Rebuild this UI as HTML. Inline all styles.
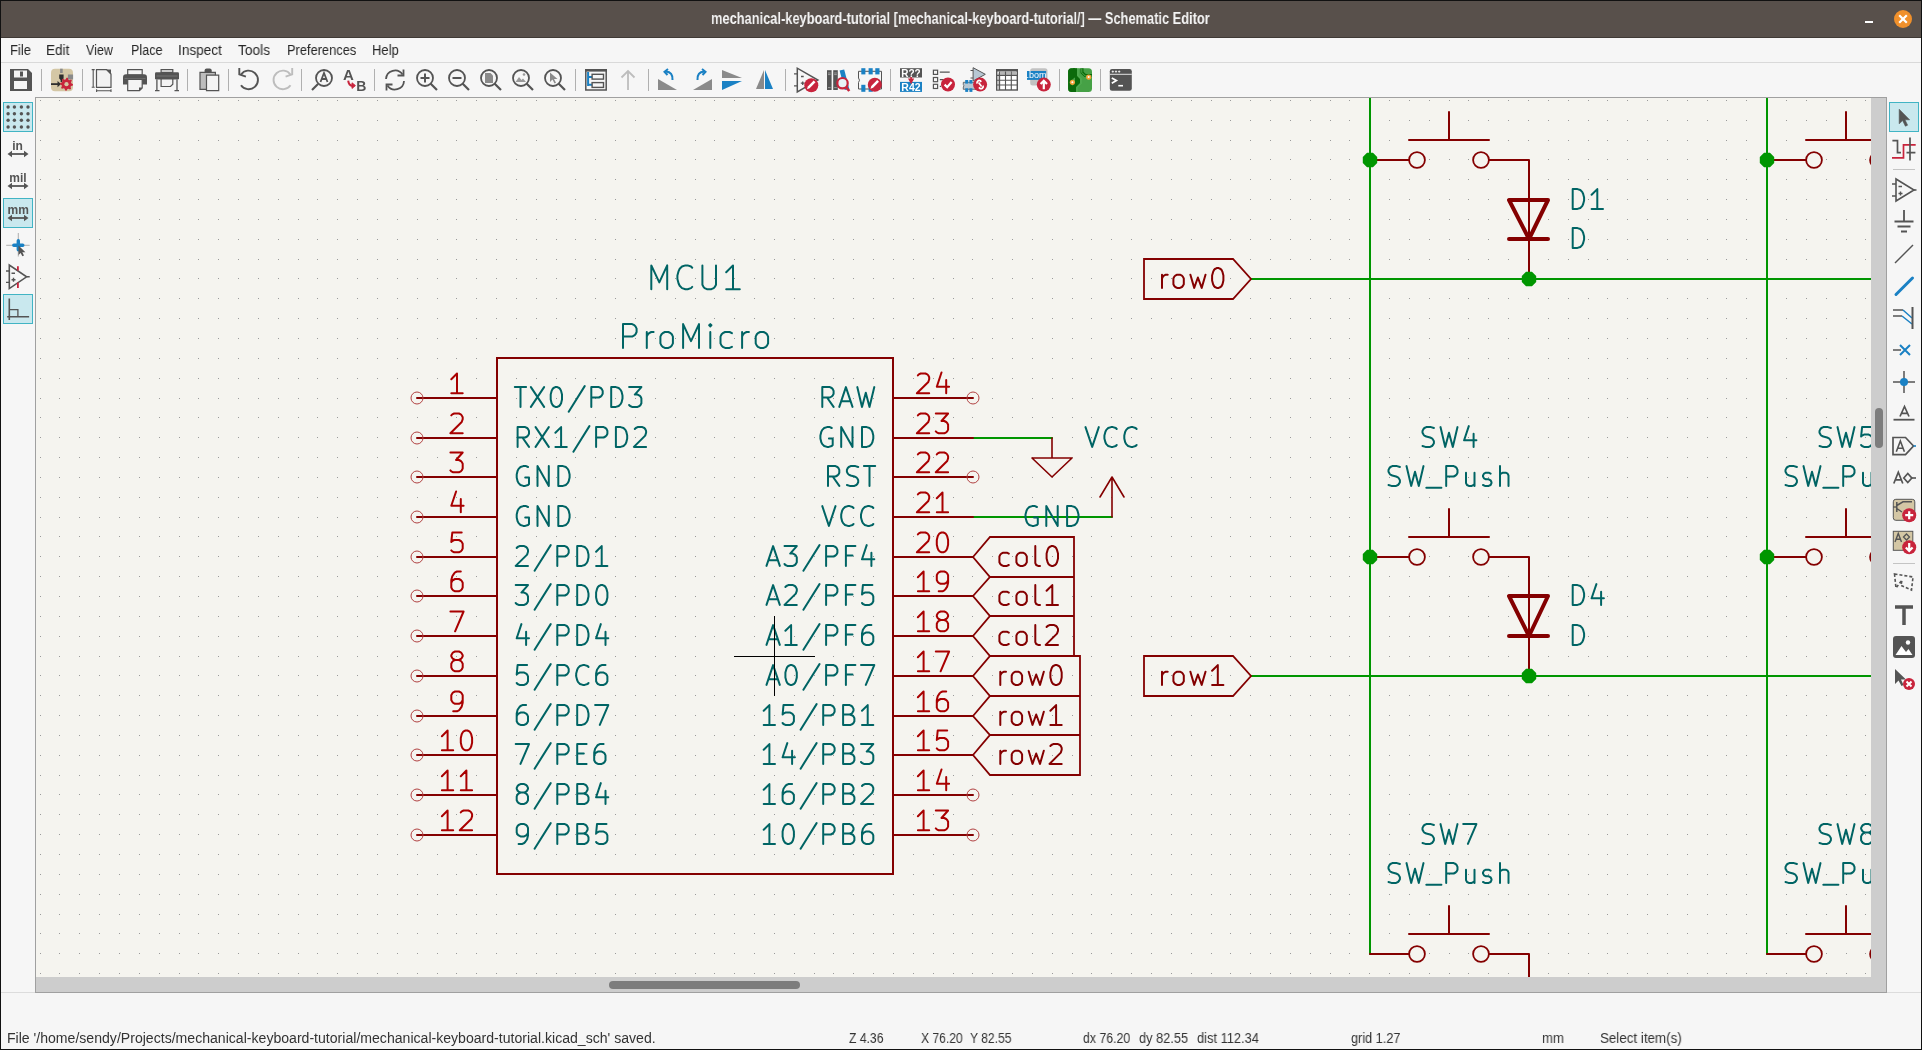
<!DOCTYPE html><html><head><meta charset="utf-8"><style>
*{margin:0;padding:0;box-sizing:border-box}
html,body{width:1922px;height:1050px;overflow:hidden;background:#f6f6f6;font-family:"Liberation Sans",sans-serif}
.a{position:absolute}
.t{position:absolute;white-space:pre;line-height:1;will-change:transform}
svg{will-change:transform;overflow:visible}
</style></head><body><div class="a" style="left:0;top:0;width:1922px;height:1050px;background:#f6f6f6"></div><div class="a" style="left:0;top:0;width:1922px;height:38px;background:#58504b;border-top:1px solid #1a1a1a"></div><div class="a" style="left:0;top:37px;width:1922px;height:1px;background:#3f3935"></div><div class="t" id="title" style="left:711px;top:11.2px;font-size:16px;font-weight:bold;color:#f4f4f4;transform:scaleX(0.8025);transform-origin:0 0">mechanical-keyboard-tutorial [mechanical-keyboard-tutorial/] — Schematic Editor</div><div class="a" style="left:1865px;top:21px;width:8px;height:2px;background:#fff"></div><div class="a" style="left:1894px;top:10px;width:18px;height:18px;border-radius:50%;background:#f0902b"></div><svg class="a" style="left:1894px;top:10px" width="18" height="18"><path d="M5.2 5.2L12.8 12.8M12.8 5.2L5.2 12.8" stroke="#fff" stroke-width="2.2"/></svg><div class="t" style="left:9.5px;top:43px;font-size:14px;color:#262626;transform:scaleX(0.93);transform-origin:0 0">File</div><div class="t" style="left:46px;top:43px;font-size:14px;color:#262626;transform:scaleX(0.97);transform-origin:0 0">Edit</div><div class="t" style="left:86px;top:43px;font-size:14px;color:#262626;transform:scaleX(0.89);transform-origin:0 0">View</div><div class="t" style="left:130.5px;top:43px;font-size:14px;color:#262626;transform:scaleX(0.9);transform-origin:0 0">Place</div><div class="t" style="left:178px;top:43px;font-size:14px;color:#262626;transform:scaleX(0.97);transform-origin:0 0">Inspect</div><div class="t" style="left:238px;top:43px;font-size:14px;color:#262626;transform:scaleX(0.98);transform-origin:0 0">Tools</div><div class="t" style="left:286.75px;top:43px;font-size:14px;color:#262626;transform:scaleX(0.917);transform-origin:0 0">Preferences</div><div class="t" style="left:371.75px;top:43px;font-size:14px;color:#262626;transform:scaleX(0.93);transform-origin:0 0">Help</div><div class="a" style="left:1px;top:62px;width:1920px;height:1px;background:#d9d9d9"></div><svg style="position:absolute;left:10px;top:69px" width="22" height="22" viewBox="0 0 22 22"><path d="M0 0H18L22 4V22H0Z" fill="#545454"/><rect x="4" y="1.5" width="13" height="7" fill="#f4f4f4"/><rect x="10" y="2.5" width="3" height="5" fill="#545454"/><rect x="4" y="12" width="13" height="8" fill="#f4f4f4"/></svg><div class="a" style="left:41px;top:69px;width:1px;height:22px;background:#b0b0b0"></div><svg style="position:absolute;left:51px;top:69px" width="22" height="22" viewBox="0 0 22 22"><rect x="0" y="-0.3" width="22" height="22.5" rx="4" fill="#d4c7a5"/><path d="M10.4 -0.3V4" stroke="#8a8a8a" stroke-width="2.6"/><rect x="16.9" y="5.5" width="5.2" height="4.9" fill="#8a8a8a"/><path d="M8.2 5.5H12.6V9.5L10.4 11.5L8.2 9.5Z" fill="#2e2e2e"/><path d="M10.4 9V13" stroke="#2e2e2e" stroke-width="1.6"/><path d="M0 15.1H7" stroke="#2e2e2e" stroke-width="1.8"/><path d="M6.5 12L10 15.1L6.5 18.2Z" fill="#2e2e2e"/><path d="M15.50 8.70L16.77 8.82L17.38 10.67L18.22 11.13L20.10 10.60L20.90 11.59L20.03 13.32L20.31 14.24L22.00 15.20L21.88 16.47L20.03 17.08L19.57 17.92L20.10 19.80L19.11 20.60L17.38 19.73L16.46 20.01L15.50 21.70L14.23 21.58L13.62 19.73L12.78 19.27L10.90 19.80L10.10 18.81L10.97 17.08L10.69 16.16L9.00 15.20L9.12 13.93L10.97 13.32L11.43 12.48L10.90 10.60L11.89 9.80L13.62 10.67L14.54 10.39Z" fill="#c8243c"/><circle cx="15.5" cy="15.2" r="2.1" fill="#d4c7a5"/></svg><div class="a" style="left:82px;top:69px;width:1px;height:22px;background:#b0b0b0"></div><svg style="position:absolute;left:92px;top:69px" width="22" height="22" viewBox="0 0 22 22"><path d="M4.5 0.6H14.5L19 5.1V18.4H4.5Z" fill="#f2f2f2" stroke="#545454" stroke-width="1.2"/><path d="M14 0.6L19 5.6V0.6Z" fill="#545454"/><path d="M1.2 0.3V18.3M-0.3 0.6H2.7M-0.3 18.3H2.7M4.6 21.7H19M4.6 20.2V23M19 20.2V23" stroke="#545454" stroke-width="1.1"/></svg><svg style="position:absolute;left:123px;top:69px" width="24" height="22" viewBox="0 0 24 22"><path d="M4.7 0.6H19.2V6H4.7Z" fill="#f4f4f4" stroke="#545454" stroke-width="1.2"/><path d="M0 8.5Q0 5.3 3 5.3H21Q24 5.3 24 8.5V15.6H0Z" fill="#545454"/><path d="M1.5 9.5H22.5" stroke="#8a8a8a" stroke-width="0.5"/><path d="M4.7 10.4H19.2V19L16.5 21.7H4.7Z" fill="#f4f4f4" stroke="#545454" stroke-width="1.2"/><path d="M19.2 18.5L16 21.7V18.5Z" fill="#545454"/></svg><svg style="position:absolute;left:155px;top:69px" width="24" height="22" viewBox="0 0 24 22"><path d="M6.1 0.6H17.8V3.4H6.1Z" fill="#f4f4f4" stroke="#545454" stroke-width="1.2"/><rect x="0" y="3.2" width="24" height="7.2" rx="1.2" fill="#545454"/><path d="M1.5 7H22.5" stroke="#8a8a8a" stroke-width="0.6"/><path d="M6.1 10H17.8V15.2L15.5 17.5H6.1Z" fill="#f4f4f4" stroke="#545454" stroke-width="1.2"/><path d="M1.9 10.4V21.7M22 10.4V21.7M0 21.7H4.5M19.5 21.7H24" stroke="#545454" stroke-width="1.3"/></svg><div class="a" style="left:187px;top:69px;width:1px;height:22px;background:#b0b0b0"></div><svg style="position:absolute;left:197px;top:69px" width="22" height="22" viewBox="0 0 22 22"><path d="M3 3.4H18.4V20.3H3Z" fill="#bdbdbd" stroke="#545454" stroke-width="1.2"/><path d="M7.6 3.6V1.5Q7.6 -0.5 9.6 -0.5H12.7Q14.7 -0.5 14.7 1.5V3.6Z" fill="#545454"/><path d="M9.5 6.2H21.7V21.7H9.5Z" fill="#f4f4f4" stroke="#545454" stroke-width="1.2"/></svg><div class="a" style="left:228px;top:69px;width:1px;height:22px;background:#b0b0b0"></div><svg style="position:absolute;left:238px;top:69px" width="22" height="22" viewBox="0 0 22 22"><path d="M3 5.6A9.3 9.3 0 1 1 3 16.2" fill="none" stroke="#545454" stroke-width="1.9"/><path d="M1.3 -1V5.3L7.9 7.6" fill="none" stroke="#545454" stroke-width="1.9"/></svg><svg style="position:absolute;left:270px;top:69px" width="22" height="22" viewBox="0 0 22 22"><g transform="translate(23.5 0) scale(-1 1)"><path d="M3 5.6A9.3 9.3 0 1 1 3 16.2" fill="none" stroke="#bdbdbd" stroke-width="1.9"/><path d="M1.3 -1V5.3L7.9 7.6" fill="none" stroke="#bdbdbd" stroke-width="1.9"/></g></svg><div class="a" style="left:301px;top:69px;width:1px;height:22px;background:#b0b0b0"></div><svg style="position:absolute;left:311px;top:69px" width="22" height="22" viewBox="0 0 22 22"><circle cx="13" cy="9" r="8" fill="none" stroke="#545454" stroke-width="1.8"/><path d="M7 15L1 21" stroke="#545454" stroke-width="2.2"/><path d="M9.5 13L13 4L16.5 13M10.8 10H15.2" fill="none" stroke="#545454" stroke-width="1.8"/></svg><svg style="position:absolute;left:343px;top:69px" width="22" height="22" viewBox="0 0 22 22"><text x="5.4" y="11.4" font-family="Liberation Sans" font-weight="bold" font-size="15" fill="#545454" text-anchor="middle">A</text><text x="18.2" y="21.5" font-family="Liberation Sans" font-weight="bold" font-size="14" fill="#545454" text-anchor="middle">B</text><path d="M5.2 11.6Q5.6 16.5 10 17" fill="none" stroke="#c8243c" stroke-width="2"/><path d="M9 13.8L12.4 16.6L9 19.4Z" fill="#c8243c" stroke="#c8243c" stroke-width="1"/></svg><div class="a" style="left:374px;top:69px;width:1px;height:22px;background:#b0b0b0"></div><svg style="position:absolute;left:384px;top:69px" width="22" height="22" viewBox="0 0 22 22"><path d="M2 10A9 9 0 0 1 18.5 5.5" fill="none" stroke="#545454" stroke-width="1.8"/><path d="M19.5 0.5V6.5H13.5" fill="none" stroke="#545454" stroke-width="1.8"/><path d="M20 12A9 9 0 0 1 3.5 16.5" fill="none" stroke="#545454" stroke-width="1.8"/><path d="M2.5 21.5V15.5H8.5" fill="none" stroke="#545454" stroke-width="1.8"/></svg><svg style="position:absolute;left:416px;top:69px" width="22" height="22" viewBox="0 0 22 22"><circle cx="9" cy="9" r="8" fill="none" stroke="#545454" stroke-width="1.8"/><path d="M14.5 14.5L21 21" stroke="#545454" stroke-width="2.2"/><path d="M9 4.5V13.5M4.5 9H13.5" stroke="#545454" stroke-width="2"/></svg><svg style="position:absolute;left:448px;top:69px" width="22" height="22" viewBox="0 0 22 22"><circle cx="9" cy="9" r="8" fill="none" stroke="#545454" stroke-width="1.8"/><path d="M14.5 14.5L21 21" stroke="#545454" stroke-width="2.2"/><path d="M4.5 9H13.5" stroke="#545454" stroke-width="2"/></svg><svg style="position:absolute;left:480px;top:69px" width="22" height="22" viewBox="0 0 22 22"><circle cx="9" cy="9" r="8" fill="none" stroke="#545454" stroke-width="1.8"/><path d="M14.5 14.5L21 21" stroke="#545454" stroke-width="2.2"/><path d="M5 4H10.5L13 6.5V14H5Z" fill="#8a8a8a"/></svg><svg style="position:absolute;left:512px;top:69px" width="22" height="22" viewBox="0 0 22 22"><circle cx="9" cy="9" r="8" fill="none" stroke="#545454" stroke-width="1.8"/><path d="M14.5 14.5L21 21" stroke="#545454" stroke-width="2.2"/><path d="M3.5 13L7 8L9.5 11L11 9.5L14 13Z" fill="#9a9a9a"/><circle cx="12" cy="5.5" r="1.3" fill="#9a9a9a"/></svg><svg style="position:absolute;left:544px;top:69px" width="22" height="22" viewBox="0 0 22 22"><circle cx="9" cy="9" r="8" fill="none" stroke="#545454" stroke-width="1.8"/><path d="M14.5 14.5L21 21" stroke="#545454" stroke-width="2.2"/><path d="M6 3.5V13L8.5 10.5L10.5 14.5L12 13.8L10 10H13.5Z" fill="#8a8a8a"/></svg><div class="a" style="left:575px;top:69px;width:1px;height:22px;background:#b0b0b0"></div><svg style="position:absolute;left:585px;top:69px" width="22" height="22" viewBox="0 0 22 22"><rect x="0.8" y="0.8" width="20.4" height="20.2" fill="none" stroke="#545454" stroke-width="1.5"/><rect x="0" y="0" width="22" height="2.6" fill="#545454"/><path d="M3.1 3V17M3.1 8.1H7.1M3.1 15.8H7.1" fill="none" stroke="#1a81c4" stroke-width="2"/><rect x="7.1" y="5.3" width="11.4" height="4.8" fill="none" stroke="#545454" stroke-width="1.4"/><rect x="7.1" y="13.6" width="11.4" height="4.8" fill="none" stroke="#545454" stroke-width="1.4"/></svg><svg style="position:absolute;left:617px;top:69px" width="22" height="22" viewBox="0 0 22 22"><path d="M11 2V21M4.5 8.5L11 2L17.5 8.5" fill="none" stroke="#bdbdbd" stroke-width="1.8"/></svg><div class="a" style="left:648px;top:69px;width:1px;height:22px;background:#b0b0b0"></div><svg style="position:absolute;left:658px;top:69px" width="22" height="22" viewBox="0 0 22 22"><path d="M0 10V21H19Z" fill="#8a8a8a"/><path d="M14.5 11Q15 3 8 2.5" fill="none" stroke="#1a81c4" stroke-width="2"/><path d="M10 0L6.5 2.8L9.5 6" fill="none" stroke="#1a81c4" stroke-width="2"/></svg><svg style="position:absolute;left:690px;top:69px" width="22" height="22" viewBox="0 0 22 22"><path d="M22 10V21H3Z" fill="#8a8a8a"/><path d="M7.5 11Q7 3 14 2.5" fill="none" stroke="#1a81c4" stroke-width="2"/><path d="M12 0L15.5 2.8L12.5 6" fill="none" stroke="#1a81c4" stroke-width="2"/></svg><svg style="position:absolute;left:722px;top:69px" width="22" height="22" viewBox="0 0 22 22"><path d="M0 1L20 9H0Z" fill="#8a8a8a"/><path d="M0 21L20 12H0Z" fill="#1a81c4"/></svg><svg style="position:absolute;left:754px;top:69px" width="22" height="22" viewBox="0 0 22 22"><path d="M10 1L2 20H10Z" fill="#8a8a8a"/><path d="M11 1L19 20H11Z" fill="#1a81c4"/></svg><div class="a" style="left:785px;top:69px;width:1px;height:22px;background:#b0b0b0"></div><svg style="position:absolute;left:795px;top:69px" width="22" height="22" viewBox="0 0 22 22"><path d="M2.3 -0.8V22.9L22.9 11.1Z" fill="none" stroke="#545454" stroke-width="1.5"/><path d="M-1 4.9H2.3M-1 16.9H2.3M6 7.5H8.7M5.8 14.2H9.6M7.7 12.4V16" stroke="#545454" stroke-width="1.3"/><circle cx="16.3" cy="16.3" r="7" fill="#c8243c"/><g transform="translate(-0.5 0.2)"><path d="M12.5 20L13.3 17.2L19.2 11.3L21 13.1L15.1 19Z" fill="#fff"/></g></svg><svg style="position:absolute;left:827px;top:69px" width="22" height="22" viewBox="0 0 22 22"><rect x="0" y="1.2" width="4.6" height="19.8" fill="#545454"/><rect x="6.2" y="1.2" width="4.6" height="19.8" fill="#545454"/><path d="M12.6 1.5L17.2 0.4L22.3 20L17.8 21Z" fill="#1a81c4"/><path d="M1 4H3.6M7.2 4H9.8M1 5.6H3.6M7.2 5.6H9.8M1 18.6H3.6M7.2 18.6H9.8" stroke="#bbb" stroke-width="0.7"/><circle cx="15.5" cy="14.2" r="5.2" fill="#e8f1f6" stroke="#c8243c" stroke-width="2.2"/><path d="M18.8 17.8L22.3 22" stroke="#c8243c" stroke-width="2.6"/></svg><svg style="position:absolute;left:859px;top:69px" width="22" height="22" viewBox="0 0 22 22"><path d="M-0.5 2.3H22.5V20H-0.5V13.5Q1.5 11.2 -0.5 9Z" fill="none" stroke="#545454" stroke-width="1"/><g fill="#1a81c4"><rect x="2.3" y="-0.8" width="4.1" height="6.2"/><rect x="9.6" y="-0.8" width="4.1" height="6.2"/><rect x="16.3" y="-0.8" width="4.2" height="6.2"/><rect x="2.3" y="15.8" width="4.1" height="7"/><rect x="9.6" y="15.8" width="4.1" height="7"/></g><circle cx="15.8" cy="15.8" r="7" fill="#c8243c"/><g transform="translate(-1 -0.3)"><path d="M12.5 20L13.3 17.2L19.2 11.3L21 13.1L15.1 19Z" fill="#fff"/></g></svg><div class="a" style="left:890px;top:69px;width:1px;height:22px;background:#b0b0b0"></div><svg style="position:absolute;left:900px;top:69px" width="22" height="22" viewBox="0 0 22 22"><rect x="0" y="-0.8" width="22" height="9.3" fill="#545454"/><rect x="0" y="12.9" width="22" height="10" fill="#1a81c4"/><text x="11" y="7.6" font-family="Liberation Sans" font-weight="bold" font-size="10" fill="#fff" text-anchor="middle">R??</text><text x="11" y="21.8" font-family="Liberation Sans" font-weight="bold" font-size="10.5" fill="#fff" text-anchor="middle">R42</text><path d="M8 9.6H14.2L11.1 15.3Z" fill="#c8243c"/><path d="M11.1 8V11" stroke="#c8243c" stroke-width="1.6"/></svg><svg style="position:absolute;left:932px;top:69px" width="22" height="22" viewBox="0 0 22 22"><g fill="none" stroke="#545454" stroke-width="1.2"><rect x="1.4" y="1.2" width="4.2" height="4.2"/><rect x="1.4" y="8.5" width="4.2" height="4.2"/><rect x="1.4" y="15.3" width="4.2" height="4.2"/><path d="M7.8 3.1H17.7M7.8 10.6H11.5M7.8 17.4H9"/></g><circle cx="16" cy="15.5" r="7" fill="#c8243c"/><path d="M12.6 15.6L15.2 18.2L19.6 13" fill="none" stroke="#fff" stroke-width="2.2"/></svg><svg style="position:absolute;left:964px;top:69px" width="22" height="22" viewBox="0 0 22 22"><path d="M9.1 -1.3V12L21.3 5.3Z" fill="#b7c7d3" stroke="#545454" stroke-width="1"/><path d="M6.5 1.5H9.1M6.5 9H9.1" stroke="#545454" stroke-width="1"/><path d="M-0.7 13.3H12V20.3H-0.7V18Q0.5 16.8 -0.7 15.6Z" fill="#b7c7d3" stroke="#545454" stroke-width="0.8"/><g fill="#1a81c4"><rect x="1.2" y="11" width="3" height="3.6"/><rect x="5.4" y="11" width="3" height="3.6"/><rect x="1.2" y="19.3" width="3" height="3.6"/><rect x="5.4" y="19.3" width="3" height="3.6"/></g><circle cx="16.1" cy="15.6" r="7" fill="#c8243c"/><g fill="none" stroke="#fff" stroke-width="1.7"><path d="M13.2 14.6A2.2 2.2 0 0 1 16.3 11.8L17.3 12.8"/><path d="M19 16.6A2.2 2.2 0 0 1 15.9 19.4L14.9 18.4"/><path d="M14.6 13.6L17.6 17.6"/></g></svg><svg style="position:absolute;left:996px;top:69px" width="22" height="22" viewBox="0 0 22 22"><rect x="0.7" y="0.8" width="20.6" height="20.2" fill="#fff" stroke="#545454" stroke-width="1.4"/><rect x="0" y="0.1" width="22" height="2.4" fill="#545454"/><g fill="#b5b5b5"><rect x="1" y="3.5" width="1.8" height="17"/><rect x="4.3" y="3" width="4.7" height="2.8"/><rect x="9.9" y="3" width="4.7" height="2.8"/><rect x="16" y="3" width="4.6" height="2.8"/></g><path d="M3.6 2.5V21M9.5 2.5V21M15.3 2.5V21M1 6.4H21M1 11.2H21M1 16H21" stroke="#545454" stroke-width="1.1"/></svg><svg style="position:absolute;left:1028px;top:69px" width="22" height="22" viewBox="0 0 22 22"><rect x="2.2" y="-0.8" width="17.3" height="17.3" rx="2.5" fill="#c2c2c2"/><rect x="-1" y="2" width="19.1" height="8.9" fill="#1a81c4"/><text x="8.6" y="9.4" font-family="Liberation Sans" font-size="9" fill="#fff" text-anchor="middle">.bom</text><circle cx="15.8" cy="15.6" r="7" fill="#c8243c"/><path d="M15.8 20.2V12M12.6 15L15.8 11.8L19 15" fill="none" stroke="#fff" stroke-width="2.2"/></svg><div class="a" style="left:1059px;top:69px;width:1px;height:22px;background:#b0b0b0"></div><svg style="position:absolute;left:1069px;top:69px" width="22" height="22" viewBox="0 0 22 22"><defs><clipPath id="pcbc"><rect x="-0.9" y="-0.8" width="23.9" height="23.9" rx="3.5"/></clipPath></defs><g clip-path="url(#pcbc)"><rect x="-1" y="-1" width="25" height="25" fill="#46a146"/><path d="M-1 -1H6V8L3 11V24H-1Z" fill="#0b6a0b"/><path d="M8 -1V7L11 10V14L7 18V24H3V17L6 13V9L4 7V-1Z" fill="#0b6a0b"/><path d="M11.5 -1V4L15.5 8H24V5H16.8L14.5 2.7V-1Z" fill="#0b6a0b"/><path d="M9 -1V6.5L12 9.5V14.5L8 18.5V24M12.8 -1V3.5L16.3 7H24" fill="none" stroke="#5cb85c" stroke-width="0.8"/></g><circle cx="3.4" cy="13.3" r="2.6" fill="#f4a43a"/><circle cx="19.7" cy="8.1" r="2.6" fill="#f4a43a"/><circle cx="3.4" cy="13.3" r="1" fill="#fff"/><circle cx="19.7" cy="8.1" r="1" fill="#fff"/></svg><div class="a" style="left:1100px;top:69px;width:1px;height:22px;background:#b0b0b0"></div><svg style="position:absolute;left:1110px;top:69px" width="22" height="22" viewBox="0 0 22 22"><rect x="-0.2" y="0.1" width="22" height="21.6" rx="2.2" fill="#545454"/><path d="M-0.2 5.3H21.8" stroke="#f4f4f4" stroke-width="0.9"/><path d="M1.7 2.6H3.9M2.8 1.5V3.7M4.9 2.6H7.1M6 1.5V3.7M8.1 2.6H10.3M9.2 1.5V3.7" stroke="#fff" stroke-width="0.8"/><path d="M1.8 9L6.4 11.6L1.8 14.3" fill="none" stroke="#fff" stroke-width="1.7"/><path d="M8.3 16.7H13" stroke="#fff" stroke-width="1.6"/></svg><div class="a" style="left:35px;top:97px;width:1852px;height:896px;background:#cdcdcd;border:1px solid #a0a0a0"></div><div class="a" style="left:36px;top:98px;width:1835px;height:879px;background:#f5f4ef"></div><svg class="a" style="left:0;top:0" width="1922" height="1050"><defs><clipPath id="cv"><rect x="36" y="98" width="1835" height="879"/></clipPath></defs><g clip-path="url(#cv)"><path d="M40 100h1v1h-1zM59 100h1v1h-1zM79 100h1v1h-1zM99 100h1v1h-1zM119 100h1v1h-1zM139 100h1v1h-1zM159 100h1v1h-1zM179 100h1v1h-1zM198 100h1v1h-1zM218 100h1v1h-1zM238 100h1v1h-1zM258 100h1v1h-1zM278 100h1v1h-1zM298 100h1v1h-1zM317 100h1v1h-1zM337 100h1v1h-1zM357 100h1v1h-1zM377 100h1v1h-1zM397 100h1v1h-1zM417 100h1v1h-1zM437 100h1v1h-1zM456 100h1v1h-1zM476 100h1v1h-1zM496 100h1v1h-1zM516 100h1v1h-1zM536 100h1v1h-1zM556 100h1v1h-1zM575 100h1v1h-1zM595 100h1v1h-1zM615 100h1v1h-1zM635 100h1v1h-1zM655 100h1v1h-1zM675 100h1v1h-1zM695 100h1v1h-1zM714 100h1v1h-1zM734 100h1v1h-1zM754 100h1v1h-1zM774 100h1v1h-1zM794 100h1v1h-1zM814 100h1v1h-1zM833 100h1v1h-1zM853 100h1v1h-1zM873 100h1v1h-1zM893 100h1v1h-1zM913 100h1v1h-1zM933 100h1v1h-1zM953 100h1v1h-1zM972 100h1v1h-1zM992 100h1v1h-1zM1012 100h1v1h-1zM1032 100h1v1h-1zM1052 100h1v1h-1zM1072 100h1v1h-1zM1091 100h1v1h-1zM1111 100h1v1h-1zM1131 100h1v1h-1zM1151 100h1v1h-1zM1171 100h1v1h-1zM1191 100h1v1h-1zM1211 100h1v1h-1zM1230 100h1v1h-1zM1250 100h1v1h-1zM1270 100h1v1h-1zM1290 100h1v1h-1zM1310 100h1v1h-1zM1330 100h1v1h-1zM1349 100h1v1h-1zM1369 100h1v1h-1zM1389 100h1v1h-1zM1409 100h1v1h-1zM1429 100h1v1h-1zM1449 100h1v1h-1zM1468 100h1v1h-1zM1488 100h1v1h-1zM1508 100h1v1h-1zM1528 100h1v1h-1zM1548 100h1v1h-1zM1568 100h1v1h-1zM1588 100h1v1h-1zM1607 100h1v1h-1zM1627 100h1v1h-1zM1647 100h1v1h-1zM1667 100h1v1h-1zM1687 100h1v1h-1zM1707 100h1v1h-1zM1726 100h1v1h-1zM1746 100h1v1h-1zM1766 100h1v1h-1zM1786 100h1v1h-1zM1806 100h1v1h-1zM1826 100h1v1h-1zM1846 100h1v1h-1zM1865 100h1v1h-1zM40 120h1v1h-1zM59 120h1v1h-1zM79 120h1v1h-1zM99 120h1v1h-1zM119 120h1v1h-1zM139 120h1v1h-1zM159 120h1v1h-1zM179 120h1v1h-1zM198 120h1v1h-1zM218 120h1v1h-1zM238 120h1v1h-1zM258 120h1v1h-1zM278 120h1v1h-1zM298 120h1v1h-1zM317 120h1v1h-1zM337 120h1v1h-1zM357 120h1v1h-1zM377 120h1v1h-1zM397 120h1v1h-1zM417 120h1v1h-1zM437 120h1v1h-1zM456 120h1v1h-1zM476 120h1v1h-1zM496 120h1v1h-1zM516 120h1v1h-1zM536 120h1v1h-1zM556 120h1v1h-1zM575 120h1v1h-1zM595 120h1v1h-1zM615 120h1v1h-1zM635 120h1v1h-1zM655 120h1v1h-1zM675 120h1v1h-1zM695 120h1v1h-1zM714 120h1v1h-1zM734 120h1v1h-1zM754 120h1v1h-1zM774 120h1v1h-1zM794 120h1v1h-1zM814 120h1v1h-1zM833 120h1v1h-1zM853 120h1v1h-1zM873 120h1v1h-1zM893 120h1v1h-1zM913 120h1v1h-1zM933 120h1v1h-1zM953 120h1v1h-1zM972 120h1v1h-1zM992 120h1v1h-1zM1012 120h1v1h-1zM1032 120h1v1h-1zM1052 120h1v1h-1zM1072 120h1v1h-1zM1091 120h1v1h-1zM1111 120h1v1h-1zM1131 120h1v1h-1zM1151 120h1v1h-1zM1171 120h1v1h-1zM1191 120h1v1h-1zM1211 120h1v1h-1zM1230 120h1v1h-1zM1250 120h1v1h-1zM1270 120h1v1h-1zM1290 120h1v1h-1zM1310 120h1v1h-1zM1330 120h1v1h-1zM1349 120h1v1h-1zM1369 120h1v1h-1zM1389 120h1v1h-1zM1409 120h1v1h-1zM1429 120h1v1h-1zM1449 120h1v1h-1zM1468 120h1v1h-1zM1488 120h1v1h-1zM1508 120h1v1h-1zM1528 120h1v1h-1zM1548 120h1v1h-1zM1568 120h1v1h-1zM1588 120h1v1h-1zM1607 120h1v1h-1zM1627 120h1v1h-1zM1647 120h1v1h-1zM1667 120h1v1h-1zM1687 120h1v1h-1zM1707 120h1v1h-1zM1726 120h1v1h-1zM1746 120h1v1h-1zM1766 120h1v1h-1zM1786 120h1v1h-1zM1806 120h1v1h-1zM1826 120h1v1h-1zM1846 120h1v1h-1zM1865 120h1v1h-1zM40 140h1v1h-1zM59 140h1v1h-1zM79 140h1v1h-1zM99 140h1v1h-1zM119 140h1v1h-1zM139 140h1v1h-1zM159 140h1v1h-1zM179 140h1v1h-1zM198 140h1v1h-1zM218 140h1v1h-1zM238 140h1v1h-1zM258 140h1v1h-1zM278 140h1v1h-1zM298 140h1v1h-1zM317 140h1v1h-1zM337 140h1v1h-1zM357 140h1v1h-1zM377 140h1v1h-1zM397 140h1v1h-1zM417 140h1v1h-1zM437 140h1v1h-1zM456 140h1v1h-1zM476 140h1v1h-1zM496 140h1v1h-1zM516 140h1v1h-1zM536 140h1v1h-1zM556 140h1v1h-1zM575 140h1v1h-1zM595 140h1v1h-1zM615 140h1v1h-1zM635 140h1v1h-1zM655 140h1v1h-1zM675 140h1v1h-1zM695 140h1v1h-1zM714 140h1v1h-1zM734 140h1v1h-1zM754 140h1v1h-1zM774 140h1v1h-1zM794 140h1v1h-1zM814 140h1v1h-1zM833 140h1v1h-1zM853 140h1v1h-1zM873 140h1v1h-1zM893 140h1v1h-1zM913 140h1v1h-1zM933 140h1v1h-1zM953 140h1v1h-1zM972 140h1v1h-1zM992 140h1v1h-1zM1012 140h1v1h-1zM1032 140h1v1h-1zM1052 140h1v1h-1zM1072 140h1v1h-1zM1091 140h1v1h-1zM1111 140h1v1h-1zM1131 140h1v1h-1zM1151 140h1v1h-1zM1171 140h1v1h-1zM1191 140h1v1h-1zM1211 140h1v1h-1zM1230 140h1v1h-1zM1250 140h1v1h-1zM1270 140h1v1h-1zM1290 140h1v1h-1zM1310 140h1v1h-1zM1330 140h1v1h-1zM1349 140h1v1h-1zM1369 140h1v1h-1zM1389 140h1v1h-1zM1409 140h1v1h-1zM1429 140h1v1h-1zM1449 140h1v1h-1zM1468 140h1v1h-1zM1488 140h1v1h-1zM1508 140h1v1h-1zM1528 140h1v1h-1zM1548 140h1v1h-1zM1568 140h1v1h-1zM1588 140h1v1h-1zM1607 140h1v1h-1zM1627 140h1v1h-1zM1647 140h1v1h-1zM1667 140h1v1h-1zM1687 140h1v1h-1zM1707 140h1v1h-1zM1726 140h1v1h-1zM1746 140h1v1h-1zM1766 140h1v1h-1zM1786 140h1v1h-1zM1806 140h1v1h-1zM1826 140h1v1h-1zM1846 140h1v1h-1zM1865 140h1v1h-1zM40 159h1v1h-1zM59 159h1v1h-1zM79 159h1v1h-1zM99 159h1v1h-1zM119 159h1v1h-1zM139 159h1v1h-1zM159 159h1v1h-1zM179 159h1v1h-1zM198 159h1v1h-1zM218 159h1v1h-1zM238 159h1v1h-1zM258 159h1v1h-1zM278 159h1v1h-1zM298 159h1v1h-1zM317 159h1v1h-1zM337 159h1v1h-1zM357 159h1v1h-1zM377 159h1v1h-1zM397 159h1v1h-1zM417 159h1v1h-1zM437 159h1v1h-1zM456 159h1v1h-1zM476 159h1v1h-1zM496 159h1v1h-1zM516 159h1v1h-1zM536 159h1v1h-1zM556 159h1v1h-1zM575 159h1v1h-1zM595 159h1v1h-1zM615 159h1v1h-1zM635 159h1v1h-1zM655 159h1v1h-1zM675 159h1v1h-1zM695 159h1v1h-1zM714 159h1v1h-1zM734 159h1v1h-1zM754 159h1v1h-1zM774 159h1v1h-1zM794 159h1v1h-1zM814 159h1v1h-1zM833 159h1v1h-1zM853 159h1v1h-1zM873 159h1v1h-1zM893 159h1v1h-1zM913 159h1v1h-1zM933 159h1v1h-1zM953 159h1v1h-1zM972 159h1v1h-1zM992 159h1v1h-1zM1012 159h1v1h-1zM1032 159h1v1h-1zM1052 159h1v1h-1zM1072 159h1v1h-1zM1091 159h1v1h-1zM1111 159h1v1h-1zM1131 159h1v1h-1zM1151 159h1v1h-1zM1171 159h1v1h-1zM1191 159h1v1h-1zM1211 159h1v1h-1zM1230 159h1v1h-1zM1250 159h1v1h-1zM1270 159h1v1h-1zM1290 159h1v1h-1zM1310 159h1v1h-1zM1330 159h1v1h-1zM1349 159h1v1h-1zM1369 159h1v1h-1zM1389 159h1v1h-1zM1409 159h1v1h-1zM1429 159h1v1h-1zM1449 159h1v1h-1zM1468 159h1v1h-1zM1488 159h1v1h-1zM1508 159h1v1h-1zM1528 159h1v1h-1zM1548 159h1v1h-1zM1568 159h1v1h-1zM1588 159h1v1h-1zM1607 159h1v1h-1zM1627 159h1v1h-1zM1647 159h1v1h-1zM1667 159h1v1h-1zM1687 159h1v1h-1zM1707 159h1v1h-1zM1726 159h1v1h-1zM1746 159h1v1h-1zM1766 159h1v1h-1zM1786 159h1v1h-1zM1806 159h1v1h-1zM1826 159h1v1h-1zM1846 159h1v1h-1zM1865 159h1v1h-1zM40 179h1v1h-1zM59 179h1v1h-1zM79 179h1v1h-1zM99 179h1v1h-1zM119 179h1v1h-1zM139 179h1v1h-1zM159 179h1v1h-1zM179 179h1v1h-1zM198 179h1v1h-1zM218 179h1v1h-1zM238 179h1v1h-1zM258 179h1v1h-1zM278 179h1v1h-1zM298 179h1v1h-1zM317 179h1v1h-1zM337 179h1v1h-1zM357 179h1v1h-1zM377 179h1v1h-1zM397 179h1v1h-1zM417 179h1v1h-1zM437 179h1v1h-1zM456 179h1v1h-1zM476 179h1v1h-1zM496 179h1v1h-1zM516 179h1v1h-1zM536 179h1v1h-1zM556 179h1v1h-1zM575 179h1v1h-1zM595 179h1v1h-1zM615 179h1v1h-1zM635 179h1v1h-1zM655 179h1v1h-1zM675 179h1v1h-1zM695 179h1v1h-1zM714 179h1v1h-1zM734 179h1v1h-1zM754 179h1v1h-1zM774 179h1v1h-1zM794 179h1v1h-1zM814 179h1v1h-1zM833 179h1v1h-1zM853 179h1v1h-1zM873 179h1v1h-1zM893 179h1v1h-1zM913 179h1v1h-1zM933 179h1v1h-1zM953 179h1v1h-1zM972 179h1v1h-1zM992 179h1v1h-1zM1012 179h1v1h-1zM1032 179h1v1h-1zM1052 179h1v1h-1zM1072 179h1v1h-1zM1091 179h1v1h-1zM1111 179h1v1h-1zM1131 179h1v1h-1zM1151 179h1v1h-1zM1171 179h1v1h-1zM1191 179h1v1h-1zM1211 179h1v1h-1zM1230 179h1v1h-1zM1250 179h1v1h-1zM1270 179h1v1h-1zM1290 179h1v1h-1zM1310 179h1v1h-1zM1330 179h1v1h-1zM1349 179h1v1h-1zM1369 179h1v1h-1zM1389 179h1v1h-1zM1409 179h1v1h-1zM1429 179h1v1h-1zM1449 179h1v1h-1zM1468 179h1v1h-1zM1488 179h1v1h-1zM1508 179h1v1h-1zM1528 179h1v1h-1zM1548 179h1v1h-1zM1568 179h1v1h-1zM1588 179h1v1h-1zM1607 179h1v1h-1zM1627 179h1v1h-1zM1647 179h1v1h-1zM1667 179h1v1h-1zM1687 179h1v1h-1zM1707 179h1v1h-1zM1726 179h1v1h-1zM1746 179h1v1h-1zM1766 179h1v1h-1zM1786 179h1v1h-1zM1806 179h1v1h-1zM1826 179h1v1h-1zM1846 179h1v1h-1zM1865 179h1v1h-1zM40 199h1v1h-1zM59 199h1v1h-1zM79 199h1v1h-1zM99 199h1v1h-1zM119 199h1v1h-1zM139 199h1v1h-1zM159 199h1v1h-1zM179 199h1v1h-1zM198 199h1v1h-1zM218 199h1v1h-1zM238 199h1v1h-1zM258 199h1v1h-1zM278 199h1v1h-1zM298 199h1v1h-1zM317 199h1v1h-1zM337 199h1v1h-1zM357 199h1v1h-1zM377 199h1v1h-1zM397 199h1v1h-1zM417 199h1v1h-1zM437 199h1v1h-1zM456 199h1v1h-1zM476 199h1v1h-1zM496 199h1v1h-1zM516 199h1v1h-1zM536 199h1v1h-1zM556 199h1v1h-1zM575 199h1v1h-1zM595 199h1v1h-1zM615 199h1v1h-1zM635 199h1v1h-1zM655 199h1v1h-1zM675 199h1v1h-1zM695 199h1v1h-1zM714 199h1v1h-1zM734 199h1v1h-1zM754 199h1v1h-1zM774 199h1v1h-1zM794 199h1v1h-1zM814 199h1v1h-1zM833 199h1v1h-1zM853 199h1v1h-1zM873 199h1v1h-1zM893 199h1v1h-1zM913 199h1v1h-1zM933 199h1v1h-1zM953 199h1v1h-1zM972 199h1v1h-1zM992 199h1v1h-1zM1012 199h1v1h-1zM1032 199h1v1h-1zM1052 199h1v1h-1zM1072 199h1v1h-1zM1091 199h1v1h-1zM1111 199h1v1h-1zM1131 199h1v1h-1zM1151 199h1v1h-1zM1171 199h1v1h-1zM1191 199h1v1h-1zM1211 199h1v1h-1zM1230 199h1v1h-1zM1250 199h1v1h-1zM1270 199h1v1h-1zM1290 199h1v1h-1zM1310 199h1v1h-1zM1330 199h1v1h-1zM1349 199h1v1h-1zM1369 199h1v1h-1zM1389 199h1v1h-1zM1409 199h1v1h-1zM1429 199h1v1h-1zM1449 199h1v1h-1zM1468 199h1v1h-1zM1488 199h1v1h-1zM1508 199h1v1h-1zM1528 199h1v1h-1zM1548 199h1v1h-1zM1568 199h1v1h-1zM1588 199h1v1h-1zM1607 199h1v1h-1zM1627 199h1v1h-1zM1647 199h1v1h-1zM1667 199h1v1h-1zM1687 199h1v1h-1zM1707 199h1v1h-1zM1726 199h1v1h-1zM1746 199h1v1h-1zM1766 199h1v1h-1zM1786 199h1v1h-1zM1806 199h1v1h-1zM1826 199h1v1h-1zM1846 199h1v1h-1zM1865 199h1v1h-1zM40 219h1v1h-1zM59 219h1v1h-1zM79 219h1v1h-1zM99 219h1v1h-1zM119 219h1v1h-1zM139 219h1v1h-1zM159 219h1v1h-1zM179 219h1v1h-1zM198 219h1v1h-1zM218 219h1v1h-1zM238 219h1v1h-1zM258 219h1v1h-1zM278 219h1v1h-1zM298 219h1v1h-1zM317 219h1v1h-1zM337 219h1v1h-1zM357 219h1v1h-1zM377 219h1v1h-1zM397 219h1v1h-1zM417 219h1v1h-1zM437 219h1v1h-1zM456 219h1v1h-1zM476 219h1v1h-1zM496 219h1v1h-1zM516 219h1v1h-1zM536 219h1v1h-1zM556 219h1v1h-1zM575 219h1v1h-1zM595 219h1v1h-1zM615 219h1v1h-1zM635 219h1v1h-1zM655 219h1v1h-1zM675 219h1v1h-1zM695 219h1v1h-1zM714 219h1v1h-1zM734 219h1v1h-1zM754 219h1v1h-1zM774 219h1v1h-1zM794 219h1v1h-1zM814 219h1v1h-1zM833 219h1v1h-1zM853 219h1v1h-1zM873 219h1v1h-1zM893 219h1v1h-1zM913 219h1v1h-1zM933 219h1v1h-1zM953 219h1v1h-1zM972 219h1v1h-1zM992 219h1v1h-1zM1012 219h1v1h-1zM1032 219h1v1h-1zM1052 219h1v1h-1zM1072 219h1v1h-1zM1091 219h1v1h-1zM1111 219h1v1h-1zM1131 219h1v1h-1zM1151 219h1v1h-1zM1171 219h1v1h-1zM1191 219h1v1h-1zM1211 219h1v1h-1zM1230 219h1v1h-1zM1250 219h1v1h-1zM1270 219h1v1h-1zM1290 219h1v1h-1zM1310 219h1v1h-1zM1330 219h1v1h-1zM1349 219h1v1h-1zM1369 219h1v1h-1zM1389 219h1v1h-1zM1409 219h1v1h-1zM1429 219h1v1h-1zM1449 219h1v1h-1zM1468 219h1v1h-1zM1488 219h1v1h-1zM1508 219h1v1h-1zM1528 219h1v1h-1zM1548 219h1v1h-1zM1568 219h1v1h-1zM1588 219h1v1h-1zM1607 219h1v1h-1zM1627 219h1v1h-1zM1647 219h1v1h-1zM1667 219h1v1h-1zM1687 219h1v1h-1zM1707 219h1v1h-1zM1726 219h1v1h-1zM1746 219h1v1h-1zM1766 219h1v1h-1zM1786 219h1v1h-1zM1806 219h1v1h-1zM1826 219h1v1h-1zM1846 219h1v1h-1zM1865 219h1v1h-1zM40 239h1v1h-1zM59 239h1v1h-1zM79 239h1v1h-1zM99 239h1v1h-1zM119 239h1v1h-1zM139 239h1v1h-1zM159 239h1v1h-1zM179 239h1v1h-1zM198 239h1v1h-1zM218 239h1v1h-1zM238 239h1v1h-1zM258 239h1v1h-1zM278 239h1v1h-1zM298 239h1v1h-1zM317 239h1v1h-1zM337 239h1v1h-1zM357 239h1v1h-1zM377 239h1v1h-1zM397 239h1v1h-1zM417 239h1v1h-1zM437 239h1v1h-1zM456 239h1v1h-1zM476 239h1v1h-1zM496 239h1v1h-1zM516 239h1v1h-1zM536 239h1v1h-1zM556 239h1v1h-1zM575 239h1v1h-1zM595 239h1v1h-1zM615 239h1v1h-1zM635 239h1v1h-1zM655 239h1v1h-1zM675 239h1v1h-1zM695 239h1v1h-1zM714 239h1v1h-1zM734 239h1v1h-1zM754 239h1v1h-1zM774 239h1v1h-1zM794 239h1v1h-1zM814 239h1v1h-1zM833 239h1v1h-1zM853 239h1v1h-1zM873 239h1v1h-1zM893 239h1v1h-1zM913 239h1v1h-1zM933 239h1v1h-1zM953 239h1v1h-1zM972 239h1v1h-1zM992 239h1v1h-1zM1012 239h1v1h-1zM1032 239h1v1h-1zM1052 239h1v1h-1zM1072 239h1v1h-1zM1091 239h1v1h-1zM1111 239h1v1h-1zM1131 239h1v1h-1zM1151 239h1v1h-1zM1171 239h1v1h-1zM1191 239h1v1h-1zM1211 239h1v1h-1zM1230 239h1v1h-1zM1250 239h1v1h-1zM1270 239h1v1h-1zM1290 239h1v1h-1zM1310 239h1v1h-1zM1330 239h1v1h-1zM1349 239h1v1h-1zM1369 239h1v1h-1zM1389 239h1v1h-1zM1409 239h1v1h-1zM1429 239h1v1h-1zM1449 239h1v1h-1zM1468 239h1v1h-1zM1488 239h1v1h-1zM1508 239h1v1h-1zM1528 239h1v1h-1zM1548 239h1v1h-1zM1568 239h1v1h-1zM1588 239h1v1h-1zM1607 239h1v1h-1zM1627 239h1v1h-1zM1647 239h1v1h-1zM1667 239h1v1h-1zM1687 239h1v1h-1zM1707 239h1v1h-1zM1726 239h1v1h-1zM1746 239h1v1h-1zM1766 239h1v1h-1zM1786 239h1v1h-1zM1806 239h1v1h-1zM1826 239h1v1h-1zM1846 239h1v1h-1zM1865 239h1v1h-1zM40 259h1v1h-1zM59 259h1v1h-1zM79 259h1v1h-1zM99 259h1v1h-1zM119 259h1v1h-1zM139 259h1v1h-1zM159 259h1v1h-1zM179 259h1v1h-1zM198 259h1v1h-1zM218 259h1v1h-1zM238 259h1v1h-1zM258 259h1v1h-1zM278 259h1v1h-1zM298 259h1v1h-1zM317 259h1v1h-1zM337 259h1v1h-1zM357 259h1v1h-1zM377 259h1v1h-1zM397 259h1v1h-1zM417 259h1v1h-1zM437 259h1v1h-1zM456 259h1v1h-1zM476 259h1v1h-1zM496 259h1v1h-1zM516 259h1v1h-1zM536 259h1v1h-1zM556 259h1v1h-1zM575 259h1v1h-1zM595 259h1v1h-1zM615 259h1v1h-1zM635 259h1v1h-1zM655 259h1v1h-1zM675 259h1v1h-1zM695 259h1v1h-1zM714 259h1v1h-1zM734 259h1v1h-1zM754 259h1v1h-1zM774 259h1v1h-1zM794 259h1v1h-1zM814 259h1v1h-1zM833 259h1v1h-1zM853 259h1v1h-1zM873 259h1v1h-1zM893 259h1v1h-1zM913 259h1v1h-1zM933 259h1v1h-1zM953 259h1v1h-1zM972 259h1v1h-1zM992 259h1v1h-1zM1012 259h1v1h-1zM1032 259h1v1h-1zM1052 259h1v1h-1zM1072 259h1v1h-1zM1091 259h1v1h-1zM1111 259h1v1h-1zM1131 259h1v1h-1zM1151 259h1v1h-1zM1171 259h1v1h-1zM1191 259h1v1h-1zM1211 259h1v1h-1zM1230 259h1v1h-1zM1250 259h1v1h-1zM1270 259h1v1h-1zM1290 259h1v1h-1zM1310 259h1v1h-1zM1330 259h1v1h-1zM1349 259h1v1h-1zM1369 259h1v1h-1zM1389 259h1v1h-1zM1409 259h1v1h-1zM1429 259h1v1h-1zM1449 259h1v1h-1zM1468 259h1v1h-1zM1488 259h1v1h-1zM1508 259h1v1h-1zM1528 259h1v1h-1zM1548 259h1v1h-1zM1568 259h1v1h-1zM1588 259h1v1h-1zM1607 259h1v1h-1zM1627 259h1v1h-1zM1647 259h1v1h-1zM1667 259h1v1h-1zM1687 259h1v1h-1zM1707 259h1v1h-1zM1726 259h1v1h-1zM1746 259h1v1h-1zM1766 259h1v1h-1zM1786 259h1v1h-1zM1806 259h1v1h-1zM1826 259h1v1h-1zM1846 259h1v1h-1zM1865 259h1v1h-1zM40 278h1v1h-1zM59 278h1v1h-1zM79 278h1v1h-1zM99 278h1v1h-1zM119 278h1v1h-1zM139 278h1v1h-1zM159 278h1v1h-1zM179 278h1v1h-1zM198 278h1v1h-1zM218 278h1v1h-1zM238 278h1v1h-1zM258 278h1v1h-1zM278 278h1v1h-1zM298 278h1v1h-1zM317 278h1v1h-1zM337 278h1v1h-1zM357 278h1v1h-1zM377 278h1v1h-1zM397 278h1v1h-1zM417 278h1v1h-1zM437 278h1v1h-1zM456 278h1v1h-1zM476 278h1v1h-1zM496 278h1v1h-1zM516 278h1v1h-1zM536 278h1v1h-1zM556 278h1v1h-1zM575 278h1v1h-1zM595 278h1v1h-1zM615 278h1v1h-1zM635 278h1v1h-1zM655 278h1v1h-1zM675 278h1v1h-1zM695 278h1v1h-1zM714 278h1v1h-1zM734 278h1v1h-1zM754 278h1v1h-1zM774 278h1v1h-1zM794 278h1v1h-1zM814 278h1v1h-1zM833 278h1v1h-1zM853 278h1v1h-1zM873 278h1v1h-1zM893 278h1v1h-1zM913 278h1v1h-1zM933 278h1v1h-1zM953 278h1v1h-1zM972 278h1v1h-1zM992 278h1v1h-1zM1012 278h1v1h-1zM1032 278h1v1h-1zM1052 278h1v1h-1zM1072 278h1v1h-1zM1091 278h1v1h-1zM1111 278h1v1h-1zM1131 278h1v1h-1zM1151 278h1v1h-1zM1171 278h1v1h-1zM1191 278h1v1h-1zM1211 278h1v1h-1zM1230 278h1v1h-1zM1250 278h1v1h-1zM1270 278h1v1h-1zM1290 278h1v1h-1zM1310 278h1v1h-1zM1330 278h1v1h-1zM1349 278h1v1h-1zM1369 278h1v1h-1zM1389 278h1v1h-1zM1409 278h1v1h-1zM1429 278h1v1h-1zM1449 278h1v1h-1zM1468 278h1v1h-1zM1488 278h1v1h-1zM1508 278h1v1h-1zM1528 278h1v1h-1zM1548 278h1v1h-1zM1568 278h1v1h-1zM1588 278h1v1h-1zM1607 278h1v1h-1zM1627 278h1v1h-1zM1647 278h1v1h-1zM1667 278h1v1h-1zM1687 278h1v1h-1zM1707 278h1v1h-1zM1726 278h1v1h-1zM1746 278h1v1h-1zM1766 278h1v1h-1zM1786 278h1v1h-1zM1806 278h1v1h-1zM1826 278h1v1h-1zM1846 278h1v1h-1zM1865 278h1v1h-1zM40 298h1v1h-1zM59 298h1v1h-1zM79 298h1v1h-1zM99 298h1v1h-1zM119 298h1v1h-1zM139 298h1v1h-1zM159 298h1v1h-1zM179 298h1v1h-1zM198 298h1v1h-1zM218 298h1v1h-1zM238 298h1v1h-1zM258 298h1v1h-1zM278 298h1v1h-1zM298 298h1v1h-1zM317 298h1v1h-1zM337 298h1v1h-1zM357 298h1v1h-1zM377 298h1v1h-1zM397 298h1v1h-1zM417 298h1v1h-1zM437 298h1v1h-1zM456 298h1v1h-1zM476 298h1v1h-1zM496 298h1v1h-1zM516 298h1v1h-1zM536 298h1v1h-1zM556 298h1v1h-1zM575 298h1v1h-1zM595 298h1v1h-1zM615 298h1v1h-1zM635 298h1v1h-1zM655 298h1v1h-1zM675 298h1v1h-1zM695 298h1v1h-1zM714 298h1v1h-1zM734 298h1v1h-1zM754 298h1v1h-1zM774 298h1v1h-1zM794 298h1v1h-1zM814 298h1v1h-1zM833 298h1v1h-1zM853 298h1v1h-1zM873 298h1v1h-1zM893 298h1v1h-1zM913 298h1v1h-1zM933 298h1v1h-1zM953 298h1v1h-1zM972 298h1v1h-1zM992 298h1v1h-1zM1012 298h1v1h-1zM1032 298h1v1h-1zM1052 298h1v1h-1zM1072 298h1v1h-1zM1091 298h1v1h-1zM1111 298h1v1h-1zM1131 298h1v1h-1zM1151 298h1v1h-1zM1171 298h1v1h-1zM1191 298h1v1h-1zM1211 298h1v1h-1zM1230 298h1v1h-1zM1250 298h1v1h-1zM1270 298h1v1h-1zM1290 298h1v1h-1zM1310 298h1v1h-1zM1330 298h1v1h-1zM1349 298h1v1h-1zM1369 298h1v1h-1zM1389 298h1v1h-1zM1409 298h1v1h-1zM1429 298h1v1h-1zM1449 298h1v1h-1zM1468 298h1v1h-1zM1488 298h1v1h-1zM1508 298h1v1h-1zM1528 298h1v1h-1zM1548 298h1v1h-1zM1568 298h1v1h-1zM1588 298h1v1h-1zM1607 298h1v1h-1zM1627 298h1v1h-1zM1647 298h1v1h-1zM1667 298h1v1h-1zM1687 298h1v1h-1zM1707 298h1v1h-1zM1726 298h1v1h-1zM1746 298h1v1h-1zM1766 298h1v1h-1zM1786 298h1v1h-1zM1806 298h1v1h-1zM1826 298h1v1h-1zM1846 298h1v1h-1zM1865 298h1v1h-1zM40 318h1v1h-1zM59 318h1v1h-1zM79 318h1v1h-1zM99 318h1v1h-1zM119 318h1v1h-1zM139 318h1v1h-1zM159 318h1v1h-1zM179 318h1v1h-1zM198 318h1v1h-1zM218 318h1v1h-1zM238 318h1v1h-1zM258 318h1v1h-1zM278 318h1v1h-1zM298 318h1v1h-1zM317 318h1v1h-1zM337 318h1v1h-1zM357 318h1v1h-1zM377 318h1v1h-1zM397 318h1v1h-1zM417 318h1v1h-1zM437 318h1v1h-1zM456 318h1v1h-1zM476 318h1v1h-1zM496 318h1v1h-1zM516 318h1v1h-1zM536 318h1v1h-1zM556 318h1v1h-1zM575 318h1v1h-1zM595 318h1v1h-1zM615 318h1v1h-1zM635 318h1v1h-1zM655 318h1v1h-1zM675 318h1v1h-1zM695 318h1v1h-1zM714 318h1v1h-1zM734 318h1v1h-1zM754 318h1v1h-1zM774 318h1v1h-1zM794 318h1v1h-1zM814 318h1v1h-1zM833 318h1v1h-1zM853 318h1v1h-1zM873 318h1v1h-1zM893 318h1v1h-1zM913 318h1v1h-1zM933 318h1v1h-1zM953 318h1v1h-1zM972 318h1v1h-1zM992 318h1v1h-1zM1012 318h1v1h-1zM1032 318h1v1h-1zM1052 318h1v1h-1zM1072 318h1v1h-1zM1091 318h1v1h-1zM1111 318h1v1h-1zM1131 318h1v1h-1zM1151 318h1v1h-1zM1171 318h1v1h-1zM1191 318h1v1h-1zM1211 318h1v1h-1zM1230 318h1v1h-1zM1250 318h1v1h-1zM1270 318h1v1h-1zM1290 318h1v1h-1zM1310 318h1v1h-1zM1330 318h1v1h-1zM1349 318h1v1h-1zM1369 318h1v1h-1zM1389 318h1v1h-1zM1409 318h1v1h-1zM1429 318h1v1h-1zM1449 318h1v1h-1zM1468 318h1v1h-1zM1488 318h1v1h-1zM1508 318h1v1h-1zM1528 318h1v1h-1zM1548 318h1v1h-1zM1568 318h1v1h-1zM1588 318h1v1h-1zM1607 318h1v1h-1zM1627 318h1v1h-1zM1647 318h1v1h-1zM1667 318h1v1h-1zM1687 318h1v1h-1zM1707 318h1v1h-1zM1726 318h1v1h-1zM1746 318h1v1h-1zM1766 318h1v1h-1zM1786 318h1v1h-1zM1806 318h1v1h-1zM1826 318h1v1h-1zM1846 318h1v1h-1zM1865 318h1v1h-1zM40 338h1v1h-1zM59 338h1v1h-1zM79 338h1v1h-1zM99 338h1v1h-1zM119 338h1v1h-1zM139 338h1v1h-1zM159 338h1v1h-1zM179 338h1v1h-1zM198 338h1v1h-1zM218 338h1v1h-1zM238 338h1v1h-1zM258 338h1v1h-1zM278 338h1v1h-1zM298 338h1v1h-1zM317 338h1v1h-1zM337 338h1v1h-1zM357 338h1v1h-1zM377 338h1v1h-1zM397 338h1v1h-1zM417 338h1v1h-1zM437 338h1v1h-1zM456 338h1v1h-1zM476 338h1v1h-1zM496 338h1v1h-1zM516 338h1v1h-1zM536 338h1v1h-1zM556 338h1v1h-1zM575 338h1v1h-1zM595 338h1v1h-1zM615 338h1v1h-1zM635 338h1v1h-1zM655 338h1v1h-1zM675 338h1v1h-1zM695 338h1v1h-1zM714 338h1v1h-1zM734 338h1v1h-1zM754 338h1v1h-1zM774 338h1v1h-1zM794 338h1v1h-1zM814 338h1v1h-1zM833 338h1v1h-1zM853 338h1v1h-1zM873 338h1v1h-1zM893 338h1v1h-1zM913 338h1v1h-1zM933 338h1v1h-1zM953 338h1v1h-1zM972 338h1v1h-1zM992 338h1v1h-1zM1012 338h1v1h-1zM1032 338h1v1h-1zM1052 338h1v1h-1zM1072 338h1v1h-1zM1091 338h1v1h-1zM1111 338h1v1h-1zM1131 338h1v1h-1zM1151 338h1v1h-1zM1171 338h1v1h-1zM1191 338h1v1h-1zM1211 338h1v1h-1zM1230 338h1v1h-1zM1250 338h1v1h-1zM1270 338h1v1h-1zM1290 338h1v1h-1zM1310 338h1v1h-1zM1330 338h1v1h-1zM1349 338h1v1h-1zM1369 338h1v1h-1zM1389 338h1v1h-1zM1409 338h1v1h-1zM1429 338h1v1h-1zM1449 338h1v1h-1zM1468 338h1v1h-1zM1488 338h1v1h-1zM1508 338h1v1h-1zM1528 338h1v1h-1zM1548 338h1v1h-1zM1568 338h1v1h-1zM1588 338h1v1h-1zM1607 338h1v1h-1zM1627 338h1v1h-1zM1647 338h1v1h-1zM1667 338h1v1h-1zM1687 338h1v1h-1zM1707 338h1v1h-1zM1726 338h1v1h-1zM1746 338h1v1h-1zM1766 338h1v1h-1zM1786 338h1v1h-1zM1806 338h1v1h-1zM1826 338h1v1h-1zM1846 338h1v1h-1zM1865 338h1v1h-1zM40 358h1v1h-1zM59 358h1v1h-1zM79 358h1v1h-1zM99 358h1v1h-1zM119 358h1v1h-1zM139 358h1v1h-1zM159 358h1v1h-1zM179 358h1v1h-1zM198 358h1v1h-1zM218 358h1v1h-1zM238 358h1v1h-1zM258 358h1v1h-1zM278 358h1v1h-1zM298 358h1v1h-1zM317 358h1v1h-1zM337 358h1v1h-1zM357 358h1v1h-1zM377 358h1v1h-1zM397 358h1v1h-1zM417 358h1v1h-1zM437 358h1v1h-1zM456 358h1v1h-1zM476 358h1v1h-1zM496 358h1v1h-1zM516 358h1v1h-1zM536 358h1v1h-1zM556 358h1v1h-1zM575 358h1v1h-1zM595 358h1v1h-1zM615 358h1v1h-1zM635 358h1v1h-1zM655 358h1v1h-1zM675 358h1v1h-1zM695 358h1v1h-1zM714 358h1v1h-1zM734 358h1v1h-1zM754 358h1v1h-1zM774 358h1v1h-1zM794 358h1v1h-1zM814 358h1v1h-1zM833 358h1v1h-1zM853 358h1v1h-1zM873 358h1v1h-1zM893 358h1v1h-1zM913 358h1v1h-1zM933 358h1v1h-1zM953 358h1v1h-1zM972 358h1v1h-1zM992 358h1v1h-1zM1012 358h1v1h-1zM1032 358h1v1h-1zM1052 358h1v1h-1zM1072 358h1v1h-1zM1091 358h1v1h-1zM1111 358h1v1h-1zM1131 358h1v1h-1zM1151 358h1v1h-1zM1171 358h1v1h-1zM1191 358h1v1h-1zM1211 358h1v1h-1zM1230 358h1v1h-1zM1250 358h1v1h-1zM1270 358h1v1h-1zM1290 358h1v1h-1zM1310 358h1v1h-1zM1330 358h1v1h-1zM1349 358h1v1h-1zM1369 358h1v1h-1zM1389 358h1v1h-1zM1409 358h1v1h-1zM1429 358h1v1h-1zM1449 358h1v1h-1zM1468 358h1v1h-1zM1488 358h1v1h-1zM1508 358h1v1h-1zM1528 358h1v1h-1zM1548 358h1v1h-1zM1568 358h1v1h-1zM1588 358h1v1h-1zM1607 358h1v1h-1zM1627 358h1v1h-1zM1647 358h1v1h-1zM1667 358h1v1h-1zM1687 358h1v1h-1zM1707 358h1v1h-1zM1726 358h1v1h-1zM1746 358h1v1h-1zM1766 358h1v1h-1zM1786 358h1v1h-1zM1806 358h1v1h-1zM1826 358h1v1h-1zM1846 358h1v1h-1zM1865 358h1v1h-1zM40 378h1v1h-1zM59 378h1v1h-1zM79 378h1v1h-1zM99 378h1v1h-1zM119 378h1v1h-1zM139 378h1v1h-1zM159 378h1v1h-1zM179 378h1v1h-1zM198 378h1v1h-1zM218 378h1v1h-1zM238 378h1v1h-1zM258 378h1v1h-1zM278 378h1v1h-1zM298 378h1v1h-1zM317 378h1v1h-1zM337 378h1v1h-1zM357 378h1v1h-1zM377 378h1v1h-1zM397 378h1v1h-1zM417 378h1v1h-1zM437 378h1v1h-1zM456 378h1v1h-1zM476 378h1v1h-1zM496 378h1v1h-1zM516 378h1v1h-1zM536 378h1v1h-1zM556 378h1v1h-1zM575 378h1v1h-1zM595 378h1v1h-1zM615 378h1v1h-1zM635 378h1v1h-1zM655 378h1v1h-1zM675 378h1v1h-1zM695 378h1v1h-1zM714 378h1v1h-1zM734 378h1v1h-1zM754 378h1v1h-1zM774 378h1v1h-1zM794 378h1v1h-1zM814 378h1v1h-1zM833 378h1v1h-1zM853 378h1v1h-1zM873 378h1v1h-1zM893 378h1v1h-1zM913 378h1v1h-1zM933 378h1v1h-1zM953 378h1v1h-1zM972 378h1v1h-1zM992 378h1v1h-1zM1012 378h1v1h-1zM1032 378h1v1h-1zM1052 378h1v1h-1zM1072 378h1v1h-1zM1091 378h1v1h-1zM1111 378h1v1h-1zM1131 378h1v1h-1zM1151 378h1v1h-1zM1171 378h1v1h-1zM1191 378h1v1h-1zM1211 378h1v1h-1zM1230 378h1v1h-1zM1250 378h1v1h-1zM1270 378h1v1h-1zM1290 378h1v1h-1zM1310 378h1v1h-1zM1330 378h1v1h-1zM1349 378h1v1h-1zM1369 378h1v1h-1zM1389 378h1v1h-1zM1409 378h1v1h-1zM1429 378h1v1h-1zM1449 378h1v1h-1zM1468 378h1v1h-1zM1488 378h1v1h-1zM1508 378h1v1h-1zM1528 378h1v1h-1zM1548 378h1v1h-1zM1568 378h1v1h-1zM1588 378h1v1h-1zM1607 378h1v1h-1zM1627 378h1v1h-1zM1647 378h1v1h-1zM1667 378h1v1h-1zM1687 378h1v1h-1zM1707 378h1v1h-1zM1726 378h1v1h-1zM1746 378h1v1h-1zM1766 378h1v1h-1zM1786 378h1v1h-1zM1806 378h1v1h-1zM1826 378h1v1h-1zM1846 378h1v1h-1zM1865 378h1v1h-1zM40 398h1v1h-1zM59 398h1v1h-1zM79 398h1v1h-1zM99 398h1v1h-1zM119 398h1v1h-1zM139 398h1v1h-1zM159 398h1v1h-1zM179 398h1v1h-1zM198 398h1v1h-1zM218 398h1v1h-1zM238 398h1v1h-1zM258 398h1v1h-1zM278 398h1v1h-1zM298 398h1v1h-1zM317 398h1v1h-1zM337 398h1v1h-1zM357 398h1v1h-1zM377 398h1v1h-1zM397 398h1v1h-1zM417 398h1v1h-1zM437 398h1v1h-1zM456 398h1v1h-1zM476 398h1v1h-1zM496 398h1v1h-1zM516 398h1v1h-1zM536 398h1v1h-1zM556 398h1v1h-1zM575 398h1v1h-1zM595 398h1v1h-1zM615 398h1v1h-1zM635 398h1v1h-1zM655 398h1v1h-1zM675 398h1v1h-1zM695 398h1v1h-1zM714 398h1v1h-1zM734 398h1v1h-1zM754 398h1v1h-1zM774 398h1v1h-1zM794 398h1v1h-1zM814 398h1v1h-1zM833 398h1v1h-1zM853 398h1v1h-1zM873 398h1v1h-1zM893 398h1v1h-1zM913 398h1v1h-1zM933 398h1v1h-1zM953 398h1v1h-1zM972 398h1v1h-1zM992 398h1v1h-1zM1012 398h1v1h-1zM1032 398h1v1h-1zM1052 398h1v1h-1zM1072 398h1v1h-1zM1091 398h1v1h-1zM1111 398h1v1h-1zM1131 398h1v1h-1zM1151 398h1v1h-1zM1171 398h1v1h-1zM1191 398h1v1h-1zM1211 398h1v1h-1zM1230 398h1v1h-1zM1250 398h1v1h-1zM1270 398h1v1h-1zM1290 398h1v1h-1zM1310 398h1v1h-1zM1330 398h1v1h-1zM1349 398h1v1h-1zM1369 398h1v1h-1zM1389 398h1v1h-1zM1409 398h1v1h-1zM1429 398h1v1h-1zM1449 398h1v1h-1zM1468 398h1v1h-1zM1488 398h1v1h-1zM1508 398h1v1h-1zM1528 398h1v1h-1zM1548 398h1v1h-1zM1568 398h1v1h-1zM1588 398h1v1h-1zM1607 398h1v1h-1zM1627 398h1v1h-1zM1647 398h1v1h-1zM1667 398h1v1h-1zM1687 398h1v1h-1zM1707 398h1v1h-1zM1726 398h1v1h-1zM1746 398h1v1h-1zM1766 398h1v1h-1zM1786 398h1v1h-1zM1806 398h1v1h-1zM1826 398h1v1h-1zM1846 398h1v1h-1zM1865 398h1v1h-1zM40 417h1v1h-1zM59 417h1v1h-1zM79 417h1v1h-1zM99 417h1v1h-1zM119 417h1v1h-1zM139 417h1v1h-1zM159 417h1v1h-1zM179 417h1v1h-1zM198 417h1v1h-1zM218 417h1v1h-1zM238 417h1v1h-1zM258 417h1v1h-1zM278 417h1v1h-1zM298 417h1v1h-1zM317 417h1v1h-1zM337 417h1v1h-1zM357 417h1v1h-1zM377 417h1v1h-1zM397 417h1v1h-1zM417 417h1v1h-1zM437 417h1v1h-1zM456 417h1v1h-1zM476 417h1v1h-1zM496 417h1v1h-1zM516 417h1v1h-1zM536 417h1v1h-1zM556 417h1v1h-1zM575 417h1v1h-1zM595 417h1v1h-1zM615 417h1v1h-1zM635 417h1v1h-1zM655 417h1v1h-1zM675 417h1v1h-1zM695 417h1v1h-1zM714 417h1v1h-1zM734 417h1v1h-1zM754 417h1v1h-1zM774 417h1v1h-1zM794 417h1v1h-1zM814 417h1v1h-1zM833 417h1v1h-1zM853 417h1v1h-1zM873 417h1v1h-1zM893 417h1v1h-1zM913 417h1v1h-1zM933 417h1v1h-1zM953 417h1v1h-1zM972 417h1v1h-1zM992 417h1v1h-1zM1012 417h1v1h-1zM1032 417h1v1h-1zM1052 417h1v1h-1zM1072 417h1v1h-1zM1091 417h1v1h-1zM1111 417h1v1h-1zM1131 417h1v1h-1zM1151 417h1v1h-1zM1171 417h1v1h-1zM1191 417h1v1h-1zM1211 417h1v1h-1zM1230 417h1v1h-1zM1250 417h1v1h-1zM1270 417h1v1h-1zM1290 417h1v1h-1zM1310 417h1v1h-1zM1330 417h1v1h-1zM1349 417h1v1h-1zM1369 417h1v1h-1zM1389 417h1v1h-1zM1409 417h1v1h-1zM1429 417h1v1h-1zM1449 417h1v1h-1zM1468 417h1v1h-1zM1488 417h1v1h-1zM1508 417h1v1h-1zM1528 417h1v1h-1zM1548 417h1v1h-1zM1568 417h1v1h-1zM1588 417h1v1h-1zM1607 417h1v1h-1zM1627 417h1v1h-1zM1647 417h1v1h-1zM1667 417h1v1h-1zM1687 417h1v1h-1zM1707 417h1v1h-1zM1726 417h1v1h-1zM1746 417h1v1h-1zM1766 417h1v1h-1zM1786 417h1v1h-1zM1806 417h1v1h-1zM1826 417h1v1h-1zM1846 417h1v1h-1zM1865 417h1v1h-1zM40 437h1v1h-1zM59 437h1v1h-1zM79 437h1v1h-1zM99 437h1v1h-1zM119 437h1v1h-1zM139 437h1v1h-1zM159 437h1v1h-1zM179 437h1v1h-1zM198 437h1v1h-1zM218 437h1v1h-1zM238 437h1v1h-1zM258 437h1v1h-1zM278 437h1v1h-1zM298 437h1v1h-1zM317 437h1v1h-1zM337 437h1v1h-1zM357 437h1v1h-1zM377 437h1v1h-1zM397 437h1v1h-1zM417 437h1v1h-1zM437 437h1v1h-1zM456 437h1v1h-1zM476 437h1v1h-1zM496 437h1v1h-1zM516 437h1v1h-1zM536 437h1v1h-1zM556 437h1v1h-1zM575 437h1v1h-1zM595 437h1v1h-1zM615 437h1v1h-1zM635 437h1v1h-1zM655 437h1v1h-1zM675 437h1v1h-1zM695 437h1v1h-1zM714 437h1v1h-1zM734 437h1v1h-1zM754 437h1v1h-1zM774 437h1v1h-1zM794 437h1v1h-1zM814 437h1v1h-1zM833 437h1v1h-1zM853 437h1v1h-1zM873 437h1v1h-1zM893 437h1v1h-1zM913 437h1v1h-1zM933 437h1v1h-1zM953 437h1v1h-1zM972 437h1v1h-1zM992 437h1v1h-1zM1012 437h1v1h-1zM1032 437h1v1h-1zM1052 437h1v1h-1zM1072 437h1v1h-1zM1091 437h1v1h-1zM1111 437h1v1h-1zM1131 437h1v1h-1zM1151 437h1v1h-1zM1171 437h1v1h-1zM1191 437h1v1h-1zM1211 437h1v1h-1zM1230 437h1v1h-1zM1250 437h1v1h-1zM1270 437h1v1h-1zM1290 437h1v1h-1zM1310 437h1v1h-1zM1330 437h1v1h-1zM1349 437h1v1h-1zM1369 437h1v1h-1zM1389 437h1v1h-1zM1409 437h1v1h-1zM1429 437h1v1h-1zM1449 437h1v1h-1zM1468 437h1v1h-1zM1488 437h1v1h-1zM1508 437h1v1h-1zM1528 437h1v1h-1zM1548 437h1v1h-1zM1568 437h1v1h-1zM1588 437h1v1h-1zM1607 437h1v1h-1zM1627 437h1v1h-1zM1647 437h1v1h-1zM1667 437h1v1h-1zM1687 437h1v1h-1zM1707 437h1v1h-1zM1726 437h1v1h-1zM1746 437h1v1h-1zM1766 437h1v1h-1zM1786 437h1v1h-1zM1806 437h1v1h-1zM1826 437h1v1h-1zM1846 437h1v1h-1zM1865 437h1v1h-1zM40 457h1v1h-1zM59 457h1v1h-1zM79 457h1v1h-1zM99 457h1v1h-1zM119 457h1v1h-1zM139 457h1v1h-1zM159 457h1v1h-1zM179 457h1v1h-1zM198 457h1v1h-1zM218 457h1v1h-1zM238 457h1v1h-1zM258 457h1v1h-1zM278 457h1v1h-1zM298 457h1v1h-1zM317 457h1v1h-1zM337 457h1v1h-1zM357 457h1v1h-1zM377 457h1v1h-1zM397 457h1v1h-1zM417 457h1v1h-1zM437 457h1v1h-1zM456 457h1v1h-1zM476 457h1v1h-1zM496 457h1v1h-1zM516 457h1v1h-1zM536 457h1v1h-1zM556 457h1v1h-1zM575 457h1v1h-1zM595 457h1v1h-1zM615 457h1v1h-1zM635 457h1v1h-1zM655 457h1v1h-1zM675 457h1v1h-1zM695 457h1v1h-1zM714 457h1v1h-1zM734 457h1v1h-1zM754 457h1v1h-1zM774 457h1v1h-1zM794 457h1v1h-1zM814 457h1v1h-1zM833 457h1v1h-1zM853 457h1v1h-1zM873 457h1v1h-1zM893 457h1v1h-1zM913 457h1v1h-1zM933 457h1v1h-1zM953 457h1v1h-1zM972 457h1v1h-1zM992 457h1v1h-1zM1012 457h1v1h-1zM1032 457h1v1h-1zM1052 457h1v1h-1zM1072 457h1v1h-1zM1091 457h1v1h-1zM1111 457h1v1h-1zM1131 457h1v1h-1zM1151 457h1v1h-1zM1171 457h1v1h-1zM1191 457h1v1h-1zM1211 457h1v1h-1zM1230 457h1v1h-1zM1250 457h1v1h-1zM1270 457h1v1h-1zM1290 457h1v1h-1zM1310 457h1v1h-1zM1330 457h1v1h-1zM1349 457h1v1h-1zM1369 457h1v1h-1zM1389 457h1v1h-1zM1409 457h1v1h-1zM1429 457h1v1h-1zM1449 457h1v1h-1zM1468 457h1v1h-1zM1488 457h1v1h-1zM1508 457h1v1h-1zM1528 457h1v1h-1zM1548 457h1v1h-1zM1568 457h1v1h-1zM1588 457h1v1h-1zM1607 457h1v1h-1zM1627 457h1v1h-1zM1647 457h1v1h-1zM1667 457h1v1h-1zM1687 457h1v1h-1zM1707 457h1v1h-1zM1726 457h1v1h-1zM1746 457h1v1h-1zM1766 457h1v1h-1zM1786 457h1v1h-1zM1806 457h1v1h-1zM1826 457h1v1h-1zM1846 457h1v1h-1zM1865 457h1v1h-1zM40 477h1v1h-1zM59 477h1v1h-1zM79 477h1v1h-1zM99 477h1v1h-1zM119 477h1v1h-1zM139 477h1v1h-1zM159 477h1v1h-1zM179 477h1v1h-1zM198 477h1v1h-1zM218 477h1v1h-1zM238 477h1v1h-1zM258 477h1v1h-1zM278 477h1v1h-1zM298 477h1v1h-1zM317 477h1v1h-1zM337 477h1v1h-1zM357 477h1v1h-1zM377 477h1v1h-1zM397 477h1v1h-1zM417 477h1v1h-1zM437 477h1v1h-1zM456 477h1v1h-1zM476 477h1v1h-1zM496 477h1v1h-1zM516 477h1v1h-1zM536 477h1v1h-1zM556 477h1v1h-1zM575 477h1v1h-1zM595 477h1v1h-1zM615 477h1v1h-1zM635 477h1v1h-1zM655 477h1v1h-1zM675 477h1v1h-1zM695 477h1v1h-1zM714 477h1v1h-1zM734 477h1v1h-1zM754 477h1v1h-1zM774 477h1v1h-1zM794 477h1v1h-1zM814 477h1v1h-1zM833 477h1v1h-1zM853 477h1v1h-1zM873 477h1v1h-1zM893 477h1v1h-1zM913 477h1v1h-1zM933 477h1v1h-1zM953 477h1v1h-1zM972 477h1v1h-1zM992 477h1v1h-1zM1012 477h1v1h-1zM1032 477h1v1h-1zM1052 477h1v1h-1zM1072 477h1v1h-1zM1091 477h1v1h-1zM1111 477h1v1h-1zM1131 477h1v1h-1zM1151 477h1v1h-1zM1171 477h1v1h-1zM1191 477h1v1h-1zM1211 477h1v1h-1zM1230 477h1v1h-1zM1250 477h1v1h-1zM1270 477h1v1h-1zM1290 477h1v1h-1zM1310 477h1v1h-1zM1330 477h1v1h-1zM1349 477h1v1h-1zM1369 477h1v1h-1zM1389 477h1v1h-1zM1409 477h1v1h-1zM1429 477h1v1h-1zM1449 477h1v1h-1zM1468 477h1v1h-1zM1488 477h1v1h-1zM1508 477h1v1h-1zM1528 477h1v1h-1zM1548 477h1v1h-1zM1568 477h1v1h-1zM1588 477h1v1h-1zM1607 477h1v1h-1zM1627 477h1v1h-1zM1647 477h1v1h-1zM1667 477h1v1h-1zM1687 477h1v1h-1zM1707 477h1v1h-1zM1726 477h1v1h-1zM1746 477h1v1h-1zM1766 477h1v1h-1zM1786 477h1v1h-1zM1806 477h1v1h-1zM1826 477h1v1h-1zM1846 477h1v1h-1zM1865 477h1v1h-1zM40 497h1v1h-1zM59 497h1v1h-1zM79 497h1v1h-1zM99 497h1v1h-1zM119 497h1v1h-1zM139 497h1v1h-1zM159 497h1v1h-1zM179 497h1v1h-1zM198 497h1v1h-1zM218 497h1v1h-1zM238 497h1v1h-1zM258 497h1v1h-1zM278 497h1v1h-1zM298 497h1v1h-1zM317 497h1v1h-1zM337 497h1v1h-1zM357 497h1v1h-1zM377 497h1v1h-1zM397 497h1v1h-1zM417 497h1v1h-1zM437 497h1v1h-1zM456 497h1v1h-1zM476 497h1v1h-1zM496 497h1v1h-1zM516 497h1v1h-1zM536 497h1v1h-1zM556 497h1v1h-1zM575 497h1v1h-1zM595 497h1v1h-1zM615 497h1v1h-1zM635 497h1v1h-1zM655 497h1v1h-1zM675 497h1v1h-1zM695 497h1v1h-1zM714 497h1v1h-1zM734 497h1v1h-1zM754 497h1v1h-1zM774 497h1v1h-1zM794 497h1v1h-1zM814 497h1v1h-1zM833 497h1v1h-1zM853 497h1v1h-1zM873 497h1v1h-1zM893 497h1v1h-1zM913 497h1v1h-1zM933 497h1v1h-1zM953 497h1v1h-1zM972 497h1v1h-1zM992 497h1v1h-1zM1012 497h1v1h-1zM1032 497h1v1h-1zM1052 497h1v1h-1zM1072 497h1v1h-1zM1091 497h1v1h-1zM1111 497h1v1h-1zM1131 497h1v1h-1zM1151 497h1v1h-1zM1171 497h1v1h-1zM1191 497h1v1h-1zM1211 497h1v1h-1zM1230 497h1v1h-1zM1250 497h1v1h-1zM1270 497h1v1h-1zM1290 497h1v1h-1zM1310 497h1v1h-1zM1330 497h1v1h-1zM1349 497h1v1h-1zM1369 497h1v1h-1zM1389 497h1v1h-1zM1409 497h1v1h-1zM1429 497h1v1h-1zM1449 497h1v1h-1zM1468 497h1v1h-1zM1488 497h1v1h-1zM1508 497h1v1h-1zM1528 497h1v1h-1zM1548 497h1v1h-1zM1568 497h1v1h-1zM1588 497h1v1h-1zM1607 497h1v1h-1zM1627 497h1v1h-1zM1647 497h1v1h-1zM1667 497h1v1h-1zM1687 497h1v1h-1zM1707 497h1v1h-1zM1726 497h1v1h-1zM1746 497h1v1h-1zM1766 497h1v1h-1zM1786 497h1v1h-1zM1806 497h1v1h-1zM1826 497h1v1h-1zM1846 497h1v1h-1zM1865 497h1v1h-1zM40 517h1v1h-1zM59 517h1v1h-1zM79 517h1v1h-1zM99 517h1v1h-1zM119 517h1v1h-1zM139 517h1v1h-1zM159 517h1v1h-1zM179 517h1v1h-1zM198 517h1v1h-1zM218 517h1v1h-1zM238 517h1v1h-1zM258 517h1v1h-1zM278 517h1v1h-1zM298 517h1v1h-1zM317 517h1v1h-1zM337 517h1v1h-1zM357 517h1v1h-1zM377 517h1v1h-1zM397 517h1v1h-1zM417 517h1v1h-1zM437 517h1v1h-1zM456 517h1v1h-1zM476 517h1v1h-1zM496 517h1v1h-1zM516 517h1v1h-1zM536 517h1v1h-1zM556 517h1v1h-1zM575 517h1v1h-1zM595 517h1v1h-1zM615 517h1v1h-1zM635 517h1v1h-1zM655 517h1v1h-1zM675 517h1v1h-1zM695 517h1v1h-1zM714 517h1v1h-1zM734 517h1v1h-1zM754 517h1v1h-1zM774 517h1v1h-1zM794 517h1v1h-1zM814 517h1v1h-1zM833 517h1v1h-1zM853 517h1v1h-1zM873 517h1v1h-1zM893 517h1v1h-1zM913 517h1v1h-1zM933 517h1v1h-1zM953 517h1v1h-1zM972 517h1v1h-1zM992 517h1v1h-1zM1012 517h1v1h-1zM1032 517h1v1h-1zM1052 517h1v1h-1zM1072 517h1v1h-1zM1091 517h1v1h-1zM1111 517h1v1h-1zM1131 517h1v1h-1zM1151 517h1v1h-1zM1171 517h1v1h-1zM1191 517h1v1h-1zM1211 517h1v1h-1zM1230 517h1v1h-1zM1250 517h1v1h-1zM1270 517h1v1h-1zM1290 517h1v1h-1zM1310 517h1v1h-1zM1330 517h1v1h-1zM1349 517h1v1h-1zM1369 517h1v1h-1zM1389 517h1v1h-1zM1409 517h1v1h-1zM1429 517h1v1h-1zM1449 517h1v1h-1zM1468 517h1v1h-1zM1488 517h1v1h-1zM1508 517h1v1h-1zM1528 517h1v1h-1zM1548 517h1v1h-1zM1568 517h1v1h-1zM1588 517h1v1h-1zM1607 517h1v1h-1zM1627 517h1v1h-1zM1647 517h1v1h-1zM1667 517h1v1h-1zM1687 517h1v1h-1zM1707 517h1v1h-1zM1726 517h1v1h-1zM1746 517h1v1h-1zM1766 517h1v1h-1zM1786 517h1v1h-1zM1806 517h1v1h-1zM1826 517h1v1h-1zM1846 517h1v1h-1zM1865 517h1v1h-1zM40 536h1v1h-1zM59 536h1v1h-1zM79 536h1v1h-1zM99 536h1v1h-1zM119 536h1v1h-1zM139 536h1v1h-1zM159 536h1v1h-1zM179 536h1v1h-1zM198 536h1v1h-1zM218 536h1v1h-1zM238 536h1v1h-1zM258 536h1v1h-1zM278 536h1v1h-1zM298 536h1v1h-1zM317 536h1v1h-1zM337 536h1v1h-1zM357 536h1v1h-1zM377 536h1v1h-1zM397 536h1v1h-1zM417 536h1v1h-1zM437 536h1v1h-1zM456 536h1v1h-1zM476 536h1v1h-1zM496 536h1v1h-1zM516 536h1v1h-1zM536 536h1v1h-1zM556 536h1v1h-1zM575 536h1v1h-1zM595 536h1v1h-1zM615 536h1v1h-1zM635 536h1v1h-1zM655 536h1v1h-1zM675 536h1v1h-1zM695 536h1v1h-1zM714 536h1v1h-1zM734 536h1v1h-1zM754 536h1v1h-1zM774 536h1v1h-1zM794 536h1v1h-1zM814 536h1v1h-1zM833 536h1v1h-1zM853 536h1v1h-1zM873 536h1v1h-1zM893 536h1v1h-1zM913 536h1v1h-1zM933 536h1v1h-1zM953 536h1v1h-1zM972 536h1v1h-1zM992 536h1v1h-1zM1012 536h1v1h-1zM1032 536h1v1h-1zM1052 536h1v1h-1zM1072 536h1v1h-1zM1091 536h1v1h-1zM1111 536h1v1h-1zM1131 536h1v1h-1zM1151 536h1v1h-1zM1171 536h1v1h-1zM1191 536h1v1h-1zM1211 536h1v1h-1zM1230 536h1v1h-1zM1250 536h1v1h-1zM1270 536h1v1h-1zM1290 536h1v1h-1zM1310 536h1v1h-1zM1330 536h1v1h-1zM1349 536h1v1h-1zM1369 536h1v1h-1zM1389 536h1v1h-1zM1409 536h1v1h-1zM1429 536h1v1h-1zM1449 536h1v1h-1zM1468 536h1v1h-1zM1488 536h1v1h-1zM1508 536h1v1h-1zM1528 536h1v1h-1zM1548 536h1v1h-1zM1568 536h1v1h-1zM1588 536h1v1h-1zM1607 536h1v1h-1zM1627 536h1v1h-1zM1647 536h1v1h-1zM1667 536h1v1h-1zM1687 536h1v1h-1zM1707 536h1v1h-1zM1726 536h1v1h-1zM1746 536h1v1h-1zM1766 536h1v1h-1zM1786 536h1v1h-1zM1806 536h1v1h-1zM1826 536h1v1h-1zM1846 536h1v1h-1zM1865 536h1v1h-1zM40 556h1v1h-1zM59 556h1v1h-1zM79 556h1v1h-1zM99 556h1v1h-1zM119 556h1v1h-1zM139 556h1v1h-1zM159 556h1v1h-1zM179 556h1v1h-1zM198 556h1v1h-1zM218 556h1v1h-1zM238 556h1v1h-1zM258 556h1v1h-1zM278 556h1v1h-1zM298 556h1v1h-1zM317 556h1v1h-1zM337 556h1v1h-1zM357 556h1v1h-1zM377 556h1v1h-1zM397 556h1v1h-1zM417 556h1v1h-1zM437 556h1v1h-1zM456 556h1v1h-1zM476 556h1v1h-1zM496 556h1v1h-1zM516 556h1v1h-1zM536 556h1v1h-1zM556 556h1v1h-1zM575 556h1v1h-1zM595 556h1v1h-1zM615 556h1v1h-1zM635 556h1v1h-1zM655 556h1v1h-1zM675 556h1v1h-1zM695 556h1v1h-1zM714 556h1v1h-1zM734 556h1v1h-1zM754 556h1v1h-1zM774 556h1v1h-1zM794 556h1v1h-1zM814 556h1v1h-1zM833 556h1v1h-1zM853 556h1v1h-1zM873 556h1v1h-1zM893 556h1v1h-1zM913 556h1v1h-1zM933 556h1v1h-1zM953 556h1v1h-1zM972 556h1v1h-1zM992 556h1v1h-1zM1012 556h1v1h-1zM1032 556h1v1h-1zM1052 556h1v1h-1zM1072 556h1v1h-1zM1091 556h1v1h-1zM1111 556h1v1h-1zM1131 556h1v1h-1zM1151 556h1v1h-1zM1171 556h1v1h-1zM1191 556h1v1h-1zM1211 556h1v1h-1zM1230 556h1v1h-1zM1250 556h1v1h-1zM1270 556h1v1h-1zM1290 556h1v1h-1zM1310 556h1v1h-1zM1330 556h1v1h-1zM1349 556h1v1h-1zM1369 556h1v1h-1zM1389 556h1v1h-1zM1409 556h1v1h-1zM1429 556h1v1h-1zM1449 556h1v1h-1zM1468 556h1v1h-1zM1488 556h1v1h-1zM1508 556h1v1h-1zM1528 556h1v1h-1zM1548 556h1v1h-1zM1568 556h1v1h-1zM1588 556h1v1h-1zM1607 556h1v1h-1zM1627 556h1v1h-1zM1647 556h1v1h-1zM1667 556h1v1h-1zM1687 556h1v1h-1zM1707 556h1v1h-1zM1726 556h1v1h-1zM1746 556h1v1h-1zM1766 556h1v1h-1zM1786 556h1v1h-1zM1806 556h1v1h-1zM1826 556h1v1h-1zM1846 556h1v1h-1zM1865 556h1v1h-1zM40 576h1v1h-1zM59 576h1v1h-1zM79 576h1v1h-1zM99 576h1v1h-1zM119 576h1v1h-1zM139 576h1v1h-1zM159 576h1v1h-1zM179 576h1v1h-1zM198 576h1v1h-1zM218 576h1v1h-1zM238 576h1v1h-1zM258 576h1v1h-1zM278 576h1v1h-1zM298 576h1v1h-1zM317 576h1v1h-1zM337 576h1v1h-1zM357 576h1v1h-1zM377 576h1v1h-1zM397 576h1v1h-1zM417 576h1v1h-1zM437 576h1v1h-1zM456 576h1v1h-1zM476 576h1v1h-1zM496 576h1v1h-1zM516 576h1v1h-1zM536 576h1v1h-1zM556 576h1v1h-1zM575 576h1v1h-1zM595 576h1v1h-1zM615 576h1v1h-1zM635 576h1v1h-1zM655 576h1v1h-1zM675 576h1v1h-1zM695 576h1v1h-1zM714 576h1v1h-1zM734 576h1v1h-1zM754 576h1v1h-1zM774 576h1v1h-1zM794 576h1v1h-1zM814 576h1v1h-1zM833 576h1v1h-1zM853 576h1v1h-1zM873 576h1v1h-1zM893 576h1v1h-1zM913 576h1v1h-1zM933 576h1v1h-1zM953 576h1v1h-1zM972 576h1v1h-1zM992 576h1v1h-1zM1012 576h1v1h-1zM1032 576h1v1h-1zM1052 576h1v1h-1zM1072 576h1v1h-1zM1091 576h1v1h-1zM1111 576h1v1h-1zM1131 576h1v1h-1zM1151 576h1v1h-1zM1171 576h1v1h-1zM1191 576h1v1h-1zM1211 576h1v1h-1zM1230 576h1v1h-1zM1250 576h1v1h-1zM1270 576h1v1h-1zM1290 576h1v1h-1zM1310 576h1v1h-1zM1330 576h1v1h-1zM1349 576h1v1h-1zM1369 576h1v1h-1zM1389 576h1v1h-1zM1409 576h1v1h-1zM1429 576h1v1h-1zM1449 576h1v1h-1zM1468 576h1v1h-1zM1488 576h1v1h-1zM1508 576h1v1h-1zM1528 576h1v1h-1zM1548 576h1v1h-1zM1568 576h1v1h-1zM1588 576h1v1h-1zM1607 576h1v1h-1zM1627 576h1v1h-1zM1647 576h1v1h-1zM1667 576h1v1h-1zM1687 576h1v1h-1zM1707 576h1v1h-1zM1726 576h1v1h-1zM1746 576h1v1h-1zM1766 576h1v1h-1zM1786 576h1v1h-1zM1806 576h1v1h-1zM1826 576h1v1h-1zM1846 576h1v1h-1zM1865 576h1v1h-1zM40 596h1v1h-1zM59 596h1v1h-1zM79 596h1v1h-1zM99 596h1v1h-1zM119 596h1v1h-1zM139 596h1v1h-1zM159 596h1v1h-1zM179 596h1v1h-1zM198 596h1v1h-1zM218 596h1v1h-1zM238 596h1v1h-1zM258 596h1v1h-1zM278 596h1v1h-1zM298 596h1v1h-1zM317 596h1v1h-1zM337 596h1v1h-1zM357 596h1v1h-1zM377 596h1v1h-1zM397 596h1v1h-1zM417 596h1v1h-1zM437 596h1v1h-1zM456 596h1v1h-1zM476 596h1v1h-1zM496 596h1v1h-1zM516 596h1v1h-1zM536 596h1v1h-1zM556 596h1v1h-1zM575 596h1v1h-1zM595 596h1v1h-1zM615 596h1v1h-1zM635 596h1v1h-1zM655 596h1v1h-1zM675 596h1v1h-1zM695 596h1v1h-1zM714 596h1v1h-1zM734 596h1v1h-1zM754 596h1v1h-1zM774 596h1v1h-1zM794 596h1v1h-1zM814 596h1v1h-1zM833 596h1v1h-1zM853 596h1v1h-1zM873 596h1v1h-1zM893 596h1v1h-1zM913 596h1v1h-1zM933 596h1v1h-1zM953 596h1v1h-1zM972 596h1v1h-1zM992 596h1v1h-1zM1012 596h1v1h-1zM1032 596h1v1h-1zM1052 596h1v1h-1zM1072 596h1v1h-1zM1091 596h1v1h-1zM1111 596h1v1h-1zM1131 596h1v1h-1zM1151 596h1v1h-1zM1171 596h1v1h-1zM1191 596h1v1h-1zM1211 596h1v1h-1zM1230 596h1v1h-1zM1250 596h1v1h-1zM1270 596h1v1h-1zM1290 596h1v1h-1zM1310 596h1v1h-1zM1330 596h1v1h-1zM1349 596h1v1h-1zM1369 596h1v1h-1zM1389 596h1v1h-1zM1409 596h1v1h-1zM1429 596h1v1h-1zM1449 596h1v1h-1zM1468 596h1v1h-1zM1488 596h1v1h-1zM1508 596h1v1h-1zM1528 596h1v1h-1zM1548 596h1v1h-1zM1568 596h1v1h-1zM1588 596h1v1h-1zM1607 596h1v1h-1zM1627 596h1v1h-1zM1647 596h1v1h-1zM1667 596h1v1h-1zM1687 596h1v1h-1zM1707 596h1v1h-1zM1726 596h1v1h-1zM1746 596h1v1h-1zM1766 596h1v1h-1zM1786 596h1v1h-1zM1806 596h1v1h-1zM1826 596h1v1h-1zM1846 596h1v1h-1zM1865 596h1v1h-1zM40 616h1v1h-1zM59 616h1v1h-1zM79 616h1v1h-1zM99 616h1v1h-1zM119 616h1v1h-1zM139 616h1v1h-1zM159 616h1v1h-1zM179 616h1v1h-1zM198 616h1v1h-1zM218 616h1v1h-1zM238 616h1v1h-1zM258 616h1v1h-1zM278 616h1v1h-1zM298 616h1v1h-1zM317 616h1v1h-1zM337 616h1v1h-1zM357 616h1v1h-1zM377 616h1v1h-1zM397 616h1v1h-1zM417 616h1v1h-1zM437 616h1v1h-1zM456 616h1v1h-1zM476 616h1v1h-1zM496 616h1v1h-1zM516 616h1v1h-1zM536 616h1v1h-1zM556 616h1v1h-1zM575 616h1v1h-1zM595 616h1v1h-1zM615 616h1v1h-1zM635 616h1v1h-1zM655 616h1v1h-1zM675 616h1v1h-1zM695 616h1v1h-1zM714 616h1v1h-1zM734 616h1v1h-1zM754 616h1v1h-1zM774 616h1v1h-1zM794 616h1v1h-1zM814 616h1v1h-1zM833 616h1v1h-1zM853 616h1v1h-1zM873 616h1v1h-1zM893 616h1v1h-1zM913 616h1v1h-1zM933 616h1v1h-1zM953 616h1v1h-1zM972 616h1v1h-1zM992 616h1v1h-1zM1012 616h1v1h-1zM1032 616h1v1h-1zM1052 616h1v1h-1zM1072 616h1v1h-1zM1091 616h1v1h-1zM1111 616h1v1h-1zM1131 616h1v1h-1zM1151 616h1v1h-1zM1171 616h1v1h-1zM1191 616h1v1h-1zM1211 616h1v1h-1zM1230 616h1v1h-1zM1250 616h1v1h-1zM1270 616h1v1h-1zM1290 616h1v1h-1zM1310 616h1v1h-1zM1330 616h1v1h-1zM1349 616h1v1h-1zM1369 616h1v1h-1zM1389 616h1v1h-1zM1409 616h1v1h-1zM1429 616h1v1h-1zM1449 616h1v1h-1zM1468 616h1v1h-1zM1488 616h1v1h-1zM1508 616h1v1h-1zM1528 616h1v1h-1zM1548 616h1v1h-1zM1568 616h1v1h-1zM1588 616h1v1h-1zM1607 616h1v1h-1zM1627 616h1v1h-1zM1647 616h1v1h-1zM1667 616h1v1h-1zM1687 616h1v1h-1zM1707 616h1v1h-1zM1726 616h1v1h-1zM1746 616h1v1h-1zM1766 616h1v1h-1zM1786 616h1v1h-1zM1806 616h1v1h-1zM1826 616h1v1h-1zM1846 616h1v1h-1zM1865 616h1v1h-1zM40 636h1v1h-1zM59 636h1v1h-1zM79 636h1v1h-1zM99 636h1v1h-1zM119 636h1v1h-1zM139 636h1v1h-1zM159 636h1v1h-1zM179 636h1v1h-1zM198 636h1v1h-1zM218 636h1v1h-1zM238 636h1v1h-1zM258 636h1v1h-1zM278 636h1v1h-1zM298 636h1v1h-1zM317 636h1v1h-1zM337 636h1v1h-1zM357 636h1v1h-1zM377 636h1v1h-1zM397 636h1v1h-1zM417 636h1v1h-1zM437 636h1v1h-1zM456 636h1v1h-1zM476 636h1v1h-1zM496 636h1v1h-1zM516 636h1v1h-1zM536 636h1v1h-1zM556 636h1v1h-1zM575 636h1v1h-1zM595 636h1v1h-1zM615 636h1v1h-1zM635 636h1v1h-1zM655 636h1v1h-1zM675 636h1v1h-1zM695 636h1v1h-1zM714 636h1v1h-1zM734 636h1v1h-1zM754 636h1v1h-1zM774 636h1v1h-1zM794 636h1v1h-1zM814 636h1v1h-1zM833 636h1v1h-1zM853 636h1v1h-1zM873 636h1v1h-1zM893 636h1v1h-1zM913 636h1v1h-1zM933 636h1v1h-1zM953 636h1v1h-1zM972 636h1v1h-1zM992 636h1v1h-1zM1012 636h1v1h-1zM1032 636h1v1h-1zM1052 636h1v1h-1zM1072 636h1v1h-1zM1091 636h1v1h-1zM1111 636h1v1h-1zM1131 636h1v1h-1zM1151 636h1v1h-1zM1171 636h1v1h-1zM1191 636h1v1h-1zM1211 636h1v1h-1zM1230 636h1v1h-1zM1250 636h1v1h-1zM1270 636h1v1h-1zM1290 636h1v1h-1zM1310 636h1v1h-1zM1330 636h1v1h-1zM1349 636h1v1h-1zM1369 636h1v1h-1zM1389 636h1v1h-1zM1409 636h1v1h-1zM1429 636h1v1h-1zM1449 636h1v1h-1zM1468 636h1v1h-1zM1488 636h1v1h-1zM1508 636h1v1h-1zM1528 636h1v1h-1zM1548 636h1v1h-1zM1568 636h1v1h-1zM1588 636h1v1h-1zM1607 636h1v1h-1zM1627 636h1v1h-1zM1647 636h1v1h-1zM1667 636h1v1h-1zM1687 636h1v1h-1zM1707 636h1v1h-1zM1726 636h1v1h-1zM1746 636h1v1h-1zM1766 636h1v1h-1zM1786 636h1v1h-1zM1806 636h1v1h-1zM1826 636h1v1h-1zM1846 636h1v1h-1zM1865 636h1v1h-1zM40 656h1v1h-1zM59 656h1v1h-1zM79 656h1v1h-1zM99 656h1v1h-1zM119 656h1v1h-1zM139 656h1v1h-1zM159 656h1v1h-1zM179 656h1v1h-1zM198 656h1v1h-1zM218 656h1v1h-1zM238 656h1v1h-1zM258 656h1v1h-1zM278 656h1v1h-1zM298 656h1v1h-1zM317 656h1v1h-1zM337 656h1v1h-1zM357 656h1v1h-1zM377 656h1v1h-1zM397 656h1v1h-1zM417 656h1v1h-1zM437 656h1v1h-1zM456 656h1v1h-1zM476 656h1v1h-1zM496 656h1v1h-1zM516 656h1v1h-1zM536 656h1v1h-1zM556 656h1v1h-1zM575 656h1v1h-1zM595 656h1v1h-1zM615 656h1v1h-1zM635 656h1v1h-1zM655 656h1v1h-1zM675 656h1v1h-1zM695 656h1v1h-1zM714 656h1v1h-1zM734 656h1v1h-1zM754 656h1v1h-1zM774 656h1v1h-1zM794 656h1v1h-1zM814 656h1v1h-1zM833 656h1v1h-1zM853 656h1v1h-1zM873 656h1v1h-1zM893 656h1v1h-1zM913 656h1v1h-1zM933 656h1v1h-1zM953 656h1v1h-1zM972 656h1v1h-1zM992 656h1v1h-1zM1012 656h1v1h-1zM1032 656h1v1h-1zM1052 656h1v1h-1zM1072 656h1v1h-1zM1091 656h1v1h-1zM1111 656h1v1h-1zM1131 656h1v1h-1zM1151 656h1v1h-1zM1171 656h1v1h-1zM1191 656h1v1h-1zM1211 656h1v1h-1zM1230 656h1v1h-1zM1250 656h1v1h-1zM1270 656h1v1h-1zM1290 656h1v1h-1zM1310 656h1v1h-1zM1330 656h1v1h-1zM1349 656h1v1h-1zM1369 656h1v1h-1zM1389 656h1v1h-1zM1409 656h1v1h-1zM1429 656h1v1h-1zM1449 656h1v1h-1zM1468 656h1v1h-1zM1488 656h1v1h-1zM1508 656h1v1h-1zM1528 656h1v1h-1zM1548 656h1v1h-1zM1568 656h1v1h-1zM1588 656h1v1h-1zM1607 656h1v1h-1zM1627 656h1v1h-1zM1647 656h1v1h-1zM1667 656h1v1h-1zM1687 656h1v1h-1zM1707 656h1v1h-1zM1726 656h1v1h-1zM1746 656h1v1h-1zM1766 656h1v1h-1zM1786 656h1v1h-1zM1806 656h1v1h-1zM1826 656h1v1h-1zM1846 656h1v1h-1zM1865 656h1v1h-1zM40 675h1v1h-1zM59 675h1v1h-1zM79 675h1v1h-1zM99 675h1v1h-1zM119 675h1v1h-1zM139 675h1v1h-1zM159 675h1v1h-1zM179 675h1v1h-1zM198 675h1v1h-1zM218 675h1v1h-1zM238 675h1v1h-1zM258 675h1v1h-1zM278 675h1v1h-1zM298 675h1v1h-1zM317 675h1v1h-1zM337 675h1v1h-1zM357 675h1v1h-1zM377 675h1v1h-1zM397 675h1v1h-1zM417 675h1v1h-1zM437 675h1v1h-1zM456 675h1v1h-1zM476 675h1v1h-1zM496 675h1v1h-1zM516 675h1v1h-1zM536 675h1v1h-1zM556 675h1v1h-1zM575 675h1v1h-1zM595 675h1v1h-1zM615 675h1v1h-1zM635 675h1v1h-1zM655 675h1v1h-1zM675 675h1v1h-1zM695 675h1v1h-1zM714 675h1v1h-1zM734 675h1v1h-1zM754 675h1v1h-1zM774 675h1v1h-1zM794 675h1v1h-1zM814 675h1v1h-1zM833 675h1v1h-1zM853 675h1v1h-1zM873 675h1v1h-1zM893 675h1v1h-1zM913 675h1v1h-1zM933 675h1v1h-1zM953 675h1v1h-1zM972 675h1v1h-1zM992 675h1v1h-1zM1012 675h1v1h-1zM1032 675h1v1h-1zM1052 675h1v1h-1zM1072 675h1v1h-1zM1091 675h1v1h-1zM1111 675h1v1h-1zM1131 675h1v1h-1zM1151 675h1v1h-1zM1171 675h1v1h-1zM1191 675h1v1h-1zM1211 675h1v1h-1zM1230 675h1v1h-1zM1250 675h1v1h-1zM1270 675h1v1h-1zM1290 675h1v1h-1zM1310 675h1v1h-1zM1330 675h1v1h-1zM1349 675h1v1h-1zM1369 675h1v1h-1zM1389 675h1v1h-1zM1409 675h1v1h-1zM1429 675h1v1h-1zM1449 675h1v1h-1zM1468 675h1v1h-1zM1488 675h1v1h-1zM1508 675h1v1h-1zM1528 675h1v1h-1zM1548 675h1v1h-1zM1568 675h1v1h-1zM1588 675h1v1h-1zM1607 675h1v1h-1zM1627 675h1v1h-1zM1647 675h1v1h-1zM1667 675h1v1h-1zM1687 675h1v1h-1zM1707 675h1v1h-1zM1726 675h1v1h-1zM1746 675h1v1h-1zM1766 675h1v1h-1zM1786 675h1v1h-1zM1806 675h1v1h-1zM1826 675h1v1h-1zM1846 675h1v1h-1zM1865 675h1v1h-1zM40 695h1v1h-1zM59 695h1v1h-1zM79 695h1v1h-1zM99 695h1v1h-1zM119 695h1v1h-1zM139 695h1v1h-1zM159 695h1v1h-1zM179 695h1v1h-1zM198 695h1v1h-1zM218 695h1v1h-1zM238 695h1v1h-1zM258 695h1v1h-1zM278 695h1v1h-1zM298 695h1v1h-1zM317 695h1v1h-1zM337 695h1v1h-1zM357 695h1v1h-1zM377 695h1v1h-1zM397 695h1v1h-1zM417 695h1v1h-1zM437 695h1v1h-1zM456 695h1v1h-1zM476 695h1v1h-1zM496 695h1v1h-1zM516 695h1v1h-1zM536 695h1v1h-1zM556 695h1v1h-1zM575 695h1v1h-1zM595 695h1v1h-1zM615 695h1v1h-1zM635 695h1v1h-1zM655 695h1v1h-1zM675 695h1v1h-1zM695 695h1v1h-1zM714 695h1v1h-1zM734 695h1v1h-1zM754 695h1v1h-1zM774 695h1v1h-1zM794 695h1v1h-1zM814 695h1v1h-1zM833 695h1v1h-1zM853 695h1v1h-1zM873 695h1v1h-1zM893 695h1v1h-1zM913 695h1v1h-1zM933 695h1v1h-1zM953 695h1v1h-1zM972 695h1v1h-1zM992 695h1v1h-1zM1012 695h1v1h-1zM1032 695h1v1h-1zM1052 695h1v1h-1zM1072 695h1v1h-1zM1091 695h1v1h-1zM1111 695h1v1h-1zM1131 695h1v1h-1zM1151 695h1v1h-1zM1171 695h1v1h-1zM1191 695h1v1h-1zM1211 695h1v1h-1zM1230 695h1v1h-1zM1250 695h1v1h-1zM1270 695h1v1h-1zM1290 695h1v1h-1zM1310 695h1v1h-1zM1330 695h1v1h-1zM1349 695h1v1h-1zM1369 695h1v1h-1zM1389 695h1v1h-1zM1409 695h1v1h-1zM1429 695h1v1h-1zM1449 695h1v1h-1zM1468 695h1v1h-1zM1488 695h1v1h-1zM1508 695h1v1h-1zM1528 695h1v1h-1zM1548 695h1v1h-1zM1568 695h1v1h-1zM1588 695h1v1h-1zM1607 695h1v1h-1zM1627 695h1v1h-1zM1647 695h1v1h-1zM1667 695h1v1h-1zM1687 695h1v1h-1zM1707 695h1v1h-1zM1726 695h1v1h-1zM1746 695h1v1h-1zM1766 695h1v1h-1zM1786 695h1v1h-1zM1806 695h1v1h-1zM1826 695h1v1h-1zM1846 695h1v1h-1zM1865 695h1v1h-1zM40 715h1v1h-1zM59 715h1v1h-1zM79 715h1v1h-1zM99 715h1v1h-1zM119 715h1v1h-1zM139 715h1v1h-1zM159 715h1v1h-1zM179 715h1v1h-1zM198 715h1v1h-1zM218 715h1v1h-1zM238 715h1v1h-1zM258 715h1v1h-1zM278 715h1v1h-1zM298 715h1v1h-1zM317 715h1v1h-1zM337 715h1v1h-1zM357 715h1v1h-1zM377 715h1v1h-1zM397 715h1v1h-1zM417 715h1v1h-1zM437 715h1v1h-1zM456 715h1v1h-1zM476 715h1v1h-1zM496 715h1v1h-1zM516 715h1v1h-1zM536 715h1v1h-1zM556 715h1v1h-1zM575 715h1v1h-1zM595 715h1v1h-1zM615 715h1v1h-1zM635 715h1v1h-1zM655 715h1v1h-1zM675 715h1v1h-1zM695 715h1v1h-1zM714 715h1v1h-1zM734 715h1v1h-1zM754 715h1v1h-1zM774 715h1v1h-1zM794 715h1v1h-1zM814 715h1v1h-1zM833 715h1v1h-1zM853 715h1v1h-1zM873 715h1v1h-1zM893 715h1v1h-1zM913 715h1v1h-1zM933 715h1v1h-1zM953 715h1v1h-1zM972 715h1v1h-1zM992 715h1v1h-1zM1012 715h1v1h-1zM1032 715h1v1h-1zM1052 715h1v1h-1zM1072 715h1v1h-1zM1091 715h1v1h-1zM1111 715h1v1h-1zM1131 715h1v1h-1zM1151 715h1v1h-1zM1171 715h1v1h-1zM1191 715h1v1h-1zM1211 715h1v1h-1zM1230 715h1v1h-1zM1250 715h1v1h-1zM1270 715h1v1h-1zM1290 715h1v1h-1zM1310 715h1v1h-1zM1330 715h1v1h-1zM1349 715h1v1h-1zM1369 715h1v1h-1zM1389 715h1v1h-1zM1409 715h1v1h-1zM1429 715h1v1h-1zM1449 715h1v1h-1zM1468 715h1v1h-1zM1488 715h1v1h-1zM1508 715h1v1h-1zM1528 715h1v1h-1zM1548 715h1v1h-1zM1568 715h1v1h-1zM1588 715h1v1h-1zM1607 715h1v1h-1zM1627 715h1v1h-1zM1647 715h1v1h-1zM1667 715h1v1h-1zM1687 715h1v1h-1zM1707 715h1v1h-1zM1726 715h1v1h-1zM1746 715h1v1h-1zM1766 715h1v1h-1zM1786 715h1v1h-1zM1806 715h1v1h-1zM1826 715h1v1h-1zM1846 715h1v1h-1zM1865 715h1v1h-1zM40 735h1v1h-1zM59 735h1v1h-1zM79 735h1v1h-1zM99 735h1v1h-1zM119 735h1v1h-1zM139 735h1v1h-1zM159 735h1v1h-1zM179 735h1v1h-1zM198 735h1v1h-1zM218 735h1v1h-1zM238 735h1v1h-1zM258 735h1v1h-1zM278 735h1v1h-1zM298 735h1v1h-1zM317 735h1v1h-1zM337 735h1v1h-1zM357 735h1v1h-1zM377 735h1v1h-1zM397 735h1v1h-1zM417 735h1v1h-1zM437 735h1v1h-1zM456 735h1v1h-1zM476 735h1v1h-1zM496 735h1v1h-1zM516 735h1v1h-1zM536 735h1v1h-1zM556 735h1v1h-1zM575 735h1v1h-1zM595 735h1v1h-1zM615 735h1v1h-1zM635 735h1v1h-1zM655 735h1v1h-1zM675 735h1v1h-1zM695 735h1v1h-1zM714 735h1v1h-1zM734 735h1v1h-1zM754 735h1v1h-1zM774 735h1v1h-1zM794 735h1v1h-1zM814 735h1v1h-1zM833 735h1v1h-1zM853 735h1v1h-1zM873 735h1v1h-1zM893 735h1v1h-1zM913 735h1v1h-1zM933 735h1v1h-1zM953 735h1v1h-1zM972 735h1v1h-1zM992 735h1v1h-1zM1012 735h1v1h-1zM1032 735h1v1h-1zM1052 735h1v1h-1zM1072 735h1v1h-1zM1091 735h1v1h-1zM1111 735h1v1h-1zM1131 735h1v1h-1zM1151 735h1v1h-1zM1171 735h1v1h-1zM1191 735h1v1h-1zM1211 735h1v1h-1zM1230 735h1v1h-1zM1250 735h1v1h-1zM1270 735h1v1h-1zM1290 735h1v1h-1zM1310 735h1v1h-1zM1330 735h1v1h-1zM1349 735h1v1h-1zM1369 735h1v1h-1zM1389 735h1v1h-1zM1409 735h1v1h-1zM1429 735h1v1h-1zM1449 735h1v1h-1zM1468 735h1v1h-1zM1488 735h1v1h-1zM1508 735h1v1h-1zM1528 735h1v1h-1zM1548 735h1v1h-1zM1568 735h1v1h-1zM1588 735h1v1h-1zM1607 735h1v1h-1zM1627 735h1v1h-1zM1647 735h1v1h-1zM1667 735h1v1h-1zM1687 735h1v1h-1zM1707 735h1v1h-1zM1726 735h1v1h-1zM1746 735h1v1h-1zM1766 735h1v1h-1zM1786 735h1v1h-1zM1806 735h1v1h-1zM1826 735h1v1h-1zM1846 735h1v1h-1zM1865 735h1v1h-1zM40 755h1v1h-1zM59 755h1v1h-1zM79 755h1v1h-1zM99 755h1v1h-1zM119 755h1v1h-1zM139 755h1v1h-1zM159 755h1v1h-1zM179 755h1v1h-1zM198 755h1v1h-1zM218 755h1v1h-1zM238 755h1v1h-1zM258 755h1v1h-1zM278 755h1v1h-1zM298 755h1v1h-1zM317 755h1v1h-1zM337 755h1v1h-1zM357 755h1v1h-1zM377 755h1v1h-1zM397 755h1v1h-1zM417 755h1v1h-1zM437 755h1v1h-1zM456 755h1v1h-1zM476 755h1v1h-1zM496 755h1v1h-1zM516 755h1v1h-1zM536 755h1v1h-1zM556 755h1v1h-1zM575 755h1v1h-1zM595 755h1v1h-1zM615 755h1v1h-1zM635 755h1v1h-1zM655 755h1v1h-1zM675 755h1v1h-1zM695 755h1v1h-1zM714 755h1v1h-1zM734 755h1v1h-1zM754 755h1v1h-1zM774 755h1v1h-1zM794 755h1v1h-1zM814 755h1v1h-1zM833 755h1v1h-1zM853 755h1v1h-1zM873 755h1v1h-1zM893 755h1v1h-1zM913 755h1v1h-1zM933 755h1v1h-1zM953 755h1v1h-1zM972 755h1v1h-1zM992 755h1v1h-1zM1012 755h1v1h-1zM1032 755h1v1h-1zM1052 755h1v1h-1zM1072 755h1v1h-1zM1091 755h1v1h-1zM1111 755h1v1h-1zM1131 755h1v1h-1zM1151 755h1v1h-1zM1171 755h1v1h-1zM1191 755h1v1h-1zM1211 755h1v1h-1zM1230 755h1v1h-1zM1250 755h1v1h-1zM1270 755h1v1h-1zM1290 755h1v1h-1zM1310 755h1v1h-1zM1330 755h1v1h-1zM1349 755h1v1h-1zM1369 755h1v1h-1zM1389 755h1v1h-1zM1409 755h1v1h-1zM1429 755h1v1h-1zM1449 755h1v1h-1zM1468 755h1v1h-1zM1488 755h1v1h-1zM1508 755h1v1h-1zM1528 755h1v1h-1zM1548 755h1v1h-1zM1568 755h1v1h-1zM1588 755h1v1h-1zM1607 755h1v1h-1zM1627 755h1v1h-1zM1647 755h1v1h-1zM1667 755h1v1h-1zM1687 755h1v1h-1zM1707 755h1v1h-1zM1726 755h1v1h-1zM1746 755h1v1h-1zM1766 755h1v1h-1zM1786 755h1v1h-1zM1806 755h1v1h-1zM1826 755h1v1h-1zM1846 755h1v1h-1zM1865 755h1v1h-1zM40 775h1v1h-1zM59 775h1v1h-1zM79 775h1v1h-1zM99 775h1v1h-1zM119 775h1v1h-1zM139 775h1v1h-1zM159 775h1v1h-1zM179 775h1v1h-1zM198 775h1v1h-1zM218 775h1v1h-1zM238 775h1v1h-1zM258 775h1v1h-1zM278 775h1v1h-1zM298 775h1v1h-1zM317 775h1v1h-1zM337 775h1v1h-1zM357 775h1v1h-1zM377 775h1v1h-1zM397 775h1v1h-1zM417 775h1v1h-1zM437 775h1v1h-1zM456 775h1v1h-1zM476 775h1v1h-1zM496 775h1v1h-1zM516 775h1v1h-1zM536 775h1v1h-1zM556 775h1v1h-1zM575 775h1v1h-1zM595 775h1v1h-1zM615 775h1v1h-1zM635 775h1v1h-1zM655 775h1v1h-1zM675 775h1v1h-1zM695 775h1v1h-1zM714 775h1v1h-1zM734 775h1v1h-1zM754 775h1v1h-1zM774 775h1v1h-1zM794 775h1v1h-1zM814 775h1v1h-1zM833 775h1v1h-1zM853 775h1v1h-1zM873 775h1v1h-1zM893 775h1v1h-1zM913 775h1v1h-1zM933 775h1v1h-1zM953 775h1v1h-1zM972 775h1v1h-1zM992 775h1v1h-1zM1012 775h1v1h-1zM1032 775h1v1h-1zM1052 775h1v1h-1zM1072 775h1v1h-1zM1091 775h1v1h-1zM1111 775h1v1h-1zM1131 775h1v1h-1zM1151 775h1v1h-1zM1171 775h1v1h-1zM1191 775h1v1h-1zM1211 775h1v1h-1zM1230 775h1v1h-1zM1250 775h1v1h-1zM1270 775h1v1h-1zM1290 775h1v1h-1zM1310 775h1v1h-1zM1330 775h1v1h-1zM1349 775h1v1h-1zM1369 775h1v1h-1zM1389 775h1v1h-1zM1409 775h1v1h-1zM1429 775h1v1h-1zM1449 775h1v1h-1zM1468 775h1v1h-1zM1488 775h1v1h-1zM1508 775h1v1h-1zM1528 775h1v1h-1zM1548 775h1v1h-1zM1568 775h1v1h-1zM1588 775h1v1h-1zM1607 775h1v1h-1zM1627 775h1v1h-1zM1647 775h1v1h-1zM1667 775h1v1h-1zM1687 775h1v1h-1zM1707 775h1v1h-1zM1726 775h1v1h-1zM1746 775h1v1h-1zM1766 775h1v1h-1zM1786 775h1v1h-1zM1806 775h1v1h-1zM1826 775h1v1h-1zM1846 775h1v1h-1zM1865 775h1v1h-1zM40 794h1v1h-1zM59 794h1v1h-1zM79 794h1v1h-1zM99 794h1v1h-1zM119 794h1v1h-1zM139 794h1v1h-1zM159 794h1v1h-1zM179 794h1v1h-1zM198 794h1v1h-1zM218 794h1v1h-1zM238 794h1v1h-1zM258 794h1v1h-1zM278 794h1v1h-1zM298 794h1v1h-1zM317 794h1v1h-1zM337 794h1v1h-1zM357 794h1v1h-1zM377 794h1v1h-1zM397 794h1v1h-1zM417 794h1v1h-1zM437 794h1v1h-1zM456 794h1v1h-1zM476 794h1v1h-1zM496 794h1v1h-1zM516 794h1v1h-1zM536 794h1v1h-1zM556 794h1v1h-1zM575 794h1v1h-1zM595 794h1v1h-1zM615 794h1v1h-1zM635 794h1v1h-1zM655 794h1v1h-1zM675 794h1v1h-1zM695 794h1v1h-1zM714 794h1v1h-1zM734 794h1v1h-1zM754 794h1v1h-1zM774 794h1v1h-1zM794 794h1v1h-1zM814 794h1v1h-1zM833 794h1v1h-1zM853 794h1v1h-1zM873 794h1v1h-1zM893 794h1v1h-1zM913 794h1v1h-1zM933 794h1v1h-1zM953 794h1v1h-1zM972 794h1v1h-1zM992 794h1v1h-1zM1012 794h1v1h-1zM1032 794h1v1h-1zM1052 794h1v1h-1zM1072 794h1v1h-1zM1091 794h1v1h-1zM1111 794h1v1h-1zM1131 794h1v1h-1zM1151 794h1v1h-1zM1171 794h1v1h-1zM1191 794h1v1h-1zM1211 794h1v1h-1zM1230 794h1v1h-1zM1250 794h1v1h-1zM1270 794h1v1h-1zM1290 794h1v1h-1zM1310 794h1v1h-1zM1330 794h1v1h-1zM1349 794h1v1h-1zM1369 794h1v1h-1zM1389 794h1v1h-1zM1409 794h1v1h-1zM1429 794h1v1h-1zM1449 794h1v1h-1zM1468 794h1v1h-1zM1488 794h1v1h-1zM1508 794h1v1h-1zM1528 794h1v1h-1zM1548 794h1v1h-1zM1568 794h1v1h-1zM1588 794h1v1h-1zM1607 794h1v1h-1zM1627 794h1v1h-1zM1647 794h1v1h-1zM1667 794h1v1h-1zM1687 794h1v1h-1zM1707 794h1v1h-1zM1726 794h1v1h-1zM1746 794h1v1h-1zM1766 794h1v1h-1zM1786 794h1v1h-1zM1806 794h1v1h-1zM1826 794h1v1h-1zM1846 794h1v1h-1zM1865 794h1v1h-1zM40 814h1v1h-1zM59 814h1v1h-1zM79 814h1v1h-1zM99 814h1v1h-1zM119 814h1v1h-1zM139 814h1v1h-1zM159 814h1v1h-1zM179 814h1v1h-1zM198 814h1v1h-1zM218 814h1v1h-1zM238 814h1v1h-1zM258 814h1v1h-1zM278 814h1v1h-1zM298 814h1v1h-1zM317 814h1v1h-1zM337 814h1v1h-1zM357 814h1v1h-1zM377 814h1v1h-1zM397 814h1v1h-1zM417 814h1v1h-1zM437 814h1v1h-1zM456 814h1v1h-1zM476 814h1v1h-1zM496 814h1v1h-1zM516 814h1v1h-1zM536 814h1v1h-1zM556 814h1v1h-1zM575 814h1v1h-1zM595 814h1v1h-1zM615 814h1v1h-1zM635 814h1v1h-1zM655 814h1v1h-1zM675 814h1v1h-1zM695 814h1v1h-1zM714 814h1v1h-1zM734 814h1v1h-1zM754 814h1v1h-1zM774 814h1v1h-1zM794 814h1v1h-1zM814 814h1v1h-1zM833 814h1v1h-1zM853 814h1v1h-1zM873 814h1v1h-1zM893 814h1v1h-1zM913 814h1v1h-1zM933 814h1v1h-1zM953 814h1v1h-1zM972 814h1v1h-1zM992 814h1v1h-1zM1012 814h1v1h-1zM1032 814h1v1h-1zM1052 814h1v1h-1zM1072 814h1v1h-1zM1091 814h1v1h-1zM1111 814h1v1h-1zM1131 814h1v1h-1zM1151 814h1v1h-1zM1171 814h1v1h-1zM1191 814h1v1h-1zM1211 814h1v1h-1zM1230 814h1v1h-1zM1250 814h1v1h-1zM1270 814h1v1h-1zM1290 814h1v1h-1zM1310 814h1v1h-1zM1330 814h1v1h-1zM1349 814h1v1h-1zM1369 814h1v1h-1zM1389 814h1v1h-1zM1409 814h1v1h-1zM1429 814h1v1h-1zM1449 814h1v1h-1zM1468 814h1v1h-1zM1488 814h1v1h-1zM1508 814h1v1h-1zM1528 814h1v1h-1zM1548 814h1v1h-1zM1568 814h1v1h-1zM1588 814h1v1h-1zM1607 814h1v1h-1zM1627 814h1v1h-1zM1647 814h1v1h-1zM1667 814h1v1h-1zM1687 814h1v1h-1zM1707 814h1v1h-1zM1726 814h1v1h-1zM1746 814h1v1h-1zM1766 814h1v1h-1zM1786 814h1v1h-1zM1806 814h1v1h-1zM1826 814h1v1h-1zM1846 814h1v1h-1zM1865 814h1v1h-1zM40 834h1v1h-1zM59 834h1v1h-1zM79 834h1v1h-1zM99 834h1v1h-1zM119 834h1v1h-1zM139 834h1v1h-1zM159 834h1v1h-1zM179 834h1v1h-1zM198 834h1v1h-1zM218 834h1v1h-1zM238 834h1v1h-1zM258 834h1v1h-1zM278 834h1v1h-1zM298 834h1v1h-1zM317 834h1v1h-1zM337 834h1v1h-1zM357 834h1v1h-1zM377 834h1v1h-1zM397 834h1v1h-1zM417 834h1v1h-1zM437 834h1v1h-1zM456 834h1v1h-1zM476 834h1v1h-1zM496 834h1v1h-1zM516 834h1v1h-1zM536 834h1v1h-1zM556 834h1v1h-1zM575 834h1v1h-1zM595 834h1v1h-1zM615 834h1v1h-1zM635 834h1v1h-1zM655 834h1v1h-1zM675 834h1v1h-1zM695 834h1v1h-1zM714 834h1v1h-1zM734 834h1v1h-1zM754 834h1v1h-1zM774 834h1v1h-1zM794 834h1v1h-1zM814 834h1v1h-1zM833 834h1v1h-1zM853 834h1v1h-1zM873 834h1v1h-1zM893 834h1v1h-1zM913 834h1v1h-1zM933 834h1v1h-1zM953 834h1v1h-1zM972 834h1v1h-1zM992 834h1v1h-1zM1012 834h1v1h-1zM1032 834h1v1h-1zM1052 834h1v1h-1zM1072 834h1v1h-1zM1091 834h1v1h-1zM1111 834h1v1h-1zM1131 834h1v1h-1zM1151 834h1v1h-1zM1171 834h1v1h-1zM1191 834h1v1h-1zM1211 834h1v1h-1zM1230 834h1v1h-1zM1250 834h1v1h-1zM1270 834h1v1h-1zM1290 834h1v1h-1zM1310 834h1v1h-1zM1330 834h1v1h-1zM1349 834h1v1h-1zM1369 834h1v1h-1zM1389 834h1v1h-1zM1409 834h1v1h-1zM1429 834h1v1h-1zM1449 834h1v1h-1zM1468 834h1v1h-1zM1488 834h1v1h-1zM1508 834h1v1h-1zM1528 834h1v1h-1zM1548 834h1v1h-1zM1568 834h1v1h-1zM1588 834h1v1h-1zM1607 834h1v1h-1zM1627 834h1v1h-1zM1647 834h1v1h-1zM1667 834h1v1h-1zM1687 834h1v1h-1zM1707 834h1v1h-1zM1726 834h1v1h-1zM1746 834h1v1h-1zM1766 834h1v1h-1zM1786 834h1v1h-1zM1806 834h1v1h-1zM1826 834h1v1h-1zM1846 834h1v1h-1zM1865 834h1v1h-1zM40 854h1v1h-1zM59 854h1v1h-1zM79 854h1v1h-1zM99 854h1v1h-1zM119 854h1v1h-1zM139 854h1v1h-1zM159 854h1v1h-1zM179 854h1v1h-1zM198 854h1v1h-1zM218 854h1v1h-1zM238 854h1v1h-1zM258 854h1v1h-1zM278 854h1v1h-1zM298 854h1v1h-1zM317 854h1v1h-1zM337 854h1v1h-1zM357 854h1v1h-1zM377 854h1v1h-1zM397 854h1v1h-1zM417 854h1v1h-1zM437 854h1v1h-1zM456 854h1v1h-1zM476 854h1v1h-1zM496 854h1v1h-1zM516 854h1v1h-1zM536 854h1v1h-1zM556 854h1v1h-1zM575 854h1v1h-1zM595 854h1v1h-1zM615 854h1v1h-1zM635 854h1v1h-1zM655 854h1v1h-1zM675 854h1v1h-1zM695 854h1v1h-1zM714 854h1v1h-1zM734 854h1v1h-1zM754 854h1v1h-1zM774 854h1v1h-1zM794 854h1v1h-1zM814 854h1v1h-1zM833 854h1v1h-1zM853 854h1v1h-1zM873 854h1v1h-1zM893 854h1v1h-1zM913 854h1v1h-1zM933 854h1v1h-1zM953 854h1v1h-1zM972 854h1v1h-1zM992 854h1v1h-1zM1012 854h1v1h-1zM1032 854h1v1h-1zM1052 854h1v1h-1zM1072 854h1v1h-1zM1091 854h1v1h-1zM1111 854h1v1h-1zM1131 854h1v1h-1zM1151 854h1v1h-1zM1171 854h1v1h-1zM1191 854h1v1h-1zM1211 854h1v1h-1zM1230 854h1v1h-1zM1250 854h1v1h-1zM1270 854h1v1h-1zM1290 854h1v1h-1zM1310 854h1v1h-1zM1330 854h1v1h-1zM1349 854h1v1h-1zM1369 854h1v1h-1zM1389 854h1v1h-1zM1409 854h1v1h-1zM1429 854h1v1h-1zM1449 854h1v1h-1zM1468 854h1v1h-1zM1488 854h1v1h-1zM1508 854h1v1h-1zM1528 854h1v1h-1zM1548 854h1v1h-1zM1568 854h1v1h-1zM1588 854h1v1h-1zM1607 854h1v1h-1zM1627 854h1v1h-1zM1647 854h1v1h-1zM1667 854h1v1h-1zM1687 854h1v1h-1zM1707 854h1v1h-1zM1726 854h1v1h-1zM1746 854h1v1h-1zM1766 854h1v1h-1zM1786 854h1v1h-1zM1806 854h1v1h-1zM1826 854h1v1h-1zM1846 854h1v1h-1zM1865 854h1v1h-1zM40 874h1v1h-1zM59 874h1v1h-1zM79 874h1v1h-1zM99 874h1v1h-1zM119 874h1v1h-1zM139 874h1v1h-1zM159 874h1v1h-1zM179 874h1v1h-1zM198 874h1v1h-1zM218 874h1v1h-1zM238 874h1v1h-1zM258 874h1v1h-1zM278 874h1v1h-1zM298 874h1v1h-1zM317 874h1v1h-1zM337 874h1v1h-1zM357 874h1v1h-1zM377 874h1v1h-1zM397 874h1v1h-1zM417 874h1v1h-1zM437 874h1v1h-1zM456 874h1v1h-1zM476 874h1v1h-1zM496 874h1v1h-1zM516 874h1v1h-1zM536 874h1v1h-1zM556 874h1v1h-1zM575 874h1v1h-1zM595 874h1v1h-1zM615 874h1v1h-1zM635 874h1v1h-1zM655 874h1v1h-1zM675 874h1v1h-1zM695 874h1v1h-1zM714 874h1v1h-1zM734 874h1v1h-1zM754 874h1v1h-1zM774 874h1v1h-1zM794 874h1v1h-1zM814 874h1v1h-1zM833 874h1v1h-1zM853 874h1v1h-1zM873 874h1v1h-1zM893 874h1v1h-1zM913 874h1v1h-1zM933 874h1v1h-1zM953 874h1v1h-1zM972 874h1v1h-1zM992 874h1v1h-1zM1012 874h1v1h-1zM1032 874h1v1h-1zM1052 874h1v1h-1zM1072 874h1v1h-1zM1091 874h1v1h-1zM1111 874h1v1h-1zM1131 874h1v1h-1zM1151 874h1v1h-1zM1171 874h1v1h-1zM1191 874h1v1h-1zM1211 874h1v1h-1zM1230 874h1v1h-1zM1250 874h1v1h-1zM1270 874h1v1h-1zM1290 874h1v1h-1zM1310 874h1v1h-1zM1330 874h1v1h-1zM1349 874h1v1h-1zM1369 874h1v1h-1zM1389 874h1v1h-1zM1409 874h1v1h-1zM1429 874h1v1h-1zM1449 874h1v1h-1zM1468 874h1v1h-1zM1488 874h1v1h-1zM1508 874h1v1h-1zM1528 874h1v1h-1zM1548 874h1v1h-1zM1568 874h1v1h-1zM1588 874h1v1h-1zM1607 874h1v1h-1zM1627 874h1v1h-1zM1647 874h1v1h-1zM1667 874h1v1h-1zM1687 874h1v1h-1zM1707 874h1v1h-1zM1726 874h1v1h-1zM1746 874h1v1h-1zM1766 874h1v1h-1zM1786 874h1v1h-1zM1806 874h1v1h-1zM1826 874h1v1h-1zM1846 874h1v1h-1zM1865 874h1v1h-1zM40 894h1v1h-1zM59 894h1v1h-1zM79 894h1v1h-1zM99 894h1v1h-1zM119 894h1v1h-1zM139 894h1v1h-1zM159 894h1v1h-1zM179 894h1v1h-1zM198 894h1v1h-1zM218 894h1v1h-1zM238 894h1v1h-1zM258 894h1v1h-1zM278 894h1v1h-1zM298 894h1v1h-1zM317 894h1v1h-1zM337 894h1v1h-1zM357 894h1v1h-1zM377 894h1v1h-1zM397 894h1v1h-1zM417 894h1v1h-1zM437 894h1v1h-1zM456 894h1v1h-1zM476 894h1v1h-1zM496 894h1v1h-1zM516 894h1v1h-1zM536 894h1v1h-1zM556 894h1v1h-1zM575 894h1v1h-1zM595 894h1v1h-1zM615 894h1v1h-1zM635 894h1v1h-1zM655 894h1v1h-1zM675 894h1v1h-1zM695 894h1v1h-1zM714 894h1v1h-1zM734 894h1v1h-1zM754 894h1v1h-1zM774 894h1v1h-1zM794 894h1v1h-1zM814 894h1v1h-1zM833 894h1v1h-1zM853 894h1v1h-1zM873 894h1v1h-1zM893 894h1v1h-1zM913 894h1v1h-1zM933 894h1v1h-1zM953 894h1v1h-1zM972 894h1v1h-1zM992 894h1v1h-1zM1012 894h1v1h-1zM1032 894h1v1h-1zM1052 894h1v1h-1zM1072 894h1v1h-1zM1091 894h1v1h-1zM1111 894h1v1h-1zM1131 894h1v1h-1zM1151 894h1v1h-1zM1171 894h1v1h-1zM1191 894h1v1h-1zM1211 894h1v1h-1zM1230 894h1v1h-1zM1250 894h1v1h-1zM1270 894h1v1h-1zM1290 894h1v1h-1zM1310 894h1v1h-1zM1330 894h1v1h-1zM1349 894h1v1h-1zM1369 894h1v1h-1zM1389 894h1v1h-1zM1409 894h1v1h-1zM1429 894h1v1h-1zM1449 894h1v1h-1zM1468 894h1v1h-1zM1488 894h1v1h-1zM1508 894h1v1h-1zM1528 894h1v1h-1zM1548 894h1v1h-1zM1568 894h1v1h-1zM1588 894h1v1h-1zM1607 894h1v1h-1zM1627 894h1v1h-1zM1647 894h1v1h-1zM1667 894h1v1h-1zM1687 894h1v1h-1zM1707 894h1v1h-1zM1726 894h1v1h-1zM1746 894h1v1h-1zM1766 894h1v1h-1zM1786 894h1v1h-1zM1806 894h1v1h-1zM1826 894h1v1h-1zM1846 894h1v1h-1zM1865 894h1v1h-1zM40 914h1v1h-1zM59 914h1v1h-1zM79 914h1v1h-1zM99 914h1v1h-1zM119 914h1v1h-1zM139 914h1v1h-1zM159 914h1v1h-1zM179 914h1v1h-1zM198 914h1v1h-1zM218 914h1v1h-1zM238 914h1v1h-1zM258 914h1v1h-1zM278 914h1v1h-1zM298 914h1v1h-1zM317 914h1v1h-1zM337 914h1v1h-1zM357 914h1v1h-1zM377 914h1v1h-1zM397 914h1v1h-1zM417 914h1v1h-1zM437 914h1v1h-1zM456 914h1v1h-1zM476 914h1v1h-1zM496 914h1v1h-1zM516 914h1v1h-1zM536 914h1v1h-1zM556 914h1v1h-1zM575 914h1v1h-1zM595 914h1v1h-1zM615 914h1v1h-1zM635 914h1v1h-1zM655 914h1v1h-1zM675 914h1v1h-1zM695 914h1v1h-1zM714 914h1v1h-1zM734 914h1v1h-1zM754 914h1v1h-1zM774 914h1v1h-1zM794 914h1v1h-1zM814 914h1v1h-1zM833 914h1v1h-1zM853 914h1v1h-1zM873 914h1v1h-1zM893 914h1v1h-1zM913 914h1v1h-1zM933 914h1v1h-1zM953 914h1v1h-1zM972 914h1v1h-1zM992 914h1v1h-1zM1012 914h1v1h-1zM1032 914h1v1h-1zM1052 914h1v1h-1zM1072 914h1v1h-1zM1091 914h1v1h-1zM1111 914h1v1h-1zM1131 914h1v1h-1zM1151 914h1v1h-1zM1171 914h1v1h-1zM1191 914h1v1h-1zM1211 914h1v1h-1zM1230 914h1v1h-1zM1250 914h1v1h-1zM1270 914h1v1h-1zM1290 914h1v1h-1zM1310 914h1v1h-1zM1330 914h1v1h-1zM1349 914h1v1h-1zM1369 914h1v1h-1zM1389 914h1v1h-1zM1409 914h1v1h-1zM1429 914h1v1h-1zM1449 914h1v1h-1zM1468 914h1v1h-1zM1488 914h1v1h-1zM1508 914h1v1h-1zM1528 914h1v1h-1zM1548 914h1v1h-1zM1568 914h1v1h-1zM1588 914h1v1h-1zM1607 914h1v1h-1zM1627 914h1v1h-1zM1647 914h1v1h-1zM1667 914h1v1h-1zM1687 914h1v1h-1zM1707 914h1v1h-1zM1726 914h1v1h-1zM1746 914h1v1h-1zM1766 914h1v1h-1zM1786 914h1v1h-1zM1806 914h1v1h-1zM1826 914h1v1h-1zM1846 914h1v1h-1zM1865 914h1v1h-1zM40 933h1v1h-1zM59 933h1v1h-1zM79 933h1v1h-1zM99 933h1v1h-1zM119 933h1v1h-1zM139 933h1v1h-1zM159 933h1v1h-1zM179 933h1v1h-1zM198 933h1v1h-1zM218 933h1v1h-1zM238 933h1v1h-1zM258 933h1v1h-1zM278 933h1v1h-1zM298 933h1v1h-1zM317 933h1v1h-1zM337 933h1v1h-1zM357 933h1v1h-1zM377 933h1v1h-1zM397 933h1v1h-1zM417 933h1v1h-1zM437 933h1v1h-1zM456 933h1v1h-1zM476 933h1v1h-1zM496 933h1v1h-1zM516 933h1v1h-1zM536 933h1v1h-1zM556 933h1v1h-1zM575 933h1v1h-1zM595 933h1v1h-1zM615 933h1v1h-1zM635 933h1v1h-1zM655 933h1v1h-1zM675 933h1v1h-1zM695 933h1v1h-1zM714 933h1v1h-1zM734 933h1v1h-1zM754 933h1v1h-1zM774 933h1v1h-1zM794 933h1v1h-1zM814 933h1v1h-1zM833 933h1v1h-1zM853 933h1v1h-1zM873 933h1v1h-1zM893 933h1v1h-1zM913 933h1v1h-1zM933 933h1v1h-1zM953 933h1v1h-1zM972 933h1v1h-1zM992 933h1v1h-1zM1012 933h1v1h-1zM1032 933h1v1h-1zM1052 933h1v1h-1zM1072 933h1v1h-1zM1091 933h1v1h-1zM1111 933h1v1h-1zM1131 933h1v1h-1zM1151 933h1v1h-1zM1171 933h1v1h-1zM1191 933h1v1h-1zM1211 933h1v1h-1zM1230 933h1v1h-1zM1250 933h1v1h-1zM1270 933h1v1h-1zM1290 933h1v1h-1zM1310 933h1v1h-1zM1330 933h1v1h-1zM1349 933h1v1h-1zM1369 933h1v1h-1zM1389 933h1v1h-1zM1409 933h1v1h-1zM1429 933h1v1h-1zM1449 933h1v1h-1zM1468 933h1v1h-1zM1488 933h1v1h-1zM1508 933h1v1h-1zM1528 933h1v1h-1zM1548 933h1v1h-1zM1568 933h1v1h-1zM1588 933h1v1h-1zM1607 933h1v1h-1zM1627 933h1v1h-1zM1647 933h1v1h-1zM1667 933h1v1h-1zM1687 933h1v1h-1zM1707 933h1v1h-1zM1726 933h1v1h-1zM1746 933h1v1h-1zM1766 933h1v1h-1zM1786 933h1v1h-1zM1806 933h1v1h-1zM1826 933h1v1h-1zM1846 933h1v1h-1zM1865 933h1v1h-1zM40 953h1v1h-1zM59 953h1v1h-1zM79 953h1v1h-1zM99 953h1v1h-1zM119 953h1v1h-1zM139 953h1v1h-1zM159 953h1v1h-1zM179 953h1v1h-1zM198 953h1v1h-1zM218 953h1v1h-1zM238 953h1v1h-1zM258 953h1v1h-1zM278 953h1v1h-1zM298 953h1v1h-1zM317 953h1v1h-1zM337 953h1v1h-1zM357 953h1v1h-1zM377 953h1v1h-1zM397 953h1v1h-1zM417 953h1v1h-1zM437 953h1v1h-1zM456 953h1v1h-1zM476 953h1v1h-1zM496 953h1v1h-1zM516 953h1v1h-1zM536 953h1v1h-1zM556 953h1v1h-1zM575 953h1v1h-1zM595 953h1v1h-1zM615 953h1v1h-1zM635 953h1v1h-1zM655 953h1v1h-1zM675 953h1v1h-1zM695 953h1v1h-1zM714 953h1v1h-1zM734 953h1v1h-1zM754 953h1v1h-1zM774 953h1v1h-1zM794 953h1v1h-1zM814 953h1v1h-1zM833 953h1v1h-1zM853 953h1v1h-1zM873 953h1v1h-1zM893 953h1v1h-1zM913 953h1v1h-1zM933 953h1v1h-1zM953 953h1v1h-1zM972 953h1v1h-1zM992 953h1v1h-1zM1012 953h1v1h-1zM1032 953h1v1h-1zM1052 953h1v1h-1zM1072 953h1v1h-1zM1091 953h1v1h-1zM1111 953h1v1h-1zM1131 953h1v1h-1zM1151 953h1v1h-1zM1171 953h1v1h-1zM1191 953h1v1h-1zM1211 953h1v1h-1zM1230 953h1v1h-1zM1250 953h1v1h-1zM1270 953h1v1h-1zM1290 953h1v1h-1zM1310 953h1v1h-1zM1330 953h1v1h-1zM1349 953h1v1h-1zM1369 953h1v1h-1zM1389 953h1v1h-1zM1409 953h1v1h-1zM1429 953h1v1h-1zM1449 953h1v1h-1zM1468 953h1v1h-1zM1488 953h1v1h-1zM1508 953h1v1h-1zM1528 953h1v1h-1zM1548 953h1v1h-1zM1568 953h1v1h-1zM1588 953h1v1h-1zM1607 953h1v1h-1zM1627 953h1v1h-1zM1647 953h1v1h-1zM1667 953h1v1h-1zM1687 953h1v1h-1zM1707 953h1v1h-1zM1726 953h1v1h-1zM1746 953h1v1h-1zM1766 953h1v1h-1zM1786 953h1v1h-1zM1806 953h1v1h-1zM1826 953h1v1h-1zM1846 953h1v1h-1zM1865 953h1v1h-1zM40 973h1v1h-1zM59 973h1v1h-1zM79 973h1v1h-1zM99 973h1v1h-1zM119 973h1v1h-1zM139 973h1v1h-1zM159 973h1v1h-1zM179 973h1v1h-1zM198 973h1v1h-1zM218 973h1v1h-1zM238 973h1v1h-1zM258 973h1v1h-1zM278 973h1v1h-1zM298 973h1v1h-1zM317 973h1v1h-1zM337 973h1v1h-1zM357 973h1v1h-1zM377 973h1v1h-1zM397 973h1v1h-1zM417 973h1v1h-1zM437 973h1v1h-1zM456 973h1v1h-1zM476 973h1v1h-1zM496 973h1v1h-1zM516 973h1v1h-1zM536 973h1v1h-1zM556 973h1v1h-1zM575 973h1v1h-1zM595 973h1v1h-1zM615 973h1v1h-1zM635 973h1v1h-1zM655 973h1v1h-1zM675 973h1v1h-1zM695 973h1v1h-1zM714 973h1v1h-1zM734 973h1v1h-1zM754 973h1v1h-1zM774 973h1v1h-1zM794 973h1v1h-1zM814 973h1v1h-1zM833 973h1v1h-1zM853 973h1v1h-1zM873 973h1v1h-1zM893 973h1v1h-1zM913 973h1v1h-1zM933 973h1v1h-1zM953 973h1v1h-1zM972 973h1v1h-1zM992 973h1v1h-1zM1012 973h1v1h-1zM1032 973h1v1h-1zM1052 973h1v1h-1zM1072 973h1v1h-1zM1091 973h1v1h-1zM1111 973h1v1h-1zM1131 973h1v1h-1zM1151 973h1v1h-1zM1171 973h1v1h-1zM1191 973h1v1h-1zM1211 973h1v1h-1zM1230 973h1v1h-1zM1250 973h1v1h-1zM1270 973h1v1h-1zM1290 973h1v1h-1zM1310 973h1v1h-1zM1330 973h1v1h-1zM1349 973h1v1h-1zM1369 973h1v1h-1zM1389 973h1v1h-1zM1409 973h1v1h-1zM1429 973h1v1h-1zM1449 973h1v1h-1zM1468 973h1v1h-1zM1488 973h1v1h-1zM1508 973h1v1h-1zM1528 973h1v1h-1zM1548 973h1v1h-1zM1568 973h1v1h-1zM1588 973h1v1h-1zM1607 973h1v1h-1zM1627 973h1v1h-1zM1647 973h1v1h-1zM1667 973h1v1h-1zM1687 973h1v1h-1zM1707 973h1v1h-1zM1726 973h1v1h-1zM1746 973h1v1h-1zM1766 973h1v1h-1zM1786 973h1v1h-1zM1806 973h1v1h-1zM1826 973h1v1h-1zM1846 973h1v1h-1zM1865 973h1v1h-1z" fill="#9a9a9a"/><path d="M973.0 438.0H1052.0M973.0 517.0H1112.0M1370.0 90V954.0M1767.0 90V954.0M1251.0 279.0H1900M1251.0 676.0H1900" fill="none" stroke="#009600" stroke-width="2" stroke-linecap="round" stroke-linejoin="round"/><path d="M497.0 358.0H893.0V874.0H497.0ZM417.0 398.0L497.0 398.0M417.0 438.0L497.0 438.0M417.0 477.0L497.0 477.0M417.0 517.0L497.0 517.0M417.0 557.0L497.0 557.0M417.0 596.0L497.0 596.0M417.0 636.0L497.0 636.0M417.0 676.0L497.0 676.0M417.0 716.0L497.0 716.0M417.0 755.0L497.0 755.0M417.0 795.0L497.0 795.0M417.0 835.0L497.0 835.0M893.0 398.0L973.0 398.0M893.0 438.0L973.0 438.0M893.0 477.0L973.0 477.0M893.0 517.0L973.0 517.0M893.0 557.0L973.0 557.0M893.0 596.0L973.0 596.0M893.0 636.0L973.0 636.0M893.0 676.0L973.0 676.0M893.0 716.0L973.0 716.0M893.0 755.0L973.0 755.0M893.0 795.0L973.0 795.0M893.0 835.0L973.0 835.0M1370.0 160.0L1409.0 160.0M1489.0 160.0L1529.0 160.0M1409.0 140.0L1489.0 140.0M1449.0 140.0L1449.0 112.0M1767.0 160.0L1806.0 160.0M1886.0 160.0L1925.0 160.0M1806.0 140.0L1886.0 140.0M1846.0 140.0L1846.0 112.0M1370.0 557.0L1409.0 557.0M1489.0 557.0L1529.0 557.0M1409.0 537.0L1489.0 537.0M1449.0 537.0L1449.0 509.0M1767.0 557.0L1806.0 557.0M1886.0 557.0L1925.0 557.0M1806.0 537.0L1886.0 537.0M1846.0 537.0L1846.0 509.0M1370.0 954.0L1409.0 954.0M1489.0 954.0L1529.0 954.0M1409.0 934.0L1489.0 934.0M1449.0 934.0L1449.0 906.0M1767.0 954.0L1806.0 954.0M1886.0 954.0L1925.0 954.0M1806.0 934.0L1886.0 934.0M1846.0 934.0L1846.0 906.0M1529.0 160.0L1529.0 200.0M1529.0 239.0L1529.0 279.0M1529.0 200.0L1529.0 239.0M1529.0 557.0L1529.0 596.0M1529.0 636.0L1529.0 676.0M1529.0 596.0L1529.0 636.0M1529.0 954.0L1529.0 993.0M1529.0 1033.0L1529.0 1073.0M1529.0 993.0L1529.0 1033.0M1925.0 160.0L1925.0 200.0M1925.0 239.0L1925.0 279.0M1925.0 200.0L1925.0 239.0M1925.0 557.0L1925.0 596.0M1925.0 636.0L1925.0 676.0M1925.0 596.0L1925.0 636.0" fill="none" stroke="#840000" stroke-width="2" stroke-linecap="round"/><path d="M1509.0 200.0H1548.0L1529.0 239.0ZM1509.0 239.0H1548.0M1509.0 596.0H1548.0L1529.0 636.0ZM1509.0 636.0H1548.0M1509.0 993.0H1548.0L1529.0 1033.0ZM1509.0 1033.0H1548.0M1906.0 200.0H1945.0L1925.0 239.0ZM1906.0 239.0H1945.0M1906.0 596.0H1945.0L1925.0 636.0ZM1906.0 636.0H1945.0" fill="none" stroke="#840000" stroke-width="4" stroke-linecap="round" stroke-linejoin="round"/><path d="M1052.0 438.0V458.0H1072.0L1052.0 477.0L1032.0 458.0H1052.0M1112.0 517.0V477.0M1100.0 497.0L1112.0 477.0L1124.0 497.0" fill="none" stroke="#840000" stroke-width="1.6" stroke-linecap="round" stroke-linejoin="round"/><path d="M973.0 557.0L990.0 537.0H1074.0V577.0H990.0ZM973.0 596.0L990.0 577.0H1074.0V616.0H990.0ZM973.0 636.0L990.0 616.0H1074.0V656.0H990.0ZM973.0 676.0L990.0 656.0H1080.0V696.0H990.0ZM973.0 716.0L990.0 696.0H1080.0V735.0H990.0ZM973.0 755.0L990.0 735.0H1080.0V775.0H990.0ZM1144.0 259.0H1233.0L1251.0 279.0L1233.0 299.0H1144.0ZM1144.0 656.0H1233.0L1251.0 676.0L1233.0 696.0H1144.0Z" fill="none" stroke="#840000" stroke-width="1.8" stroke-linejoin="miter"/><g fill="none" stroke="#840000" stroke-width="1.8"><circle cx="1417.0" cy="160.0" r="7.9"/><circle cx="1481.0" cy="160.0" r="7.9"/><circle cx="1814.0" cy="160.0" r="7.9"/><circle cx="1878.0" cy="160.0" r="7.9"/><circle cx="1417.0" cy="557.0" r="7.9"/><circle cx="1481.0" cy="557.0" r="7.9"/><circle cx="1814.0" cy="557.0" r="7.9"/><circle cx="1878.0" cy="557.0" r="7.9"/><circle cx="1417.0" cy="954.0" r="7.9"/><circle cx="1481.0" cy="954.0" r="7.9"/><circle cx="1814.0" cy="954.0" r="7.9"/><circle cx="1878.0" cy="954.0" r="7.9"/></g><path d="M1367.0 152.8L1373.0 152.8L1377.2 157.0L1377.2 163.0L1373.0 167.2L1367.0 167.2L1362.8 163.0L1362.8 157.0ZM1764.0 152.8L1770.0 152.8L1774.2 157.0L1774.2 163.0L1770.0 167.2L1764.0 167.2L1759.8 163.0L1759.8 157.0ZM1367.0 549.8L1373.0 549.8L1377.2 554.0L1377.2 560.0L1373.0 564.2L1367.0 564.2L1362.8 560.0L1362.8 554.0ZM1764.0 549.8L1770.0 549.8L1774.2 554.0L1774.2 560.0L1770.0 564.2L1764.0 564.2L1759.8 560.0L1759.8 554.0ZM1526.0 271.8L1532.0 271.8L1536.2 276.0L1536.2 282.0L1532.0 286.2L1526.0 286.2L1521.8 282.0L1521.8 276.0ZM1526.0 668.8L1532.0 668.8L1536.2 673.0L1536.2 679.0L1532.0 683.2L1526.0 683.2L1521.8 679.0L1521.8 673.0Z" fill="#009600"/><g fill="none" stroke="#b04040" stroke-width="1"><circle cx="417.0" cy="398.0" r="6"/><circle cx="417.0" cy="438.0" r="6"/><circle cx="417.0" cy="477.0" r="6"/><circle cx="417.0" cy="517.0" r="6"/><circle cx="417.0" cy="557.0" r="6"/><circle cx="417.0" cy="596.0" r="6"/><circle cx="417.0" cy="636.0" r="6"/><circle cx="417.0" cy="676.0" r="6"/><circle cx="417.0" cy="716.0" r="6"/><circle cx="417.0" cy="755.0" r="6"/><circle cx="417.0" cy="795.0" r="6"/><circle cx="417.0" cy="835.0" r="6"/><circle cx="973.0" cy="398.0" r="6"/><circle cx="973.0" cy="477.0" r="6"/><circle cx="973.0" cy="795.0" r="6"/><circle cx="973.0" cy="835.0" r="6"/></g><path d="M462.7 393.3L451.3 393.3M457.0 393.3L457.0 373.5 451.3 379.2M451.3 415.4L452.3 414.4 454.2 413.5 458.9 413.5 460.8 414.4 461.7 415.4 462.7 417.3 462.7 419.2 461.7 422.0 450.4 433.3 462.7 433.3M450.4 452.5L462.7 452.5 456.1 460.0 458.9 460.0 460.8 461.0 461.7 461.9 462.7 463.8 462.7 468.6 461.7 470.4 460.8 471.4 458.9 472.3 453.2 472.3 451.3 471.4 450.4 470.4M460.8 499.1L460.8 512.3M456.1 491.5L451.3 505.7 463.6 505.7M461.7 532.5L452.3 532.5 451.3 541.9 452.3 541.0 454.2 540.0 458.9 540.0 460.8 541.0 461.7 541.9 462.7 543.8 462.7 548.6 461.7 550.4 460.8 551.4 458.9 552.3 454.2 552.3 452.3 551.4 451.3 550.4M460.8 571.5L457.0 571.5 455.1 572.4 454.2 573.4 452.3 576.2 451.3 580.0 451.3 587.6 452.3 589.4 453.2 590.4 455.1 591.3 458.9 591.3 460.8 590.4 461.7 589.4 462.7 587.6 462.7 582.8 461.7 580.9 460.8 580.0 458.9 579.0 455.1 579.0 453.2 580.0 452.3 580.9 451.3 582.8M450.4 611.5L463.6 611.5 455.1 631.3M455.1 660.0L453.2 659.0 452.3 658.1 451.3 656.2 451.3 655.3 452.3 653.4 453.2 652.4 455.1 651.5 458.9 651.5 460.8 652.4 461.7 653.4 462.7 655.3 462.7 656.2 461.7 658.1 460.8 659.0 458.9 660.0 455.1 660.0 453.2 660.9 452.3 661.9 451.3 663.8 451.3 667.6 452.3 669.4 453.2 670.4 455.1 671.3 458.9 671.3 460.8 670.4 461.7 669.4 462.7 667.6 462.7 663.8 461.7 661.9 460.8 660.9 458.9 660.0M453.2 711.3L457.0 711.3 458.9 710.4 459.8 709.4 461.7 706.6 462.7 702.8 462.7 695.3 461.7 693.4 460.8 692.4 458.9 691.5 455.1 691.5 453.2 692.4 452.3 693.4 451.3 695.3 451.3 700.0 452.3 701.9 453.2 702.8 455.1 703.8 458.9 703.8 460.8 702.8 461.7 701.9 462.7 700.0M453.2 750.3L441.9 750.3M447.6 750.3L447.6 730.5 441.9 736.2M465.5 730.5L467.4 730.5 469.3 731.4 470.2 732.4 471.2 734.3 472.1 738.0 472.1 742.8 471.2 746.6 470.2 748.4 469.3 749.4 467.4 750.3 465.5 750.3 463.6 749.4 462.7 748.4 461.7 746.6 460.8 742.8 460.8 738.0 461.7 734.3 462.7 732.4 463.6 731.4 465.5 730.5M453.2 790.3L441.9 790.3M447.6 790.3L447.6 770.5 441.9 776.2M472.1 790.3L460.8 790.3M466.4 790.3L466.4 770.5 460.8 776.2M453.2 830.3L441.9 830.3M447.6 830.3L447.6 810.5 441.9 816.2M460.8 812.4L461.7 811.4 463.6 810.5 468.3 810.5 470.2 811.4 471.2 812.4 472.1 814.3 472.1 816.2 471.2 819.0 459.8 830.3 472.1 830.3M917.9 375.4L918.8 374.4 920.7 373.5 925.4 373.5 927.3 374.4 928.3 375.4 929.2 377.3 929.2 379.2 928.3 382.0 916.9 393.3 929.2 393.3M946.2 380.1L946.2 393.3M941.5 372.5L936.8 386.7 949.1 386.7M917.9 415.4L918.8 414.4 920.7 413.5 925.4 413.5 927.3 414.4 928.3 415.4 929.2 417.3 929.2 419.2 928.3 422.0 916.9 433.3 929.2 433.3M935.8 413.5L948.1 413.5 941.5 421.0 944.3 421.0 946.2 422.0 947.2 422.9 948.1 424.8 948.1 429.6 947.2 431.4 946.2 432.4 944.3 433.3 938.7 433.3 936.8 432.4 935.8 431.4M917.9 454.4L918.8 453.4 920.7 452.5 925.4 452.5 927.3 453.4 928.3 454.4 929.2 456.3 929.2 458.2 928.3 461.0 916.9 472.3 929.2 472.3M936.8 454.4L937.7 453.4 939.6 452.5 944.3 452.5 946.2 453.4 947.2 454.4 948.1 456.3 948.1 458.2 947.2 461.0 935.8 472.3 948.1 472.3M917.9 494.4L918.8 493.4 920.7 492.5 925.4 492.5 927.3 493.4 928.3 494.4 929.2 496.3 929.2 498.2 928.3 501.0 916.9 512.3 929.2 512.3M948.1 512.3L936.8 512.3M942.5 512.3L942.5 492.5 936.8 498.2M917.9 534.4L918.8 533.4 920.7 532.5 925.4 532.5 927.3 533.4 928.3 534.4 929.2 536.3 929.2 538.2 928.3 541.0 916.9 552.3 929.2 552.3M941.5 532.5L943.4 532.5 945.3 533.4 946.2 534.4 947.2 536.3 948.1 540.0 948.1 544.8 947.2 548.6 946.2 550.4 945.3 551.4 943.4 552.3 941.5 552.3 939.6 551.4 938.7 550.4 937.7 548.6 936.8 544.8 936.8 540.0 937.7 536.3 938.7 534.4 939.6 533.4 941.5 532.5M929.2 591.3L917.9 591.3M923.6 591.3L923.6 571.5 917.9 577.2M938.7 591.3L942.5 591.3 944.3 590.4 945.3 589.4 947.2 586.6 948.1 582.8 948.1 575.3 947.2 573.4 946.2 572.4 944.3 571.5 940.6 571.5 938.7 572.4 937.7 573.4 936.8 575.3 936.8 580.0 937.7 581.9 938.7 582.8 940.6 583.8 944.3 583.8 946.2 582.8 947.2 581.9 948.1 580.0M929.2 631.3L917.9 631.3M923.6 631.3L923.6 611.5 917.9 617.2M940.6 620.0L938.7 619.0 937.7 618.1 936.8 616.2 936.8 615.3 937.7 613.4 938.7 612.4 940.6 611.5 944.3 611.5 946.2 612.4 947.2 613.4 948.1 615.3 948.1 616.2 947.2 618.1 946.2 619.0 944.3 620.0 940.6 620.0 938.7 620.9 937.7 621.9 936.8 623.8 936.8 627.6 937.7 629.4 938.7 630.4 940.6 631.3 944.3 631.3 946.2 630.4 947.2 629.4 948.1 627.6 948.1 623.8 947.2 621.9 946.2 620.9 944.3 620.0M929.2 671.3L917.9 671.3M923.6 671.3L923.6 651.5 917.9 657.2M935.8 651.5L949.1 651.5 940.6 671.3M929.2 711.3L917.9 711.3M923.6 711.3L923.6 691.5 917.9 697.2M946.2 691.5L942.5 691.5 940.6 692.4 939.6 693.4 937.7 696.2 936.8 700.0 936.8 707.6 937.7 709.4 938.7 710.4 940.6 711.3 944.3 711.3 946.2 710.4 947.2 709.4 948.1 707.6 948.1 702.8 947.2 700.9 946.2 700.0 944.3 699.0 940.6 699.0 938.7 700.0 937.7 700.9 936.8 702.8M929.2 750.3L917.9 750.3M923.6 750.3L923.6 730.5 917.9 736.2M947.2 730.5L937.7 730.5 936.8 739.9 937.7 739.0 939.6 738.0 944.3 738.0 946.2 739.0 947.2 739.9 948.1 741.8 948.1 746.6 947.2 748.4 946.2 749.4 944.3 750.3 939.6 750.3 937.7 749.4 936.8 748.4M929.2 790.3L917.9 790.3M923.6 790.3L923.6 770.5 917.9 776.2M946.2 777.1L946.2 790.3M941.5 769.5L936.8 783.7 949.1 783.7M929.2 830.3L917.9 830.3M923.6 830.3L923.6 810.5 917.9 816.2M935.8 810.5L948.1 810.5 941.5 818.0 944.3 818.0 946.2 819.0 947.2 819.9 948.1 821.8 948.1 826.6 947.2 828.4 946.2 829.4 944.3 830.3 938.7 830.3 936.8 829.4 935.8 828.4" fill="none" stroke="#a90000" stroke-width="2" stroke-linecap="round" stroke-linejoin="round"/><path d="M514.8 387.1L526.1 387.1M520.5 406.9L520.5 387.1M530.9 387.1L544.1 406.9M544.1 387.1L530.9 406.9M555.4 387.1L557.3 387.1 559.2 388.0 560.1 389.0 561.1 390.9 562.0 394.6 562.0 399.4 561.1 403.2 560.1 405.0 559.2 406.0 557.3 406.9 555.4 406.9 553.5 406.0 552.6 405.0 551.6 403.2 550.7 399.4 550.7 394.6 551.6 390.9 552.6 389.0 553.5 388.0 555.4 387.1M568.7 411.7L584.7 386.1M591.3 406.9L591.3 387.1 598.9 387.1 600.8 388.0 601.7 389.0 602.7 390.9 602.7 393.7 601.7 395.6 600.8 396.5 598.9 397.5 591.3 397.5M611.2 406.9L611.2 387.1 615.9 387.1 618.7 388.0 620.6 389.9 621.6 391.8 622.5 395.6 622.5 398.4 621.6 402.2 620.6 404.1 618.7 406.0 615.9 406.9 611.2 406.9M629.1 387.1L641.4 387.1 634.8 394.6 637.6 394.6 639.5 395.6 640.5 396.5 641.4 398.4 641.4 403.2 640.5 405.0 639.5 406.0 637.6 406.9 632.0 406.9 630.1 406.0 629.1 405.0M529.0 446.9L522.4 437.5M517.6 446.9L517.6 427.1 525.2 427.1 527.1 428.0 528.0 429.0 529.0 430.9 529.0 433.7 528.0 435.6 527.1 436.5 525.2 437.5 517.6 437.5M535.6 427.1L548.8 446.9M548.8 427.1L535.6 446.9M566.8 446.9L555.4 446.9M561.1 446.9L561.1 427.1 555.4 432.8M573.4 451.7L589.4 426.1M596.1 446.9L596.1 427.1 603.6 427.1 605.5 428.0 606.5 429.0 607.4 430.9 607.4 433.7 606.5 435.6 605.5 436.5 603.6 437.5 596.1 437.5M615.9 446.9L615.9 427.1 620.6 427.1 623.5 428.0 625.4 429.9 626.3 431.8 627.2 435.6 627.2 438.4 626.3 442.2 625.4 444.1 623.5 446.0 620.6 446.9 615.9 446.9M634.8 429.0L635.8 428.0 637.6 427.1 642.4 427.1 644.3 428.0 645.2 429.0 646.1 430.9 646.1 432.8 645.2 435.6 633.9 446.9 646.1 446.9M528.0 467.0L526.1 466.1 523.3 466.1 520.5 467.0 518.6 468.9 517.6 470.8 516.7 474.6 516.7 477.4 517.6 481.2 518.6 483.1 520.5 485.0 523.3 485.9 525.2 485.9 528.0 485.0 529.0 484.0 529.0 477.4 525.2 477.4M537.5 485.9L537.5 466.1 548.8 485.9 548.8 466.1M558.3 485.9L558.3 466.1 563.0 466.1 565.8 467.0 567.7 468.9 568.7 470.8 569.6 474.6 569.6 477.4 568.7 481.2 567.7 483.1 565.8 485.0 563.0 485.9 558.3 485.9M528.0 507.0L526.1 506.1 523.3 506.1 520.5 507.0 518.6 508.9 517.6 510.8 516.7 514.6 516.7 517.4 517.6 521.2 518.6 523.1 520.5 525.0 523.3 525.9 525.2 525.9 528.0 525.0 529.0 524.0 529.0 517.4 525.2 517.4M537.5 525.9L537.5 506.1 548.8 525.9 548.8 506.1M558.3 525.9L558.3 506.1 563.0 506.1 565.8 507.0 567.7 508.9 568.7 510.8 569.6 514.6 569.6 517.4 568.7 521.2 567.7 523.1 565.8 525.0 563.0 525.9 558.3 525.9M516.7 548.0L517.6 547.0 519.5 546.1 524.2 546.1 526.1 547.0 527.1 548.0 528.0 549.9 528.0 551.8 527.1 554.6 515.7 565.9 528.0 565.9M534.6 570.7L550.7 545.1M557.3 565.9L557.3 546.1 564.9 546.1 566.8 547.0 567.7 548.0 568.7 549.9 568.7 552.7 567.7 554.6 566.8 555.5 564.9 556.5 557.3 556.5M577.2 565.9L577.2 546.1 581.9 546.1 584.7 547.0 586.6 548.9 587.6 550.8 588.5 554.6 588.5 557.4 587.6 561.2 586.6 563.1 584.7 565.0 581.9 565.9 577.2 565.9M607.4 565.9L596.1 565.9M601.7 565.9L601.7 546.1 596.1 551.8M515.7 585.1L528.0 585.1 521.4 592.6 524.2 592.6 526.1 593.6 527.1 594.5 528.0 596.4 528.0 601.2 527.1 603.0 526.1 604.0 524.2 604.9 518.6 604.9 516.7 604.0 515.7 603.0M534.6 609.7L550.7 584.1M557.3 604.9L557.3 585.1 564.9 585.1 566.8 586.0 567.7 587.0 568.7 588.9 568.7 591.7 567.7 593.6 566.8 594.5 564.9 595.5 557.3 595.5M577.2 604.9L577.2 585.1 581.9 585.1 584.7 586.0 586.6 587.9 587.6 589.8 588.5 593.6 588.5 596.4 587.6 600.2 586.6 602.1 584.7 604.0 581.9 604.9 577.2 604.9M600.8 585.1L602.7 585.1 604.6 586.0 605.5 587.0 606.5 588.9 607.4 592.6 607.4 597.4 606.5 601.2 605.5 603.0 604.6 604.0 602.7 604.9 600.8 604.9 598.9 604.0 597.9 603.0 597.0 601.2 596.1 597.4 596.1 592.6 597.0 588.9 597.9 587.0 598.9 586.0 600.8 585.1M526.1 631.7L526.1 644.9M521.4 624.1L516.7 638.3 529.0 638.3M534.6 649.7L550.7 624.1M557.3 644.9L557.3 625.1 564.9 625.1 566.8 626.0 567.7 627.0 568.7 628.9 568.7 631.7 567.7 633.6 566.8 634.5 564.9 635.5 557.3 635.5M577.2 644.9L577.2 625.1 581.9 625.1 584.7 626.0 586.6 627.9 587.6 629.8 588.5 633.6 588.5 636.4 587.6 640.2 586.6 642.1 584.7 644.0 581.9 644.9 577.2 644.9M605.5 631.7L605.5 644.9M600.8 624.1L596.1 638.3 608.3 638.3M527.1 665.1L517.6 665.1 516.7 674.5 517.6 673.6 519.5 672.6 524.2 672.6 526.1 673.6 527.1 674.5 528.0 676.4 528.0 681.2 527.1 683.0 526.1 684.0 524.2 684.9 519.5 684.9 517.6 684.0 516.7 683.0M534.6 689.7L550.7 664.1M557.3 684.9L557.3 665.1 564.9 665.1 566.8 666.0 567.7 667.0 568.7 668.9 568.7 671.7 567.7 673.6 566.8 674.5 564.9 675.5 557.3 675.5M588.5 683.0L587.6 684.0 584.7 684.9 582.8 684.9 580.0 684.0 578.1 682.1 577.2 680.2 576.2 676.4 576.2 673.6 577.2 669.8 578.1 667.9 580.0 666.0 582.8 665.1 584.7 665.1 587.6 666.0 588.5 667.0M605.5 665.1L601.7 665.1 599.8 666.0 598.9 667.0 597.0 669.8 596.1 673.6 596.1 681.2 597.0 683.0 597.9 684.0 599.8 684.9 603.6 684.9 605.5 684.0 606.5 683.0 607.4 681.2 607.4 676.4 606.5 674.5 605.5 673.6 603.6 672.6 599.8 672.6 597.9 673.6 597.0 674.5 596.1 676.4M526.1 705.1L522.4 705.1 520.5 706.0 519.5 707.0 517.6 709.8 516.7 713.6 516.7 721.2 517.6 723.0 518.6 724.0 520.5 724.9 524.2 724.9 526.1 724.0 527.1 723.0 528.0 721.2 528.0 716.4 527.1 714.5 526.1 713.6 524.2 712.6 520.5 712.6 518.6 713.6 517.6 714.5 516.7 716.4M534.6 729.7L550.7 704.1M557.3 724.9L557.3 705.1 564.9 705.1 566.8 706.0 567.7 707.0 568.7 708.9 568.7 711.7 567.7 713.6 566.8 714.5 564.9 715.5 557.3 715.5M577.2 724.9L577.2 705.1 581.9 705.1 584.7 706.0 586.6 707.9 587.6 709.8 588.5 713.6 588.5 716.4 587.6 720.2 586.6 722.1 584.7 724.0 581.9 724.9 577.2 724.9M595.1 705.1L608.3 705.1 599.8 724.9M515.7 744.1L529.0 744.1 520.5 763.9M534.6 768.7L550.7 743.1M557.3 763.9L557.3 744.1 564.9 744.1 566.8 745.0 567.7 746.0 568.7 747.9 568.7 750.7 567.7 752.6 566.8 753.5 564.9 754.5 557.3 754.5M577.2 753.5L583.8 753.5M586.6 763.9L577.2 763.9 577.2 744.1 586.6 744.1M603.6 744.1L599.8 744.1 597.9 745.0 597.0 746.0 595.1 748.8 594.2 752.6 594.2 760.2 595.1 762.0 596.1 763.0 597.9 763.9 601.7 763.9 603.6 763.0 604.6 762.0 605.5 760.2 605.5 755.4 604.6 753.5 603.6 752.6 601.7 751.6 597.9 751.6 596.1 752.6 595.1 753.5 594.2 755.4M520.5 792.6L518.6 791.6 517.6 790.7 516.7 788.8 516.7 787.9 517.6 786.0 518.6 785.0 520.5 784.1 524.2 784.1 526.1 785.0 527.1 786.0 528.0 787.9 528.0 788.8 527.1 790.7 526.1 791.6 524.2 792.6 520.5 792.6 518.6 793.5 517.6 794.5 516.7 796.4 516.7 800.2 517.6 802.0 518.6 803.0 520.5 803.9 524.2 803.9 526.1 803.0 527.1 802.0 528.0 800.2 528.0 796.4 527.1 794.5 526.1 793.5 524.2 792.6M534.6 808.7L550.7 783.1M557.3 803.9L557.3 784.1 564.9 784.1 566.8 785.0 567.7 786.0 568.7 787.9 568.7 790.7 567.7 792.6 566.8 793.5 564.9 794.5 557.3 794.5M583.8 793.5L586.6 794.5 587.6 795.4 588.5 797.3 588.5 800.2 587.6 802.0 586.6 803.0 584.7 803.9 577.2 803.9 577.2 784.1 583.8 784.1 585.7 785.0 586.6 786.0 587.6 787.9 587.6 789.8 586.6 791.6 585.7 792.6 583.8 793.5 577.2 793.5M605.5 790.7L605.5 803.9M600.8 783.1L596.1 797.3 608.3 797.3M518.6 843.9L522.4 843.9 524.2 843.0 525.2 842.0 527.1 839.2 528.0 835.4 528.0 827.9 527.1 826.0 526.1 825.0 524.2 824.1 520.5 824.1 518.6 825.0 517.6 826.0 516.7 827.9 516.7 832.6 517.6 834.5 518.6 835.4 520.5 836.4 524.2 836.4 526.1 835.4 527.1 834.5 528.0 832.6M534.6 848.7L550.7 823.1M557.3 843.9L557.3 824.1 564.9 824.1 566.8 825.0 567.7 826.0 568.7 827.9 568.7 830.7 567.7 832.6 566.8 833.5 564.9 834.5 557.3 834.5M583.8 833.5L586.6 834.5 587.6 835.4 588.5 837.3 588.5 840.2 587.6 842.0 586.6 843.0 584.7 843.9 577.2 843.9 577.2 824.1 583.8 824.1 585.7 825.0 586.6 826.0 587.6 827.9 587.6 829.8 586.6 831.6 585.7 832.6 583.8 833.5 577.2 833.5M606.5 824.1L597.0 824.1 596.1 833.5 597.0 832.6 598.9 831.6 603.6 831.6 605.5 832.6 606.5 833.5 607.4 835.4 607.4 840.2 606.5 842.0 605.5 843.0 603.6 843.9 598.9 843.9 597.0 843.0 596.1 842.0M833.6 406.9L827.0 397.5M822.3 406.9L822.3 387.1 829.9 387.1 831.7 388.0 832.7 389.0 833.6 390.9 833.6 393.7 832.7 395.6 831.7 396.5 829.9 397.5 822.3 397.5M841.2 401.3L850.6 401.3M839.3 406.9L845.9 387.1 852.5 406.9M857.3 387.1L862.0 406.9 865.8 392.8 869.5 406.9 874.3 387.1M831.7 428.0L829.9 427.1 827.0 427.1 824.2 428.0 822.3 429.9 821.3 431.8 820.4 435.6 820.4 438.4 821.3 442.2 822.3 444.1 824.2 446.0 827.0 446.9 828.9 446.9 831.7 446.0 832.7 445.0 832.7 438.4 828.9 438.4M841.2 446.9L841.2 427.1 852.5 446.9 852.5 427.1M862.0 446.9L862.0 427.1 866.7 427.1 869.5 428.0 871.4 429.9 872.4 431.8 873.3 435.6 873.3 438.4 872.4 442.2 871.4 444.1 869.5 446.0 866.7 446.9 862.0 446.9M839.3 485.9L832.7 476.5M828.0 485.9L828.0 466.1 835.5 466.1 837.4 467.0 838.4 468.0 839.3 469.9 839.3 472.7 838.4 474.6 837.4 475.5 835.5 476.5 828.0 476.5M846.9 485.0L849.7 485.9 854.4 485.9 856.3 485.0 857.3 484.0 858.2 482.2 858.2 480.3 857.3 478.4 856.3 477.4 854.4 476.5 850.6 475.5 848.8 474.6 847.8 473.6 846.9 471.8 846.9 469.9 847.8 468.0 848.8 467.0 850.6 466.1 855.4 466.1 858.2 467.0M863.9 466.1L875.2 466.1M869.5 485.9L869.5 466.1M822.3 506.1L828.9 525.9 835.5 506.1M853.5 524.0L852.5 525.0 849.7 525.9 847.8 525.9 845.0 525.0 843.1 523.1 842.1 521.2 841.2 517.4 841.2 514.6 842.1 510.8 843.1 508.9 845.0 507.0 847.8 506.1 849.7 506.1 852.5 507.0 853.5 508.0M873.3 524.0L872.4 525.0 869.5 525.9 867.6 525.9 864.8 525.0 862.9 523.1 862.0 521.2 861.0 517.4 861.0 514.6 862.0 510.8 862.9 508.9 864.8 507.0 867.6 506.1 869.5 506.1 872.4 507.0 873.3 508.0M768.4 560.3L777.9 560.3M766.5 565.9L773.1 546.1 779.8 565.9M784.5 546.1L796.8 546.1 790.2 553.6 793.0 553.6 794.9 554.6 795.8 555.5 796.8 557.4 796.8 562.2 795.8 564.0 794.9 565.0 793.0 565.9 787.3 565.9 785.4 565.0 784.5 564.0M803.4 570.7L819.5 545.1M826.1 565.9L826.1 546.1 833.6 546.1 835.5 547.0 836.5 548.0 837.4 549.9 837.4 552.7 836.5 554.6 835.5 555.5 833.6 556.5 826.1 556.5M852.5 555.5L845.9 555.5M845.9 565.9L845.9 546.1 855.4 546.1M871.4 552.7L871.4 565.9M866.7 545.1L862.0 559.3 874.3 559.3M768.4 599.3L777.9 599.3M766.5 604.9L773.1 585.1 779.8 604.9M785.4 587.0L786.4 586.0 788.3 585.1 793.0 585.1 794.9 586.0 795.8 587.0 796.8 588.9 796.8 590.8 795.8 593.6 784.5 604.9 796.8 604.9M803.4 609.7L819.5 584.1M826.1 604.9L826.1 585.1 833.6 585.1 835.5 586.0 836.5 587.0 837.4 588.9 837.4 591.7 836.5 593.6 835.5 594.5 833.6 595.5 826.1 595.5M852.5 594.5L845.9 594.5M845.9 604.9L845.9 585.1 855.4 585.1M872.4 585.1L862.9 585.1 862.0 594.5 862.9 593.6 864.8 592.6 869.5 592.6 871.4 593.6 872.4 594.5 873.3 596.4 873.3 601.2 872.4 603.0 871.4 604.0 869.5 604.9 864.8 604.9 862.9 604.0 862.0 603.0M768.4 639.3L777.9 639.3M766.5 644.9L773.1 625.1 779.8 644.9M796.8 644.9L785.4 644.9M791.1 644.9L791.1 625.1 785.4 630.8M803.4 649.7L819.5 624.1M826.1 644.9L826.1 625.1 833.6 625.1 835.5 626.0 836.5 627.0 837.4 628.9 837.4 631.7 836.5 633.6 835.5 634.5 833.6 635.5 826.1 635.5M852.5 634.5L845.9 634.5M845.9 644.9L845.9 625.1 855.4 625.1M871.4 625.1L867.6 625.1 865.8 626.0 864.8 627.0 862.9 629.8 862.0 633.6 862.0 641.2 862.9 643.0 863.9 644.0 865.8 644.9 869.5 644.9 871.4 644.0 872.4 643.0 873.3 641.2 873.3 636.4 872.4 634.5 871.4 633.6 869.5 632.6 865.8 632.6 863.9 633.6 862.9 634.5 862.0 636.4M768.4 679.3L777.9 679.3M766.5 684.9L773.1 665.1 779.8 684.9M790.2 665.1L792.0 665.1 793.9 666.0 794.9 667.0 795.8 668.9 796.8 672.6 796.8 677.4 795.8 681.2 794.9 683.0 793.9 684.0 792.0 684.9 790.2 684.9 788.3 684.0 787.3 683.0 786.4 681.2 785.4 677.4 785.4 672.6 786.4 668.9 787.3 667.0 788.3 666.0 790.2 665.1M803.4 689.7L819.5 664.1M826.1 684.9L826.1 665.1 833.6 665.1 835.5 666.0 836.5 667.0 837.4 668.9 837.4 671.7 836.5 673.6 835.5 674.5 833.6 675.5 826.1 675.5M852.5 674.5L845.9 674.5M845.9 684.9L845.9 665.1 855.4 665.1M861.0 665.1L874.3 665.1 865.8 684.9M775.0 724.9L763.7 724.9M769.4 724.9L769.4 705.1 763.7 710.8M793.0 705.1L783.5 705.1 782.6 714.5 783.5 713.6 785.4 712.6 790.2 712.6 792.1 713.6 793.0 714.5 793.9 716.4 793.9 721.2 793.0 723.0 792.1 724.0 790.2 724.9 785.4 724.9 783.5 724.0 782.6 723.0M800.6 729.7L816.6 704.1M823.2 724.9L823.2 705.1 830.8 705.1 832.7 706.0 833.6 707.0 834.6 708.9 834.6 711.7 833.6 713.6 832.7 714.5 830.8 715.5 823.2 715.5M849.7 714.5L852.5 715.5 853.5 716.4 854.4 718.3 854.4 721.2 853.5 723.0 852.5 724.0 850.6 724.9 843.1 724.9 843.1 705.1 849.7 705.1 851.6 706.0 852.5 707.0 853.5 708.9 853.5 710.8 852.5 712.6 851.6 713.6 849.7 714.5 843.1 714.5M873.3 724.9L862.0 724.9M867.7 724.9L867.7 705.1 862.0 710.8M775.0 763.9L763.7 763.9M769.4 763.9L769.4 744.1 763.7 749.8M792.1 750.7L792.1 763.9M787.3 743.1L782.6 757.3 794.9 757.3M800.6 768.7L816.6 743.1M823.2 763.9L823.2 744.1 830.8 744.1 832.7 745.0 833.6 746.0 834.6 747.9 834.6 750.7 833.6 752.6 832.7 753.5 830.8 754.5 823.2 754.5M849.7 753.5L852.5 754.5 853.5 755.4 854.4 757.3 854.4 760.2 853.5 762.0 852.5 763.0 850.6 763.9 843.1 763.9 843.1 744.1 849.7 744.1 851.6 745.0 852.5 746.0 853.5 747.9 853.5 749.8 852.5 751.6 851.6 752.6 849.7 753.5 843.1 753.5M861.0 744.1L873.3 744.1 866.7 751.6 869.5 751.6 871.4 752.6 872.4 753.5 873.3 755.4 873.3 760.2 872.4 762.0 871.4 763.0 869.5 763.9 863.9 763.9 862.0 763.0 861.0 762.0M775.0 803.9L763.7 803.9M769.4 803.9L769.4 784.1 763.7 789.8M792.1 784.1L788.3 784.1 786.4 785.0 785.4 786.0 783.5 788.8 782.6 792.6 782.6 800.2 783.5 802.0 784.5 803.0 786.4 803.9 790.2 803.9 792.1 803.0 793.0 802.0 793.9 800.2 793.9 795.4 793.0 793.5 792.1 792.6 790.2 791.6 786.4 791.6 784.5 792.6 783.5 793.5 782.6 795.4M800.6 808.7L816.6 783.1M823.2 803.9L823.2 784.1 830.8 784.1 832.7 785.0 833.6 786.0 834.6 787.9 834.6 790.7 833.6 792.6 832.7 793.5 830.8 794.5 823.2 794.5M849.7 793.5L852.5 794.5 853.5 795.4 854.4 797.3 854.4 800.2 853.5 802.0 852.5 803.0 850.6 803.9 843.1 803.9 843.1 784.1 849.7 784.1 851.6 785.0 852.5 786.0 853.5 787.9 853.5 789.8 852.5 791.6 851.6 792.6 849.7 793.5 843.1 793.5M862.0 786.0L862.9 785.0 864.8 784.1 869.5 784.1 871.4 785.0 872.4 786.0 873.3 787.9 873.3 789.8 872.4 792.6 861.0 803.9 873.3 803.9M775.0 843.9L763.7 843.9M769.4 843.9L769.4 824.1 763.7 829.8M787.3 824.1L789.2 824.1 791.1 825.0 792.1 826.0 793.0 827.9 793.9 831.6 793.9 836.4 793.0 840.2 792.1 842.0 791.1 843.0 789.2 843.9 787.3 843.9 785.4 843.0 784.5 842.0 783.5 840.2 782.6 836.4 782.6 831.6 783.5 827.9 784.5 826.0 785.4 825.0 787.3 824.1M800.6 848.7L816.6 823.1M823.2 843.9L823.2 824.1 830.8 824.1 832.7 825.0 833.6 826.0 834.6 827.9 834.6 830.7 833.6 832.6 832.7 833.5 830.8 834.5 823.2 834.5M849.7 833.5L852.5 834.5 853.5 835.4 854.4 837.3 854.4 840.2 853.5 842.0 852.5 843.0 850.6 843.9 843.1 843.9 843.1 824.1 849.7 824.1 851.6 825.0 852.5 826.0 853.5 827.9 853.5 829.8 852.5 831.6 851.6 832.6 849.7 833.5 843.1 833.5M871.4 824.1L867.7 824.1 865.8 825.0 864.8 826.0 862.9 828.8 862.0 832.6 862.0 840.2 862.9 842.0 863.9 843.0 865.8 843.9 869.5 843.9 871.4 843.0 872.4 842.0 873.3 840.2 873.3 835.4 872.4 833.5 871.4 832.6 869.5 831.6 865.8 831.6 863.9 832.6 862.9 833.5 862.0 835.4M651.3 289.2L651.3 265.4 659.3 282.4 667.2 265.4 667.2 289.2M692.2 286.9L691.0 288.1 687.6 289.2 685.4 289.2 682.0 288.1 679.7 285.8 678.6 283.5 677.4 279.0 677.4 275.6 678.6 271.1 679.7 268.8 682.0 266.5 685.4 265.4 687.6 265.4 691.0 266.5 692.2 267.7M702.4 265.4L702.4 284.7 703.5 286.9 704.6 288.1 706.9 289.2 711.4 289.2 713.7 288.1 714.8 286.9 716.0 284.7 716.0 265.4M739.8 289.2L726.2 289.2M733.0 289.2L733.0 265.4 726.2 272.2M623.0 347.9L623.0 324.1 632.1 324.1 634.3 325.2 635.5 326.4 636.6 328.6 636.6 332.0 635.5 334.3 634.3 335.4 632.1 336.6 623.0 336.6M646.8 347.9L646.8 332.0M646.8 336.6L647.9 334.3 649.1 333.2 651.3 332.0 653.6 332.0M664.9 347.9L662.7 346.8 661.5 345.6 660.4 343.4 660.4 336.6 661.5 334.3 662.7 333.2 664.9 332.0 668.4 332.0 670.6 333.2 671.8 334.3 672.9 336.6 672.9 343.4 671.8 345.6 670.6 346.8 668.4 347.9 664.9 347.9M683.1 347.9L683.1 324.1 691.0 341.1 699.0 324.1 699.0 347.9M710.3 347.9L710.3 332.0M710.3 324.1L709.2 325.2 710.3 326.4 711.4 325.2 710.3 324.1 710.3 326.4M731.9 346.8L729.6 347.9 725.1 347.9 722.8 346.8 721.6 345.6 720.5 343.4 720.5 336.6 721.6 334.3 722.8 333.2 725.1 332.0 729.6 332.0 731.9 333.2M742.1 347.9L742.1 332.0M742.1 336.6L743.2 334.3 744.3 333.2 746.6 332.0 748.9 332.0M760.2 347.9L757.9 346.8 756.8 345.6 755.7 343.4 755.7 336.6 756.8 334.3 757.9 333.2 760.2 332.0 763.6 332.0 765.9 333.2 767.0 334.3 768.1 336.6 768.1 343.4 767.0 345.6 765.9 346.8 763.6 347.9 760.2 347.9M1036.9 507.0L1035.0 506.1 1032.2 506.1 1029.3 507.0 1027.4 508.9 1026.5 510.8 1025.5 514.6 1025.5 517.4 1026.5 521.2 1027.4 523.1 1029.3 525.0 1032.2 525.9 1034.0 525.9 1036.9 525.0 1037.8 524.0 1037.8 517.4 1034.0 517.4M1046.3 525.9L1046.3 506.1 1057.7 525.9 1057.7 506.1M1067.1 525.9L1067.1 506.1 1071.8 506.1 1074.7 507.0 1076.6 508.9 1077.5 510.8 1078.5 514.6 1078.5 517.4 1077.5 521.2 1076.6 523.1 1074.7 525.0 1071.8 525.9 1067.1 525.9M1085.5 427.1L1092.2 446.9 1098.8 427.1M1116.7 445.0L1115.8 446.0 1112.9 446.9 1111.1 446.9 1108.2 446.0 1106.3 444.1 1105.4 442.2 1104.4 438.4 1104.4 435.6 1105.4 431.8 1106.3 429.9 1108.2 428.0 1111.1 427.1 1112.9 427.1 1115.8 428.0 1116.7 429.0M1136.6 445.0L1135.6 446.0 1132.8 446.9 1130.9 446.9 1128.1 446.0 1126.2 444.1 1125.2 442.2 1124.3 438.4 1124.3 435.6 1125.2 431.8 1126.2 429.9 1128.1 428.0 1130.9 427.1 1132.8 427.1 1135.6 428.0 1136.6 429.0M1422.5 446.0L1425.4 446.9 1430.1 446.9 1432.0 446.0 1432.9 445.0 1433.9 443.2 1433.9 441.3 1432.9 439.4 1432.0 438.4 1430.1 437.5 1426.3 436.5 1424.4 435.6 1423.5 434.6 1422.5 432.8 1422.5 430.9 1423.5 429.0 1424.4 428.0 1426.3 427.1 1431.0 427.1 1433.9 428.0M1440.5 427.1L1445.2 446.9 1449.0 432.8 1452.8 446.9 1457.5 427.1M1473.6 433.7L1473.6 446.9M1468.8 426.1L1464.1 440.3 1476.4 440.3M1388.5 485.0L1391.4 485.9 1396.1 485.9 1398.0 485.0 1398.9 484.0 1399.9 482.2 1399.9 480.3 1398.9 478.4 1398.0 477.4 1396.1 476.5 1392.3 475.5 1390.4 474.6 1389.5 473.6 1388.5 471.8 1388.5 469.9 1389.5 468.0 1390.4 467.0 1392.3 466.1 1397.0 466.1 1399.9 467.0M1406.5 466.1L1411.2 485.9 1415.0 471.8 1418.8 485.9 1423.5 466.1M1426.3 487.8L1441.4 487.8M1446.2 485.9L1446.2 466.1 1453.7 466.1 1455.6 467.0 1456.6 468.0 1457.5 469.9 1457.5 472.7 1456.6 474.6 1455.6 475.5 1453.7 476.5 1446.2 476.5M1474.5 472.7L1474.5 485.9M1466.0 472.7L1466.0 483.1 1467.0 485.0 1468.8 485.9 1471.7 485.9 1473.6 485.0 1474.5 484.0M1483.0 485.0L1484.9 485.9 1488.7 485.9 1490.6 485.0 1491.5 483.1 1491.5 482.2 1490.6 480.3 1488.7 479.3 1485.9 479.3 1484.0 478.4 1483.0 476.5 1483.0 475.5 1484.0 473.6 1485.9 472.7 1488.7 472.7 1490.6 473.6M1500.0 485.9L1500.0 466.1M1508.5 485.9L1508.5 475.5 1507.6 473.6 1505.7 472.7 1502.9 472.7 1501.0 473.6 1500.0 474.6M1819.5 446.0L1822.4 446.9 1827.1 446.9 1829.0 446.0 1829.9 445.0 1830.9 443.2 1830.9 441.3 1829.9 439.4 1829.0 438.4 1827.1 437.5 1823.3 436.5 1821.4 435.6 1820.5 434.6 1819.5 432.8 1819.5 430.9 1820.5 429.0 1821.4 428.0 1823.3 427.1 1828.0 427.1 1830.9 428.0M1837.5 427.1L1842.2 446.9 1846.0 432.8 1849.8 446.9 1854.5 427.1M1871.5 427.1L1862.1 427.1 1861.1 436.5 1862.1 435.6 1864.0 434.6 1868.7 434.6 1870.6 435.6 1871.5 436.5 1872.5 438.4 1872.5 443.2 1871.5 445.0 1870.6 446.0 1868.7 446.9 1864.0 446.9 1862.1 446.0 1861.1 445.0M1785.5 485.0L1788.4 485.9 1793.1 485.9 1795.0 485.0 1795.9 484.0 1796.9 482.2 1796.9 480.3 1795.9 478.4 1795.0 477.4 1793.1 476.5 1789.3 475.5 1787.4 474.6 1786.5 473.6 1785.5 471.8 1785.5 469.9 1786.5 468.0 1787.4 467.0 1789.3 466.1 1794.0 466.1 1796.9 467.0M1803.5 466.1L1808.2 485.9 1812.0 471.8 1815.8 485.9 1820.5 466.1M1823.3 487.8L1838.4 487.8M1843.2 485.9L1843.2 466.1 1850.7 466.1 1852.6 467.0 1853.6 468.0 1854.5 469.9 1854.5 472.7 1853.6 474.6 1852.6 475.5 1850.7 476.5 1843.2 476.5M1871.5 472.7L1871.5 485.9M1863.0 472.7L1863.0 483.1 1864.0 485.0 1865.8 485.9 1868.7 485.9 1870.6 485.0 1871.5 484.0M1880.0 485.0L1881.9 485.9 1885.7 485.9 1887.6 485.0 1888.5 483.1 1888.5 482.2 1887.6 480.3 1885.7 479.3 1882.9 479.3 1881.0 478.4 1880.0 476.5 1880.0 475.5 1881.0 473.6 1882.9 472.7 1885.7 472.7 1887.6 473.6M1897.0 485.9L1897.0 466.1M1905.5 485.9L1905.5 475.5 1904.6 473.6 1902.7 472.7 1899.9 472.7 1898.0 473.6 1897.0 474.6M1422.5 843.0L1425.4 843.9 1430.1 843.9 1432.0 843.0 1432.9 842.0 1433.9 840.2 1433.9 838.3 1432.9 836.4 1432.0 835.4 1430.1 834.5 1426.3 833.5 1424.4 832.6 1423.5 831.6 1422.5 829.8 1422.5 827.9 1423.5 826.0 1424.4 825.0 1426.3 824.1 1431.0 824.1 1433.9 825.0M1440.5 824.1L1445.2 843.9 1449.0 829.8 1452.8 843.9 1457.5 824.1M1463.2 824.1L1476.4 824.1 1467.9 843.9M1388.5 882.0L1391.4 882.9 1396.1 882.9 1398.0 882.0 1398.9 881.0 1399.9 879.2 1399.9 877.3 1398.9 875.4 1398.0 874.4 1396.1 873.5 1392.3 872.5 1390.4 871.6 1389.5 870.6 1388.5 868.8 1388.5 866.9 1389.5 865.0 1390.4 864.0 1392.3 863.1 1397.0 863.1 1399.9 864.0M1406.5 863.1L1411.2 882.9 1415.0 868.8 1418.8 882.9 1423.5 863.1M1426.3 884.8L1441.4 884.8M1446.2 882.9L1446.2 863.1 1453.7 863.1 1455.6 864.0 1456.6 865.0 1457.5 866.9 1457.5 869.7 1456.6 871.6 1455.6 872.5 1453.7 873.5 1446.2 873.5M1474.5 869.7L1474.5 882.9M1466.0 869.7L1466.0 880.1 1467.0 882.0 1468.8 882.9 1471.7 882.9 1473.6 882.0 1474.5 881.0M1483.0 882.0L1484.9 882.9 1488.7 882.9 1490.6 882.0 1491.5 880.1 1491.5 879.2 1490.6 877.3 1488.7 876.3 1485.9 876.3 1484.0 875.4 1483.0 873.5 1483.0 872.5 1484.0 870.6 1485.9 869.7 1488.7 869.7 1490.6 870.6M1500.0 882.9L1500.0 863.1M1508.5 882.9L1508.5 872.5 1507.6 870.6 1505.7 869.7 1502.9 869.7 1501.0 870.6 1500.0 871.6M1819.5 843.0L1822.4 843.9 1827.1 843.9 1829.0 843.0 1829.9 842.0 1830.9 840.2 1830.9 838.3 1829.9 836.4 1829.0 835.4 1827.1 834.5 1823.3 833.5 1821.4 832.6 1820.5 831.6 1819.5 829.8 1819.5 827.9 1820.5 826.0 1821.4 825.0 1823.3 824.1 1828.0 824.1 1830.9 825.0M1837.5 824.1L1842.2 843.9 1846.0 829.8 1849.8 843.9 1854.5 824.1M1864.9 832.6L1863.0 831.6 1862.1 830.7 1861.1 828.8 1861.1 827.9 1862.1 826.0 1863.0 825.0 1864.9 824.1 1868.7 824.1 1870.6 825.0 1871.5 826.0 1872.5 827.9 1872.5 828.8 1871.5 830.7 1870.6 831.6 1868.7 832.6 1864.9 832.6 1863.0 833.5 1862.1 834.5 1861.1 836.4 1861.1 840.2 1862.1 842.0 1863.0 843.0 1864.9 843.9 1868.7 843.9 1870.6 843.0 1871.5 842.0 1872.5 840.2 1872.5 836.4 1871.5 834.5 1870.6 833.5 1868.7 832.6M1785.5 882.0L1788.4 882.9 1793.1 882.9 1795.0 882.0 1795.9 881.0 1796.9 879.2 1796.9 877.3 1795.9 875.4 1795.0 874.4 1793.1 873.5 1789.3 872.5 1787.4 871.6 1786.5 870.6 1785.5 868.8 1785.5 866.9 1786.5 865.0 1787.4 864.0 1789.3 863.1 1794.0 863.1 1796.9 864.0M1803.5 863.1L1808.2 882.9 1812.0 868.8 1815.8 882.9 1820.5 863.1M1823.3 884.8L1838.4 884.8M1843.2 882.9L1843.2 863.1 1850.7 863.1 1852.6 864.0 1853.6 865.0 1854.5 866.9 1854.5 869.7 1853.6 871.6 1852.6 872.5 1850.7 873.5 1843.2 873.5M1871.5 869.7L1871.5 882.9M1863.0 869.7L1863.0 880.1 1864.0 882.0 1865.8 882.9 1868.7 882.9 1870.6 882.0 1871.5 881.0M1880.0 882.0L1881.9 882.9 1885.7 882.9 1887.6 882.0 1888.5 880.1 1888.5 879.2 1887.6 877.3 1885.7 876.3 1882.9 876.3 1881.0 875.4 1880.0 873.5 1880.0 872.5 1881.0 870.6 1882.9 869.7 1885.7 869.7 1887.6 870.6M1897.0 882.9L1897.0 863.1M1905.5 882.9L1905.5 872.5 1904.6 870.6 1902.7 869.7 1899.9 869.7 1898.0 870.6 1897.0 871.6M1572.7 208.9L1572.7 189.1 1577.5 189.1 1580.3 190.0 1582.2 191.9 1583.1 193.8 1584.1 197.6 1584.1 200.4 1583.1 204.2 1582.2 206.1 1580.3 208.0 1577.5 208.9 1572.7 208.9M1603.0 208.9L1591.6 208.9M1597.3 208.9L1597.3 189.1 1591.6 194.8M1572.7 247.9L1572.7 228.1 1577.5 228.1 1580.3 229.0 1582.2 230.9 1583.1 232.8 1584.1 236.6 1584.1 239.4 1583.1 243.2 1582.2 245.1 1580.3 247.0 1577.5 247.9 1572.7 247.9M1572.7 604.9L1572.7 585.1 1577.5 585.1 1580.3 586.0 1582.2 587.9 1583.1 589.8 1584.1 593.6 1584.1 596.4 1583.1 600.2 1582.2 602.1 1580.3 604.0 1577.5 604.9 1572.7 604.9M1601.1 591.7L1601.1 604.9M1596.4 584.1L1591.6 598.3 1603.9 598.3M1572.7 644.9L1572.7 625.1 1577.5 625.1 1580.3 626.0 1582.2 627.9 1583.1 629.8 1584.1 633.6 1584.1 636.4 1583.1 640.2 1582.2 642.1 1580.3 644.0 1577.5 644.9 1572.7 644.9" fill="none" stroke="#006464" stroke-width="2" stroke-linecap="round" stroke-linejoin="round"/><path d="M1008.8 565.0L1006.9 565.9 1003.2 565.9 1001.3 565.0 1000.3 564.0 999.4 562.2 999.4 556.5 1000.3 554.6 1001.3 553.6 1003.2 552.7 1006.9 552.7 1008.8 553.6M1020.2 565.9L1018.3 565.0 1017.3 564.0 1016.4 562.2 1016.4 556.5 1017.3 554.6 1018.3 553.6 1020.2 552.7 1023.0 552.7 1024.9 553.6 1025.8 554.6 1026.8 556.5 1026.8 562.2 1025.8 564.0 1024.9 565.0 1023.0 565.9 1020.2 565.9M1040.0 565.9L1038.1 565.9 1036.2 565.0 1035.3 563.1 1035.3 546.1M1051.4 546.1L1053.2 546.1 1055.1 547.0 1056.1 548.0 1057.0 549.9 1058.0 553.6 1058.0 558.4 1057.0 562.2 1056.1 564.0 1055.1 565.0 1053.2 565.9 1051.4 565.9 1049.5 565.0 1048.5 564.0 1047.6 562.2 1046.6 558.4 1046.6 553.6 1047.6 549.9 1048.5 548.0 1049.5 547.0 1051.4 546.1M1008.8 604.0L1006.9 604.9 1003.2 604.9 1001.3 604.0 1000.3 603.0 999.4 601.2 999.4 595.5 1000.3 593.6 1001.3 592.6 1003.2 591.7 1006.9 591.7 1008.8 592.6M1020.2 604.9L1018.3 604.0 1017.3 603.0 1016.4 601.2 1016.4 595.5 1017.3 593.6 1018.3 592.6 1020.2 591.7 1023.0 591.7 1024.9 592.6 1025.8 593.6 1026.8 595.5 1026.8 601.2 1025.8 603.0 1024.9 604.0 1023.0 604.9 1020.2 604.9M1040.0 604.9L1038.1 604.9 1036.2 604.0 1035.3 602.1 1035.3 585.1M1058.0 604.9L1046.6 604.9M1052.3 604.9L1052.3 585.1 1046.6 590.8M1008.8 644.0L1006.9 644.9 1003.2 644.9 1001.3 644.0 1000.3 643.0 999.4 641.2 999.4 635.5 1000.3 633.6 1001.3 632.6 1003.2 631.7 1006.9 631.7 1008.8 632.6M1020.2 644.9L1018.3 644.0 1017.3 643.0 1016.4 641.2 1016.4 635.5 1017.3 633.6 1018.3 632.6 1020.2 631.7 1023.0 631.7 1024.9 632.6 1025.8 633.6 1026.8 635.5 1026.8 641.2 1025.8 643.0 1024.9 644.0 1023.0 644.9 1020.2 644.9M1040.0 644.9L1038.1 644.9 1036.2 644.0 1035.3 642.1 1035.3 625.1M1046.6 627.0L1047.6 626.0 1049.5 625.1 1054.2 625.1 1056.1 626.0 1057.0 627.0 1058.0 628.9 1058.0 630.8 1057.0 633.6 1045.7 644.9 1058.0 644.9M1000.3 684.9L1000.3 671.7M1000.3 675.5L1001.3 673.6 1002.2 672.6 1004.1 671.7 1006.0 671.7M1015.4 684.9L1013.6 684.0 1012.6 683.0 1011.7 681.2 1011.7 675.5 1012.6 673.6 1013.6 672.6 1015.4 671.7 1018.3 671.7 1020.2 672.6 1021.1 673.6 1022.1 675.5 1022.1 681.2 1021.1 683.0 1020.2 684.0 1018.3 684.9 1015.4 684.9M1028.7 671.7L1032.5 684.9 1036.2 674.5 1040.0 684.9 1043.8 671.7M1055.1 665.1L1057.0 665.1 1058.9 666.0 1059.9 667.0 1060.8 668.9 1061.7 672.6 1061.7 677.4 1060.8 681.2 1059.9 683.0 1058.9 684.0 1057.0 684.9 1055.1 684.9 1053.2 684.0 1052.3 683.0 1051.4 681.2 1050.4 677.4 1050.4 672.6 1051.4 668.9 1052.3 667.0 1053.2 666.0 1055.1 665.1M1000.3 724.9L1000.3 711.7M1000.3 715.5L1001.3 713.6 1002.2 712.6 1004.1 711.7 1006.0 711.7M1015.4 724.9L1013.6 724.0 1012.6 723.0 1011.7 721.2 1011.7 715.5 1012.6 713.6 1013.6 712.6 1015.4 711.7 1018.3 711.7 1020.2 712.6 1021.1 713.6 1022.1 715.5 1022.1 721.2 1021.1 723.0 1020.2 724.0 1018.3 724.9 1015.4 724.9M1028.7 711.7L1032.5 724.9 1036.2 714.5 1040.0 724.9 1043.8 711.7M1061.7 724.9L1050.4 724.9M1056.1 724.9L1056.1 705.1 1050.4 710.8M1000.3 763.9L1000.3 750.7M1000.3 754.5L1001.3 752.6 1002.2 751.6 1004.1 750.7 1006.0 750.7M1015.4 763.9L1013.6 763.0 1012.6 762.0 1011.7 760.2 1011.7 754.5 1012.6 752.6 1013.6 751.6 1015.4 750.7 1018.3 750.7 1020.2 751.6 1021.1 752.6 1022.1 754.5 1022.1 760.2 1021.1 762.0 1020.2 763.0 1018.3 763.9 1015.4 763.9M1028.7 750.7L1032.5 763.9 1036.2 753.5 1040.0 763.9 1043.8 750.7M1050.4 746.0L1051.4 745.0 1053.2 744.1 1058.0 744.1 1059.9 745.0 1060.8 746.0 1061.7 747.9 1061.7 749.8 1060.8 752.6 1049.5 763.9 1061.7 763.9M1162.0 287.9L1162.0 274.7M1162.0 278.5L1163.0 276.6 1163.9 275.6 1165.8 274.7 1167.7 274.7M1177.1 287.9L1175.3 287.0 1174.3 286.0 1173.4 284.2 1173.4 278.5 1174.3 276.6 1175.3 275.6 1177.1 274.7 1180.0 274.7 1181.9 275.6 1182.8 276.6 1183.8 278.5 1183.8 284.2 1182.8 286.0 1181.9 287.0 1180.0 287.9 1177.1 287.9M1190.4 274.7L1194.2 287.9 1197.9 277.5 1201.7 287.9 1205.5 274.7M1216.8 268.1L1218.7 268.1 1220.6 269.0 1221.6 270.0 1222.5 271.9 1223.4 275.6 1223.4 280.4 1222.5 284.2 1221.6 286.0 1220.6 287.0 1218.7 287.9 1216.8 287.9 1214.9 287.0 1214.0 286.0 1213.1 284.2 1212.1 280.4 1212.1 275.6 1213.1 271.9 1214.0 270.0 1214.9 269.0 1216.8 268.1M1162.0 684.9L1162.0 671.7M1162.0 675.5L1163.0 673.6 1163.9 672.6 1165.8 671.7 1167.7 671.7M1177.1 684.9L1175.3 684.0 1174.3 683.0 1173.4 681.2 1173.4 675.5 1174.3 673.6 1175.3 672.6 1177.1 671.7 1180.0 671.7 1181.9 672.6 1182.8 673.6 1183.8 675.5 1183.8 681.2 1182.8 683.0 1181.9 684.0 1180.0 684.9 1177.1 684.9M1190.4 671.7L1194.2 684.9 1197.9 674.5 1201.7 684.9 1205.5 671.7M1223.4 684.9L1212.1 684.9M1217.8 684.9L1217.8 665.1 1212.1 670.8" fill="none" stroke="#840000" stroke-width="2" stroke-linecap="round" stroke-linejoin="round"/><path d="M734 656.5H815M774.5 616V696" stroke="#000" stroke-width="1"/></g></svg><div class="a" style="left:609px;top:981px;width:191px;height:8px;border-radius:4px;background:#7d7d7d"></div><div class="a" style="left:1875px;top:408px;width:8px;height:40px;border-radius:4px;background:#7d7d7d"></div><div class="a" style="left:3px;top:102px;width:30px;height:30px;background:#c9e8ee;border:1px solid #41b4c4"></div><svg style="position:absolute;left:7px;top:106px" width="22" height="22" viewBox="0 0 22 22"><g fill="#545454"><circle cx="1.1" cy="1" r="1.7"/><circle cx="1.1" cy="7.7" r="1.7"/><circle cx="1.1" cy="14.3" r="1.7"/><circle cx="1.1" cy="21" r="1.7"/><circle cx="7.4" cy="1" r="1.7"/><circle cx="7.4" cy="7.7" r="1.7"/><circle cx="7.4" cy="14.3" r="1.7"/><circle cx="7.4" cy="21" r="1.7"/><circle cx="14.4" cy="1" r="1.7"/><circle cx="14.4" cy="7.7" r="1.7"/><circle cx="14.4" cy="14.3" r="1.7"/><circle cx="14.4" cy="21" r="1.7"/><circle cx="21" cy="1" r="1.7"/><circle cx="21" cy="7.7" r="1.7"/><circle cx="21" cy="14.3" r="1.7"/><circle cx="21" cy="21" r="1.7"/></g></svg><svg style="position:absolute;left:7px;top:138px" width="22" height="22" viewBox="0 0 22 22"><text x="10.6" y="11.9" font-family="Liberation Sans" font-weight="bold" font-size="12" fill="#545454" text-anchor="middle">in</text><path d="M3 16H19" stroke="#545454" stroke-width="1.8"/><path d="M0.5 16L5 12.8V19.2ZM21.5 16L17 12.8V19.2Z" fill="#545454"/></svg><svg style="position:absolute;left:7px;top:170px" width="22" height="22" viewBox="0 0 22 22"><text x="10.9" y="11.6" font-family="Liberation Sans" font-weight="bold" font-size="12" fill="#545454" text-anchor="middle">mil</text><path d="M3 16H19" stroke="#545454" stroke-width="1.8"/><path d="M0.5 16L5 12.8V19.2ZM21.5 16L17 12.8V19.2Z" fill="#545454"/></svg><div class="a" style="left:3px;top:198px;width:30px;height:30px;background:#c9e8ee;border:1px solid #41b4c4"></div><svg style="position:absolute;left:7px;top:202px" width="22" height="22" viewBox="0 0 22 22"><text x="11.2" y="11.7" font-family="Liberation Sans" font-weight="bold" font-size="12" fill="#545454" text-anchor="middle">mm</text><path d="M3 16H19" stroke="#545454" stroke-width="1.8"/><path d="M0.5 16L5 12.8V19.2ZM21.5 16L17 12.8V19.2Z" fill="#545454"/></svg><svg style="position:absolute;left:7px;top:234px" width="22" height="22" viewBox="0 0 22 22"><path d="M11.3 -1V22.5M-0.8 11.3H22.7" stroke="#9a9a9a" stroke-width="0.8"/><path d="M11.3 6.8V15.8M6.8 11.3H15.8" stroke="#1a81c4" stroke-width="3.4" stroke-linecap="round"/><path d="M11.5 11.5V21L13.6 19L15.4 22.3L17 21.5L15.3 18.3H18.4Z" fill="#545454"/></svg><svg style="position:absolute;left:7px;top:266px" width="22" height="22" viewBox="0 0 22 22"><path d="M2.3 -1V22.6L19.6 10.8Z" fill="none" stroke="#545454" stroke-width="1.6" stroke-linejoin="miter"/><path d="M-1 5H2.3M-1 16.4H2.3M19.6 10.8H22.7M4.5 7.2H8M4.5 13.8H8.5M6.5 11.8V15.8" stroke="#545454" stroke-width="1.4"/><path d="M10.9 0.3V4.5M10.9 16.5V22" stroke="#c8243c" stroke-width="1.8"/></svg><div class="a" style="left:3px;top:294px;width:30px;height:30px;background:#c9e8ee;border:1px solid #41b4c4"></div><svg style="position:absolute;left:7px;top:298px" width="22" height="22" viewBox="0 0 22 22"><path d="M2.3 0.5V22M0.2 18.8H22.1" stroke="#545454" stroke-width="1.6"/><path d="M2.3 11.6H10.9V18.8" fill="none" stroke="#545454" stroke-width="1.3"/></svg><div class="a" style="left:1889px;top:102px;width:30px;height:30px;background:#c9e8ee;border:1px solid #41b4c4"></div><svg style="position:absolute;left:1893px;top:106px" width="23" height="22" viewBox="0 0 23 22"><path d="M6.2 3.2V17.8L9.6 14.6L12.4 20.2L14.6 19.2L12 13.8H16.6Z" fill="#545454" stroke="#545454" stroke-width="0.6" stroke-linejoin="round"/></svg><svg style="position:absolute;left:1893px;top:138px" width="23" height="22" viewBox="0 0 23 22"><path d="M-0.6 2.6H4.5V14.7H8" fill="none" stroke="#545454" stroke-width="1.7"/><path d="M-1 19.9H10.5V6.8H22.7" fill="none" stroke="#c8243c" stroke-width="1.7"/><path d="M17 -0.5V22.5M13.5 14.7H22.4" stroke="#545454" stroke-width="1.7"/></svg><div class="a" style="left:1893px;top:169px;width:22px;height:1px;background:#c4c4c4"></div><svg style="position:absolute;left:1893px;top:179px" width="23" height="22" viewBox="0 0 23 22"><path d="M3 0V22L21 11Z" fill="none" stroke="#545454" stroke-width="1.6"/><path d="M-1 5H3M-1 17H3M21 11H23.5M5.5 7.5H9M5.5 14.5H9.5M7.5 12.5V16.5" stroke="#545454" stroke-width="1.4"/></svg><svg style="position:absolute;left:1893px;top:211px" width="23" height="22" viewBox="0 0 23 22"><path d="M11 -1V10M1.5 10.5H20.5M4.5 15.5H17.5M8 20.5H14" stroke="#545454" stroke-width="1.8"/></svg><svg style="position:absolute;left:1893px;top:243px" width="23" height="22" viewBox="0 0 23 22"><path d="M2 20L20 2" stroke="#545454" stroke-width="1.5"/></svg><svg style="position:absolute;left:1893px;top:275px" width="23" height="22" viewBox="0 0 23 22"><path d="M3 19.5L19.5 3" stroke="#1a81c4" stroke-width="3" stroke-linecap="round"/></svg><svg style="position:absolute;left:1893px;top:307px" width="23" height="22" viewBox="0 0 23 22"><path d="M0 3H10M0 9H9" stroke="#545454" stroke-width="1.5"/><path d="M10 3L19 11M9 9L19 17" stroke="#1a81c4" stroke-width="1.5"/><path d="M19.5 0V22" stroke="#545454" stroke-width="2"/></svg><svg style="position:absolute;left:1893px;top:339px" width="23" height="22" viewBox="0 0 23 22"><path d="M0 11H8" stroke="#545454" stroke-width="1.5"/><path d="M7 6L17 16M17 6L7 16" stroke="#1a81c4" stroke-width="2"/></svg><svg style="position:absolute;left:1893px;top:371px" width="23" height="22" viewBox="0 0 23 22"><path d="M0 11H22M11 0V22" stroke="#545454" stroke-width="1.5"/><circle cx="11" cy="11" r="4" fill="#1a81c4"/></svg><svg style="position:absolute;left:1893px;top:403px" width="23" height="22" viewBox="0 0 23 22"><path d="M7 13.5L11.5 3.5L16 13.5M8.8 10.3H14.2" fill="none" stroke="#545454" stroke-width="1.7"/><path d="M0.5 16.7H21.5" stroke="#545454" stroke-width="1.8"/></svg><svg style="position:absolute;left:1893px;top:435px" width="23" height="22" viewBox="0 0 23 22"><path d="M0 2.5H12.5L20.5 11L12.5 19.7H0Z" fill="none" stroke="#545454" stroke-width="1.7"/><path d="M3.3 16.7L7.35 6L11.4 16.7M4.92 13.276H9.78" fill="none" stroke="#545454" stroke-width="1.6"/><path d="M20.5 11H23" stroke="#1a81c4" stroke-width="1.6"/></svg><svg style="position:absolute;left:1893px;top:467px" width="23" height="22" viewBox="0 0 23 22"><path d="M0.8 16.5L5.300000000000001 5.3L9.8 16.5M2.6 12.916H8.0" fill="none" stroke="#545454" stroke-width="1.7"/><path d="M10.8 11L14.8 6.5L18.8 11L14.8 15.5Z" fill="none" stroke="#545454" stroke-width="1.7"/><path d="M18.8 11H23" stroke="#545454" stroke-width="1.6"/></svg><svg style="position:absolute;left:1893px;top:499px" width="23" height="22" viewBox="0 0 23 22"><rect x="0.3" y="0.3" width="21.5" height="21" rx="2.5" fill="#d4c7a5" stroke="#545454" stroke-width="1"/><path d="M3.8 3V13M3.8 6.5L10 2.8H19M3.8 9.5L9 13" stroke="#545454" stroke-width="1.5" fill="none"/><path d="M0 8H3.8" stroke="#545454" stroke-width="1.3"/><circle cx="16.2" cy="16.2" r="7" fill="#c8243c"/><path d="M16.2 12.2V20.2M12.2 16.2H20.2" stroke="#fff" stroke-width="2.2"/></svg><svg style="position:absolute;left:1893px;top:531px" width="23" height="22" viewBox="0 0 23 22"><rect x="0.3" y="0.3" width="19.5" height="19" fill="#d4c7a5" stroke="#545454" stroke-width="1"/><path d="M2 11L5.25 2.5L8.5 11M3.3 8.280000000000001H7.2" fill="none" stroke="#545454" stroke-width="1.4"/><path d="M10.5 6L13.5 3L16.5 6L13.5 9Z" fill="none" stroke="#545454" stroke-width="1.3"/><circle cx="16.2" cy="16.2" r="7" fill="#c8243c"/><path d="M16.2 12V19.5M12.8 16.5L16.2 19.9L19.6 16.5" fill="none" stroke="#fff" stroke-width="2.2"/></svg><div class="a" style="left:1893px;top:563px;width:22px;height:1px;background:#c4c4c4"></div><svg style="position:absolute;left:1893px;top:572px" width="23" height="22" viewBox="0 0 23 22"><path d="M1.5 2L20 5L18.5 18L8 13.5L9 8L3 16Z" fill="none" stroke="#545454" stroke-width="1.6" stroke-dasharray="3 2"/></svg><svg style="position:absolute;left:1893px;top:604px" width="23" height="22" viewBox="0 0 23 22"><path d="M2 3H20M11 3V21" stroke="#545454" stroke-width="3.5"/></svg><svg style="position:absolute;left:1893px;top:636px" width="23" height="22" viewBox="0 0 23 22"><rect x="0" y="0" width="22" height="22" rx="3" fill="#545454"/><path d="M2.5 19L8.5 10L13 16L15.5 13L19.5 19Z" fill="#fff"/><circle cx="15" cy="6.5" r="2.2" fill="#fff"/></svg><svg style="position:absolute;left:1893px;top:668px" width="23" height="22" viewBox="0 0 23 22"><path d="M2 1V16L5.5 12.5L8.5 18L10.5 17L8 11.5H13Z" fill="#545454"/><circle cx="16" cy="16" r="6" fill="#c8243c"/><path d="M13.5 13.5L18.5 18.5M18.5 13.5L13.5 18.5" stroke="#fff" stroke-width="2"/></svg><div class="a" style="left:1887px;top:992px;width:34px;height:1px;background:#dcdcdc"></div><div class="a" style="left:1px;top:992px;width:34px;height:1px;background:#dcdcdc"></div><div class="t" style="left:7px;top:1031px;font-size:14px;color:#333;transform:scale(1.00575,1);transform-origin:0 0">File '/home/sendy/Projects/mechanical-keyboard-tutorial/mechanical-keyboard-tutorial.kicad_sch' saved.</div><div class="t" style="left:849.3px;top:1031px;font-size:14px;color:#333;transform:scale(0.8678571428571429,1);transform-origin:0 0">Z 4.36</div><div class="t" style="left:920.7px;top:1031px;font-size:14px;color:#333;transform:scale(0.8630357142857142,1);transform-origin:0 0">X 76.20</div><div class="t" style="left:970px;top:1031px;font-size:14px;color:#333;transform:scale(0.8630357142857142,1);transform-origin:0 0">Y 82.55</div><div class="t" style="left:1083.3px;top:1031px;font-size:14px;color:#333;transform:scale(0.8775000000000001,1);transform-origin:0 0">dx 76.20</div><div class="t" style="left:1139.4px;top:1031px;font-size:14px;color:#333;transform:scale(0.9122142857142856,1);transform-origin:0 0">dy 82.55</div><div class="t" style="left:1197.3px;top:1031px;font-size:14px;color:#333;transform:scale(0.9160714285714285,1);transform-origin:0 0">dist 112.34</div><div class="t" style="left:1350.8px;top:1031px;font-size:14px;color:#333;transform:scale(0.9064285714285714,1);transform-origin:0 0">grid 1.27</div><div class="t" style="left:1541.5px;top:1031px;font-size:14px;color:#333;transform:scale(0.9353571428571428,1);transform-origin:0 0">mm</div><div class="t" style="left:1599.9px;top:1031px;font-size:14px;color:#333;transform:scale(0.9546428571428571,1);transform-origin:0 0">Select item(s)</div><div class="a" style="left:0;top:0;width:1px;height:1050px;background:#111"></div><div class="a" style="left:1921px;top:0;width:1px;height:1050px;background:#111"></div><div class="a" style="left:0;top:1049px;width:1922px;height:1px;background:#111"></div><div class="a" style="left:0;top:0;width:1922px;height:1px;background:#111"></div></body></html>
